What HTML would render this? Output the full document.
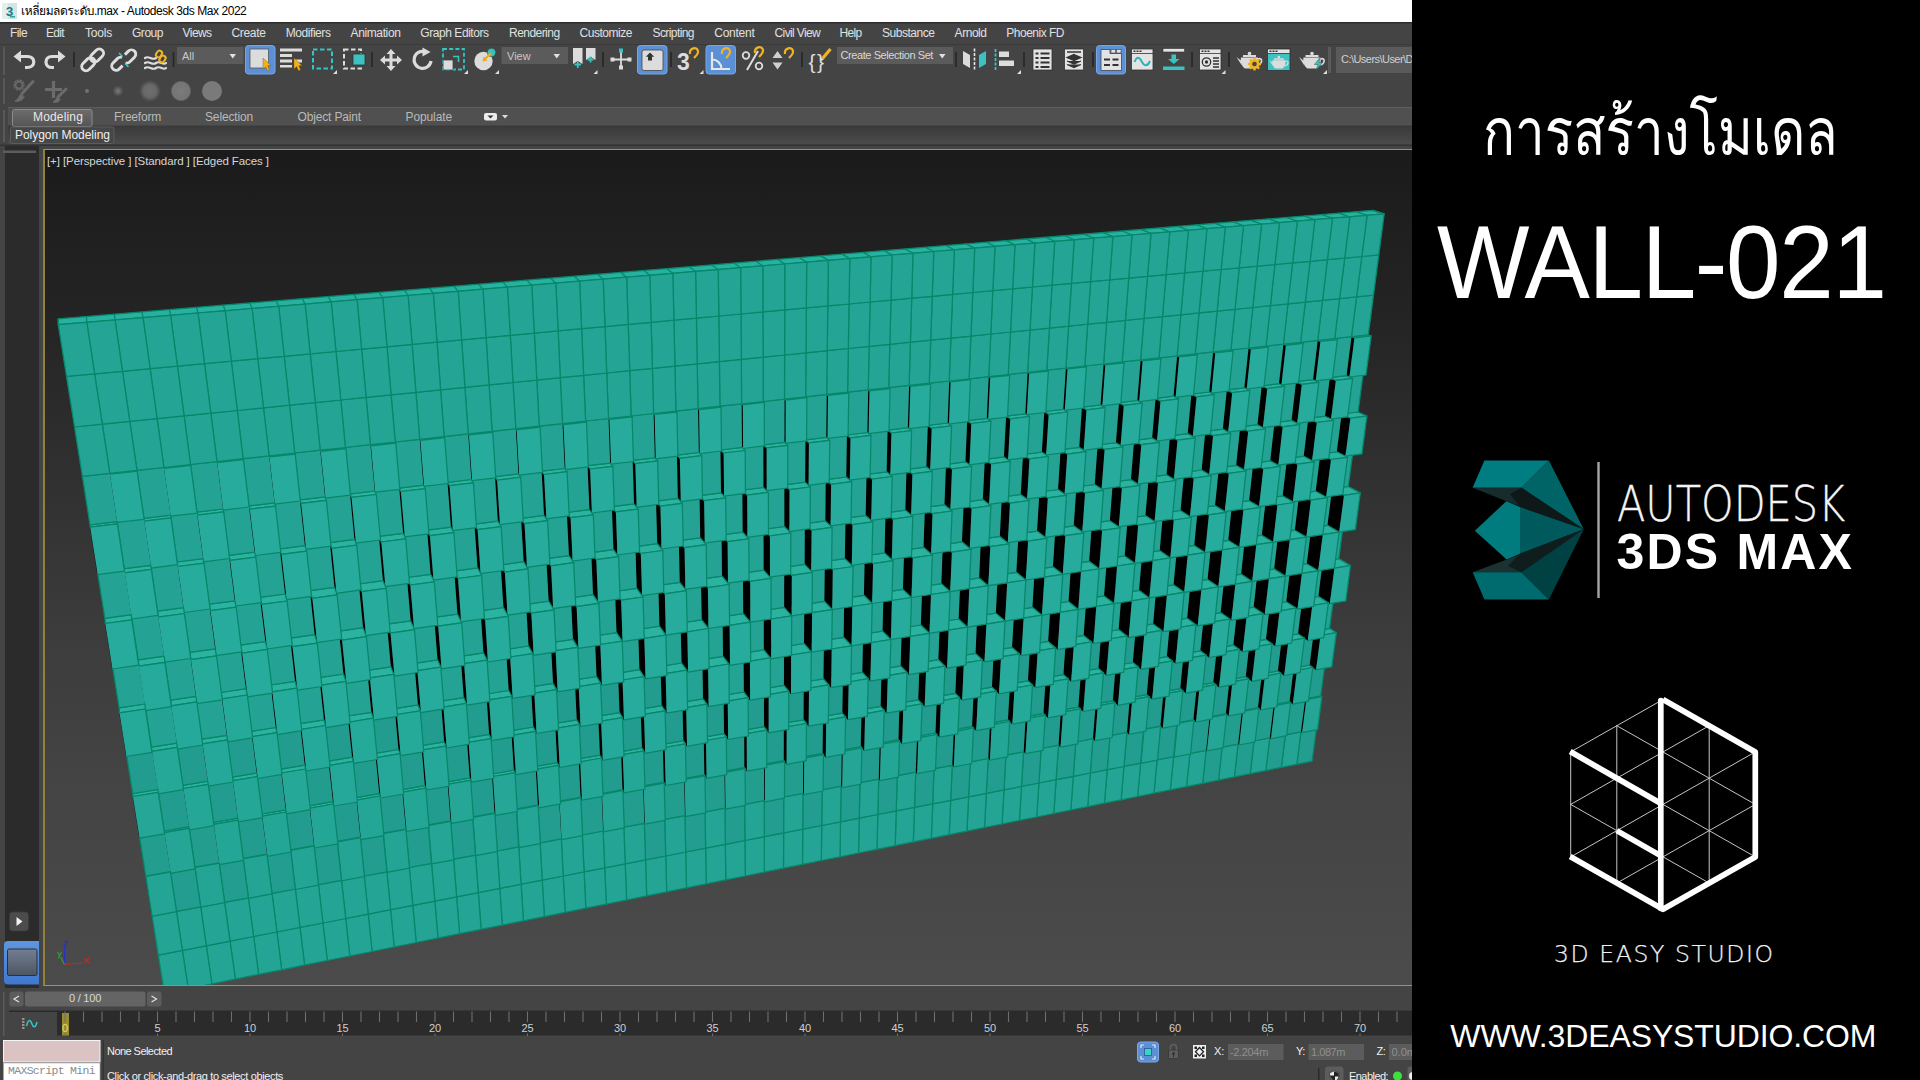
<!DOCTYPE html>
<html lang="th"><head><meta charset="utf-8"><title>WALL-021</title>
<style>
*{margin:0;padding:0;box-sizing:border-box}
html,body{width:1920px;height:1080px;overflow:hidden;background:#444}
body{position:relative;font-family:"Liberation Sans","Loma","Noto Sans Thai","Garuda","Tlwg Typo","FreeSans",sans-serif;font-size:12px;color:#e2e2e2}
.a{position:absolute;white-space:nowrap;line-height:1}
#title{left:0;top:0;width:1412px;height:22px;background:#fff}
#menu{left:0;top:22px;width:1412px;height:22px;background:#444;border-top:1px solid #2a2a2a}
#tb{left:0;top:44px;width:1412px;height:106px;background:#444}
#lstrip{left:5px;top:146px;width:34px;height:842px;background:#2b2b2b}
#vp{left:43px;top:149px;width:1380px;height:837px;border:1px solid #b1922f;border-left:2px solid #94803a;background:linear-gradient(#1b1b1b 0,#242424 20%,#313131 40%,#3d3d3d 60%,#444 76%,#4b4b4b 100%);overflow:hidden}
#track{left:10px;top:1011px;width:1402px;height:26px;background:#2b2b2b}
#panel{left:1412px;top:0;width:508px;height:1080px;background:#000}
.t{position:absolute;white-space:nowrap;line-height:1;transform-origin:0 50%}
svg{position:absolute;left:0;top:0;overflow:visible}
#w polygon{stroke:#07876a;stroke-width:1.25;stroke-linejoin:round}
#w .e{stroke:#07876a;stroke-width:1.25;fill:none;stroke-linejoin:round}
#w .n{stroke:none}
#w .k{fill:#000;stroke:#000;stroke-width:.3}
#w .t{fill:#2cb2a1}
</style></head><body>
<div class="a" id="title"></div><div class="a" id="menu"></div><div class="a" id="tb"></div><div class="a" id="lstrip"></div>
<div class="a" id="vp"><svg width="1380" height="837" viewBox="44 150 1380 837" style="left:-1px;top:0"><g id="w"><polygon points="58.3,324.7 1384.2,213.9 1372.8,210.3 58.2,318.8" fill="#27b1a1"/>
<path class="e" d="M58.3,324.7 L58.2,318.8 M86.8,322.3 L86.4,316.5 M115.0,320.0 L114.3,314.2 M143.0,317.6 L141.9,311.9 M170.6,315.3 L169.3,309.7 M198.0,313.0 L196.4,307.4 M225.2,310.8 L223.3,305.2 M252.1,308.5 L249.9,303.0 M278.7,306.3 L276.2,300.8 M305.1,304.1 L302.4,298.7 M331.2,301.9 L328.2,296.5 M357.1,299.7 L353.9,294.4 M382.7,297.6 L379.2,292.3 M408.1,295.5 L404.4,290.2 M433.3,293.4 L429.3,288.2 M458.2,291.3 L454.0,286.2 M483.0,289.2 L478.5,284.1 M507.4,287.2 L502.8,282.1 M531.7,285.1 L526.8,280.1 M555.8,283.1 L550.7,278.2 M579.6,281.1 L574.3,276.2 M603.2,279.2 L597.7,274.3 M626.6,277.2 L620.9,272.4 M649.8,275.3 L643.9,270.5 M672.8,273.3 L666.7,268.6 M695.6,271.4 L689.3,266.7 M718.2,269.6 L711.7,264.9 M740.6,267.7 L733.9,263.1 M762.8,265.8 L755.9,261.2 M784.8,264.0 L777.7,259.4 M806.7,262.2 L799.4,257.6 M828.3,260.4 L820.8,255.9 M849.8,258.6 L842.1,254.1 M871.0,256.8 L863.2,252.4 M892.1,255.0 L884.2,250.6 M913.0,253.3 L904.9,248.9 M933.8,251.5 L925.5,247.2 M954.3,249.8 L945.9,245.5 M974.7,248.1 L966.1,243.9 M995.0,246.4 L986.2,242.2 M1015.0,244.7 L1006.1,240.6 M1034.9,243.1 L1025.9,238.9 M1054.7,241.4 L1045.5,237.3 M1074.2,239.8 L1064.9,235.7 M1093.7,238.2 L1084.2,234.1 M1112.9,236.6 L1103.3,232.6 M1132.0,235.0 L1122.3,231.0 M1151.0,233.4 L1141.1,229.4 M1169.8,231.8 L1159.8,227.9 M1188.4,230.3 L1178.3,226.4 M1206.9,228.7 L1196.7,224.8 M1225.3,227.2 L1214.9,223.3 M1243.5,225.7 L1233.0,221.8 M1261.6,224.1 L1250.9,220.4 M1279.5,222.7 L1268.8,218.9 M1297.3,221.2 L1286.4,217.4 M1314.9,219.7 L1304.0,216.0 M1332.4,218.2 L1321.4,214.5 M1349.8,216.8 L1338.7,213.1 M1367.1,215.3 L1355.8,211.7 M1384.2,213.9 L1372.8,210.3"/>
<polygon points="1300.9,731.8 1316.4,728.8 1312.1,761.2 1296.8,764.3" fill="#229d8f"/>
<polygon class="k" points="1306.4,699.6 1305.2,698.8 1300.9,731.8 1302.1,732.7"/>
<polygon class="t" points="1306.4,699.6 1321.9,696.7 1320.7,695.8 1305.2,698.8"/>
<polygon class="n" points="1306.4,699.6 1321.9,696.7 1317.6,729.7 1302.1,732.7" fill="#24a596"/><path class="e" d="M1306.4,699.6 L1321.9,696.7 L1317.6,729.7 L1302.1,732.7"/>
<polygon points="1309.5,665.2 1325.1,662.3 1320.7,695.8 1305.2,698.8" fill="#229c8e"/>
<polygon class="k" points="1320.5,635.5 1313.8,631.1 1309.5,665.2 1316.1,669.8"/>
<polygon class="t" points="1320.5,635.5 1336.4,632.7 1329.6,628.3 1313.8,631.1"/>
<polygon class="n" points="1320.5,635.5 1336.4,632.7 1331.8,666.9 1316.1,669.8" fill="#25aa9a"/><path class="e" d="M1320.5,635.5 L1336.4,632.7 L1331.8,666.9 L1316.1,669.8"/>
<polygon points="1318.3,596.4 1334.2,593.7 1329.6,628.3 1313.8,631.1" fill="#24a294"/>
<polygon class="k" points="1334.4,568.2 1322.8,561.1 1318.3,596.4 1329.8,603.7"/>
<polygon class="t" points="1334.4,568.2 1350.5,565.6 1338.8,558.6 1322.8,561.1"/>
<polygon class="n" points="1334.4,568.2 1350.5,565.6 1345.8,601.0 1329.8,603.7" fill="#26ab9c"/><path class="e" d="M1334.4,568.2 L1350.5,565.6 L1345.8,601.0 L1329.8,603.7"/>
<polygon points="1327.4,525.3 1343.5,522.8 1338.8,558.6 1322.8,561.1" fill="#24a294"/>
<polygon class="k" points="1344.0,495.3 1332.1,488.8 1327.4,525.3 1339.2,532.1"/>
<polygon class="t" points="1344.0,495.3 1360.3,492.9 1348.3,486.5 1332.1,488.8"/>
<polygon class="n" points="1344.0,495.3 1360.3,492.9 1355.4,529.6 1339.2,532.1" fill="#26ab9c"/><path class="e" d="M1344.0,495.3 L1360.3,492.9 L1355.4,529.6 L1339.2,532.1"/>
<polygon points="1336.8,451.8 1353.2,449.5 1348.3,486.5 1332.1,488.8" fill="#24a294"/>
<polygon class="k" points="1350.4,418.2 1341.6,414.0 1336.8,451.8 1345.4,456.2"/>
<polygon class="t" points="1350.4,418.2 1366.9,416.1 1358.1,412.0 1341.6,414.0"/>
<polygon class="n" points="1350.4,418.2 1366.9,416.1 1361.9,453.9 1345.4,456.2" fill="#26ab9c"/><path class="e" d="M1350.4,418.2 L1366.9,416.1 L1361.9,453.9 L1345.4,456.2"/>
<polygon points="1346.5,375.7 1363.1,373.7 1358.1,412.0 1341.6,414.0" fill="#24a294"/>
<polygon class="k" points="1354.4,337.9 1351.5,336.6 1346.5,375.7 1349.4,377.0"/>
<polygon class="t" points="1354.4,337.9 1371.2,336.0 1368.3,334.8 1351.5,336.6"/>
<polygon class="n" points="1354.4,337.9 1371.2,336.0 1366.0,375.0 1349.4,377.0" fill="#26ab9c"/><path class="e" d="M1354.4,337.9 L1371.2,336.0 L1366.0,375.0 L1349.4,377.0"/>
<polygon points="1356.6,296.9 1373.5,295.2 1368.3,334.8 1351.5,336.6" fill="#24a495"/>
<polygon points="1361.8,256.5 1378.8,254.9 1373.5,295.2 1356.6,296.9" fill="#24a495"/>
<polygon points="1367.1,215.3 1384.2,213.9 1378.8,254.9 1361.8,256.5" fill="#24a495"/>
<polygon points="1285.4,734.8 1300.9,731.8 1296.8,764.3 1281.3,767.4" fill="#24a495"/>
<polygon class="n" points="1289.5,701.7 1305.2,698.8 1300.9,731.8 1285.4,734.8" fill="#229d8e"/><path class="e" d="M1305.2,698.8 L1289.5,701.7 L1285.4,734.8 L1300.9,731.8"/>
<polygon class="k" points="1297.0,670.4 1293.7,668.0 1289.5,701.7 1292.8,704.1"/>
<polygon class="t" points="1297.0,670.4 1312.8,667.5 1309.5,665.2 1293.7,668.0"/>
<polygon class="n" points="1297.0,670.4 1312.8,667.5 1308.4,701.1 1292.8,704.1" fill="#25a798"/><path class="e" d="M1297.0,670.4 L1312.8,667.5 L1308.4,701.1 L1292.8,704.1"/>
<polygon class="n" points="1298.0,633.8 1313.8,631.1 1309.5,665.2 1293.7,668.0" fill="#229c8e"/><path class="e" d="M1313.8,631.1 L1298.0,633.8 L1293.7,668.0 L1309.5,665.2"/>
<polygon class="k" points="1312.3,605.5 1302.3,599.1 1298.0,633.8 1307.8,640.5"/>
<polygon class="t" points="1312.3,605.5 1328.4,602.8 1318.3,596.4 1302.3,599.1"/>
<polygon class="n" points="1312.3,605.5 1328.4,602.8 1323.8,637.7 1307.8,640.5" fill="#26ab9c"/><path class="e" d="M1312.3,605.5 L1328.4,602.8 L1323.8,637.7 L1307.8,640.5"/>
<polygon class="n" points="1306.7,563.7 1322.8,561.1 1318.3,596.4 1302.3,599.1" fill="#24a294"/><path class="e" d="M1322.8,561.1 L1306.7,563.7 L1302.3,599.1 L1318.3,596.4"/>
<polygon class="k" points="1322.8,534.6 1311.2,527.7 1306.7,563.7 1318.2,570.8"/>
<polygon class="t" points="1322.8,534.6 1339.2,532.1 1327.4,525.3 1311.2,527.7"/>
<polygon class="n" points="1322.8,534.6 1339.2,532.1 1334.4,568.2 1318.2,570.8" fill="#26ab9c"/><path class="e" d="M1322.8,534.6 L1339.2,532.1 L1334.4,568.2 L1318.2,570.8"/>
<polygon class="n" points="1315.7,491.2 1332.1,488.8 1327.4,525.3 1311.2,527.7" fill="#24a294"/><path class="e" d="M1332.1,488.8 L1315.7,491.2 L1311.2,527.7 L1327.4,525.3"/>
<polygon class="k" points="1331.0,459.5 1320.3,454.0 1315.7,491.2 1326.2,497.0"/>
<polygon class="t" points="1331.0,459.5 1347.6,457.3 1336.8,451.8 1320.3,454.0"/>
<polygon class="n" points="1331.0,459.5 1347.6,457.3 1342.7,494.6 1326.2,497.0" fill="#26ab9c"/><path class="e" d="M1331.0,459.5 L1347.6,457.3 L1342.7,494.6 L1326.2,497.0"/>
<polygon class="n" points="1325.0,416.2 1341.6,414.0 1336.8,451.8 1320.3,454.0" fill="#24a294"/><path class="e" d="M1341.6,414.0 L1325.0,416.2 L1320.3,454.0 L1336.8,451.8"/>
<polygon class="k" points="1335.8,380.4 1329.8,377.7 1325.0,416.2 1331.0,419.1"/>
<polygon class="t" points="1335.8,380.4 1352.6,378.4 1346.5,375.7 1329.8,377.7"/>
<polygon class="n" points="1335.8,380.4 1352.6,378.4 1347.6,416.9 1331.0,419.1" fill="#26ab9c"/><path class="e" d="M1335.8,380.4 L1352.6,378.4 L1347.6,416.9 L1331.0,419.1"/>
<polygon class="n" points="1334.7,338.5 1351.5,336.6 1346.5,375.7 1329.8,377.7" fill="#24a394"/><path class="e" d="M1351.5,336.6 L1334.7,338.5 L1329.8,377.7 L1346.5,375.7"/>
<polygon points="1339.6,298.6 1356.6,296.9 1351.5,336.6 1334.7,338.5" fill="#24a495"/>
<polygon points="1344.7,258.1 1361.8,256.5 1356.6,296.9 1339.6,298.6" fill="#24a495"/>
<polygon points="1349.8,216.8 1367.1,215.3 1361.8,256.5 1344.7,258.1" fill="#24a495"/>
<polygon points="1269.7,737.9 1285.4,734.8 1281.3,767.4 1265.8,770.6" fill="#239d8f"/>
<polygon class="k" points="1274.9,705.6 1273.7,704.7 1269.7,737.9 1270.9,738.8"/>
<polygon class="t" points="1274.9,705.6 1290.7,702.6 1289.5,701.7 1273.7,704.7"/>
<polygon class="n" points="1274.9,705.6 1290.7,702.6 1286.6,735.7 1270.9,738.8" fill="#24a596"/><path class="e" d="M1274.9,705.6 L1290.7,702.6 L1286.6,735.7 L1270.9,738.8"/>
<polygon class="n" points="1277.8,670.9 1293.7,668.0 1289.5,701.7 1273.7,704.7" fill="#229c8e"/><path class="e" d="M1293.7,668.0 L1277.8,670.9 L1273.7,704.7 L1289.5,701.7"/>
<polygon class="k" points="1288.4,641.0 1282.0,636.6 1277.8,670.9 1284.2,675.5"/>
<polygon class="t" points="1288.4,641.0 1304.5,638.2 1298.0,633.8 1282.0,636.6"/>
<polygon class="n" points="1288.4,641.0 1304.5,638.2 1300.2,672.6 1284.2,675.5" fill="#25aa9a"/><path class="e" d="M1288.4,641.0 L1304.5,638.2 L1300.2,672.6 L1284.2,675.5"/>
<polygon class="n" points="1286.2,601.7 1302.3,599.1 1298.0,633.8 1282.0,636.6" fill="#24a294"/><path class="e" d="M1302.3,599.1 L1286.2,601.7 L1282.0,636.6 L1298.0,633.8"/>
<polygon class="k" points="1301.9,573.4 1290.5,566.3 1286.2,601.7 1297.5,609.1"/>
<polygon class="t" points="1301.9,573.4 1318.2,570.8 1306.7,563.7 1290.5,566.3"/>
<polygon class="n" points="1301.9,573.4 1318.2,570.8 1313.7,606.4 1297.5,609.1" fill="#26ab9c"/><path class="e" d="M1301.9,573.4 L1318.2,570.8 L1313.7,606.4 L1297.5,609.1"/>
<polygon class="n" points="1294.8,530.2 1311.2,527.7 1306.7,563.7 1290.5,566.3" fill="#24a294"/><path class="e" d="M1311.2,527.7 L1294.8,530.2 L1290.5,566.3 L1306.7,563.7"/>
<polygon class="k" points="1310.9,500.1 1299.2,493.5 1294.8,530.2 1306.4,537.1"/>
<polygon class="t" points="1310.9,500.1 1327.5,497.7 1315.7,491.2 1299.2,493.5"/>
<polygon class="n" points="1310.9,500.1 1327.5,497.7 1322.8,534.6 1306.4,537.1" fill="#26ab9c"/><path class="e" d="M1310.9,500.1 L1327.5,497.7 L1322.8,534.6 L1306.4,537.1"/>
<polygon class="n" points="1303.7,456.2 1320.3,454.0 1315.7,491.2 1299.2,493.5" fill="#24a294"/><path class="e" d="M1320.3,454.0 L1303.7,456.2 L1299.2,493.5 L1315.7,491.2"/>
<polygon class="k" points="1316.8,422.5 1308.3,418.3 1303.7,456.2 1312.1,460.7"/>
<polygon class="t" points="1316.8,422.5 1333.6,420.3 1325.0,416.2 1308.3,418.3"/>
<polygon class="n" points="1316.8,422.5 1333.6,420.3 1328.8,458.4 1312.1,460.7" fill="#26ab9c"/><path class="e" d="M1316.8,422.5 L1333.6,420.3 L1328.8,458.4 L1312.1,460.7"/>
<polygon class="n" points="1313.0,379.7 1329.8,377.7 1325.0,416.2 1308.3,418.3" fill="#24a294"/><path class="e" d="M1329.8,377.7 L1313.0,379.7 L1308.3,418.3 L1325.0,416.2"/>
<polygon class="k" points="1320.4,341.5 1317.7,340.4 1313.0,379.7 1315.7,380.9"/>
<polygon class="t" points="1320.4,341.5 1337.4,339.7 1334.7,338.5 1317.7,340.4"/>
<polygon class="n" points="1320.4,341.5 1337.4,339.7 1332.5,378.9 1315.7,380.9" fill="#26ab9c"/><path class="e" d="M1320.4,341.5 L1337.4,339.7 L1332.5,378.9 L1315.7,380.9"/>
<polygon points="1322.5,300.4 1339.6,298.6 1334.7,338.5 1317.7,340.4" fill="#24a495"/>
<polygon points="1327.4,259.7 1344.7,258.1 1339.6,298.6 1322.5,300.4" fill="#24a495"/>
<polygon points="1332.4,218.2 1349.8,216.8 1344.7,258.1 1327.4,259.7" fill="#24a495"/>
<polygon points="1254.0,741.0 1269.7,737.9 1265.8,770.6 1250.2,773.7" fill="#24a495"/>
<polygon class="n" points="1257.9,707.7 1273.7,704.7 1269.7,737.9 1254.0,741.0" fill="#229d8e"/><path class="e" d="M1273.7,704.7 L1257.9,707.7 L1254.0,741.0 L1269.7,737.9"/>
<polygon class="k" points="1264.9,676.1 1261.8,673.8 1257.9,707.7 1260.9,710.0"/>
<polygon class="t" points="1264.9,676.1 1280.9,673.2 1277.8,670.9 1261.8,673.8"/>
<polygon class="n" points="1264.9,676.1 1280.9,673.2 1276.8,707.0 1260.9,710.0" fill="#25a798"/><path class="e" d="M1264.9,676.1 L1280.9,673.2 L1276.8,707.0 L1260.9,710.0"/>
<polygon class="n" points="1265.9,639.4 1282.0,636.6 1277.8,670.9 1261.8,673.8" fill="#229c8e"/><path class="e" d="M1282.0,636.6 L1265.9,639.4 L1261.8,673.8 L1277.8,670.9"/>
<polygon class="k" points="1279.6,610.9 1269.9,604.4 1265.9,639.4 1275.4,646.1"/>
<polygon class="t" points="1279.6,610.9 1296.0,608.1 1286.2,601.7 1269.9,604.4"/>
<polygon class="n" points="1279.6,610.9 1296.0,608.1 1291.6,643.2 1275.4,646.1" fill="#26ab9c"/><path class="e" d="M1279.6,610.9 L1296.0,608.1 L1291.6,643.2 L1275.4,646.1"/>
<polygon class="n" points="1274.1,568.9 1290.5,566.3 1286.2,601.7 1269.9,604.4" fill="#24a294"/><path class="e" d="M1290.5,566.3 L1274.1,568.9 L1269.9,604.4 L1286.2,601.7"/>
<polygon class="k" points="1289.8,539.6 1278.3,532.7 1274.1,568.9 1285.4,576.1"/>
<polygon class="t" points="1289.8,539.6 1306.4,537.1 1294.8,530.2 1278.3,532.7"/>
<polygon class="n" points="1289.8,539.6 1306.4,537.1 1301.9,573.4 1285.4,576.1" fill="#26ab9c"/><path class="e" d="M1289.8,539.6 L1306.4,537.1 L1301.9,573.4 L1285.4,576.1"/>
<polygon class="n" points="1282.6,495.9 1299.2,493.5 1294.8,530.2 1278.3,532.7" fill="#24a294"/><path class="e" d="M1299.2,493.5 L1282.6,495.9 L1278.3,532.7 L1294.8,530.2"/>
<polygon class="k" points="1297.4,464.1 1287.0,458.5 1282.6,495.9 1292.9,501.8"/>
<polygon class="t" points="1297.4,464.1 1314.2,461.8 1303.7,456.2 1287.0,458.5"/>
<polygon class="n" points="1297.4,464.1 1314.2,461.8 1309.6,499.4 1292.9,501.8" fill="#26ab9c"/><path class="e" d="M1297.4,464.1 L1314.2,461.8 L1309.6,499.4 L1292.9,501.8"/>
<polygon class="n" points="1291.5,420.4 1308.3,418.3 1303.7,456.2 1287.0,458.5" fill="#24a294"/><path class="e" d="M1308.3,418.3 L1291.5,420.4 L1287.0,458.5 L1303.7,456.2"/>
<polygon class="k" points="1301.8,384.4 1296.0,381.7 1291.5,420.4 1297.2,423.3"/>
<polygon class="t" points="1301.8,384.4 1318.8,382.4 1313.0,379.7 1296.0,381.7"/>
<polygon class="n" points="1301.8,384.4 1318.8,382.4 1314.1,421.2 1297.2,423.3" fill="#26ab9c"/><path class="e" d="M1301.8,384.4 L1318.8,382.4 L1314.1,421.2 L1297.2,423.3"/>
<polygon class="n" points="1300.6,342.3 1317.7,340.4 1313.0,379.7 1296.0,381.7" fill="#24a394"/><path class="e" d="M1317.7,340.4 L1300.6,342.3 L1296.0,381.7 L1313.0,379.7"/>
<polygon points="1305.3,302.1 1322.5,300.4 1317.7,340.4 1300.6,342.3" fill="#24a495"/>
<polygon points="1310.1,261.3 1327.4,259.7 1322.5,300.4 1305.3,302.1" fill="#24a495"/>
<polygon points="1314.9,219.7 1332.4,218.2 1327.4,259.7 1310.1,261.3" fill="#24a495"/>
<polygon points="1238.1,744.1 1254.0,741.0 1250.2,773.7 1234.4,776.9" fill="#239d8f"/>
<polygon class="k" points="1243.0,711.5 1241.9,710.7 1238.1,744.1 1239.2,745.0"/>
<polygon class="t" points="1243.0,711.5 1259.0,708.5 1257.9,707.7 1241.9,710.7"/>
<polygon class="n" points="1243.0,711.5 1259.0,708.5 1255.1,741.9 1239.2,745.0" fill="#24a596"/><path class="e" d="M1243.0,711.5 L1259.0,708.5 L1255.1,741.9 L1239.2,745.0"/>
<polygon class="n" points="1245.7,676.7 1261.8,673.8 1257.9,707.7 1241.9,710.7" fill="#229c8e"/><path class="e" d="M1261.8,673.8 L1245.7,676.7 L1241.9,710.7 L1257.9,707.7"/>
<polygon class="k" points="1255.9,646.6 1249.6,642.2 1245.7,676.7 1251.9,681.3"/>
<polygon class="t" points="1255.9,646.6 1272.1,643.8 1265.9,639.4 1249.6,642.2"/>
<polygon class="n" points="1255.9,646.6 1272.1,643.8 1268.1,678.3 1251.9,681.3" fill="#25aa9a"/><path class="e" d="M1255.9,646.6 L1272.1,643.8 L1268.1,678.3 L1251.9,681.3"/>
<polygon class="n" points="1253.6,607.2 1269.9,604.4 1265.9,639.4 1249.6,642.2" fill="#24a294"/><path class="e" d="M1269.9,604.4 L1253.6,607.2 L1249.6,642.2 L1265.9,639.4"/>
<polygon class="k" points="1268.9,578.7 1257.6,571.5 1253.6,607.2 1264.7,614.7"/>
<polygon class="t" points="1268.9,578.7 1285.4,576.1 1274.1,568.9 1257.6,571.5"/>
<polygon class="n" points="1268.9,578.7 1285.4,576.1 1281.1,611.9 1264.7,614.7" fill="#26ab9c"/><path class="e" d="M1268.9,578.7 L1285.4,576.1 L1281.1,611.9 L1264.7,614.7"/>
<polygon class="n" points="1261.8,535.2 1278.3,532.7 1274.1,568.9 1257.6,571.5" fill="#24a294"/><path class="e" d="M1278.3,532.7 L1261.8,535.2 L1257.6,571.5 L1274.1,568.9"/>
<polygon class="k" points="1277.4,505.0 1265.9,498.3 1261.8,535.2 1273.1,542.2"/>
<polygon class="t" points="1277.4,505.0 1294.2,502.5 1282.6,495.9 1265.9,498.3"/>
<polygon class="n" points="1277.4,505.0 1294.2,502.5 1289.8,539.6 1273.1,542.2" fill="#26ab9c"/><path class="e" d="M1277.4,505.0 L1294.2,502.5 L1289.8,539.6 L1273.1,542.2"/>
<polygon class="n" points="1270.2,460.8 1287.0,458.5 1282.6,495.9 1265.9,498.3" fill="#24a294"/><path class="e" d="M1287.0,458.5 L1270.2,460.8 L1265.9,498.3 L1282.6,495.9"/>
<polygon class="k" points="1282.7,426.8 1274.5,422.6 1270.2,460.8 1278.3,465.2"/>
<polygon class="t" points="1282.7,426.8 1299.8,424.6 1291.5,420.4 1274.5,422.6"/>
<polygon class="n" points="1282.7,426.8 1299.8,424.6 1295.2,462.9 1278.3,465.2" fill="#26ab9c"/><path class="e" d="M1282.7,426.8 L1299.8,424.6 L1295.2,462.9 L1278.3,465.2"/>
<polygon class="n" points="1278.9,383.7 1296.0,381.7 1291.5,420.4 1274.5,422.6" fill="#24a294"/><path class="e" d="M1296.0,381.7 L1278.9,383.7 L1274.5,422.6 L1291.5,420.4"/>
<polygon class="k" points="1285.9,345.3 1283.4,344.2 1278.9,383.7 1281.4,384.9"/>
<polygon class="t" points="1285.9,345.3 1303.2,343.4 1300.6,342.3 1283.4,344.2"/>
<polygon class="n" points="1285.9,345.3 1303.2,343.4 1298.5,382.9 1281.4,384.9" fill="#26ab9c"/><path class="e" d="M1285.9,345.3 L1303.2,343.4 L1298.5,382.9 L1281.4,384.9"/>
<polygon points="1287.9,303.9 1305.3,302.1 1300.6,342.3 1283.4,344.2" fill="#24a495"/>
<polygon points="1292.6,262.9 1310.1,261.3 1305.3,302.1 1287.9,303.9" fill="#24a495"/>
<polygon points="1297.3,221.2 1314.9,219.7 1310.1,261.3 1292.6,262.9" fill="#24a495"/>
<polygon points="1222.1,747.2 1238.1,744.1 1234.4,776.9 1218.5,780.1" fill="#24a495"/>
<polygon class="n" points="1225.8,713.7 1241.9,710.7 1238.1,744.1 1222.1,747.2" fill="#229d8e"/><path class="e" d="M1241.9,710.7 L1225.8,713.7 L1222.1,747.2 L1238.1,744.1"/>
<polygon class="k" points="1232.4,681.9 1229.5,679.7 1225.8,713.7 1228.7,716.0"/>
<polygon class="t" points="1232.4,681.9 1248.7,678.9 1245.7,676.7 1229.5,679.7"/>
<polygon class="n" points="1232.4,681.9 1248.7,678.9 1244.8,712.9 1228.7,716.0" fill="#25a797"/><path class="e" d="M1232.4,681.9 L1248.7,678.9 L1244.8,712.9 L1228.7,716.0"/>
<polygon class="n" points="1233.3,645.1 1249.6,642.2 1245.7,676.7 1229.5,679.7" fill="#229c8e"/><path class="e" d="M1249.6,642.2 L1233.3,645.1 L1229.5,679.7 L1245.7,676.7"/>
<polygon class="k" points="1246.6,616.4 1237.2,609.9 1233.3,645.1 1242.6,651.8"/>
<polygon class="t" points="1246.6,616.4 1263.1,613.6 1253.6,607.2 1237.2,609.9"/>
<polygon class="n" points="1246.6,616.4 1263.1,613.6 1259.0,648.9 1242.6,651.8" fill="#26ab9c"/><path class="e" d="M1246.6,616.4 L1263.1,613.6 L1259.0,648.9 L1242.6,651.8"/>
<polygon class="n" points="1241.1,574.1 1257.6,571.5 1253.6,607.2 1237.2,609.9" fill="#24a294"/><path class="e" d="M1257.6,571.5 L1241.1,574.1 L1237.2,609.9 L1253.6,607.2"/>
<polygon class="k" points="1256.3,544.7 1245.0,537.7 1241.1,574.1 1252.2,581.4"/>
<polygon class="t" points="1256.3,544.7 1273.1,542.2 1261.8,535.2 1245.0,537.7"/>
<polygon class="n" points="1256.3,544.7 1273.1,542.2 1268.9,578.7 1252.2,581.4" fill="#26ab9c"/><path class="e" d="M1256.3,544.7 L1273.1,542.2 L1268.9,578.7 L1252.2,581.4"/>
<polygon class="n" points="1249.1,500.7 1265.9,498.3 1261.8,535.2 1245.0,537.7" fill="#24a294"/><path class="e" d="M1265.9,498.3 L1249.1,500.7 L1245.0,537.7 L1261.8,535.2"/>
<polygon class="k" points="1263.3,468.7 1253.2,463.1 1249.1,500.7 1259.1,506.6"/>
<polygon class="t" points="1263.3,468.7 1280.4,466.4 1270.2,460.8 1253.2,463.1"/>
<polygon class="n" points="1263.3,468.7 1280.4,466.4 1276.0,504.2 1259.1,506.6" fill="#26ab9c"/><path class="e" d="M1263.3,468.7 L1280.4,466.4 L1276.0,504.2 L1259.1,506.6"/>
<polygon class="n" points="1257.4,424.7 1274.5,422.6 1270.2,460.8 1253.2,463.1" fill="#24a294"/><path class="e" d="M1274.5,422.6 L1257.4,424.7 L1253.2,463.1 L1270.2,460.8"/>
<polygon class="k" points="1267.3,388.5 1261.7,385.8 1257.4,424.7 1262.9,427.6"/>
<polygon class="t" points="1267.3,388.5 1284.6,386.4 1278.9,383.7 1261.7,385.8"/>
<polygon class="n" points="1267.3,388.5 1284.6,386.4 1280.1,425.5 1262.9,427.6" fill="#26ab9c"/><path class="e" d="M1267.3,388.5 L1284.6,386.4 L1280.1,425.5 L1262.9,427.6"/>
<polygon class="n" points="1266.0,346.1 1283.4,344.2 1278.9,383.7 1261.7,385.8" fill="#24a394"/><path class="e" d="M1283.4,344.2 L1266.0,346.1 L1261.7,385.8 L1278.9,383.7"/>
<polygon points="1270.4,305.7 1287.9,303.9 1283.4,344.2 1266.0,346.1" fill="#24a495"/>
<polygon points="1274.9,264.5 1292.6,262.9 1287.9,303.9 1270.4,305.7" fill="#24a495"/>
<polygon points="1279.5,222.7 1297.3,221.2 1292.6,262.9 1274.9,264.5" fill="#24a495"/>
<polygon points="1206.1,750.3 1222.1,747.2 1218.5,780.1 1202.6,783.4" fill="#239d8f"/>
<polygon class="k" points="1210.5,717.4 1209.6,716.8 1206.1,750.3 1206.9,751.0"/>
<polygon class="t" points="1210.5,717.4 1226.7,714.4 1225.8,713.7 1209.6,716.8"/>
<polygon class="n" points="1210.5,717.4 1226.7,714.4 1223.0,747.9 1206.9,751.0" fill="#24a596"/><path class="e" d="M1210.5,717.4 L1226.7,714.4 L1223.0,747.9 L1206.9,751.0"/>
<polygon class="n" points="1213.2,682.6 1229.5,679.7 1225.8,713.7 1209.6,716.8" fill="#229c8e"/><path class="e" d="M1229.5,679.7 L1213.2,682.6 L1209.6,716.8 L1225.8,713.7"/>
<polygon class="k" points="1222.8,652.3 1216.9,647.9 1213.2,682.6 1219.1,687.2"/>
<polygon class="t" points="1222.8,652.3 1239.4,649.4 1233.3,645.1 1216.9,647.9"/>
<polygon class="n" points="1222.8,652.3 1239.4,649.4 1235.5,684.2 1219.1,687.2" fill="#25aa9a"/><path class="e" d="M1222.8,652.3 L1239.4,649.4 L1235.5,684.2 L1219.1,687.2"/>
<polygon class="n" points="1220.6,612.6 1237.2,609.9 1233.3,645.1 1216.9,647.9" fill="#24a294"/><path class="e" d="M1237.2,609.9 L1220.6,612.6 L1216.9,647.9 L1233.3,645.1"/>
<polygon class="k" points="1235.4,584.1 1224.4,576.8 1220.6,612.6 1231.4,620.3"/>
<polygon class="t" points="1235.4,584.1 1252.2,581.4 1241.1,574.1 1224.4,576.8"/>
<polygon class="n" points="1235.4,584.1 1252.2,581.4 1248.1,617.4 1231.4,620.3" fill="#26ab9c"/><path class="e" d="M1235.4,584.1 L1252.2,581.4 L1248.1,617.4 L1231.4,620.3"/>
<polygon class="n" points="1228.2,540.3 1245.0,537.7 1241.1,574.1 1224.4,576.8" fill="#24a294"/><path class="e" d="M1245.0,537.7 L1228.2,540.3 L1224.4,576.8 L1241.1,574.1"/>
<polygon class="k" points="1243.4,509.9 1232.1,503.1 1228.2,540.3 1239.3,547.3"/>
<polygon class="t" points="1243.4,509.9 1260.5,507.4 1249.1,500.7 1232.1,503.1"/>
<polygon class="n" points="1243.4,509.9 1260.5,507.4 1256.3,544.7 1239.3,547.3" fill="#26ab9c"/><path class="e" d="M1243.4,509.9 L1260.5,507.4 L1256.3,544.7 L1239.3,547.3"/>
<polygon class="n" points="1236.1,465.4 1253.2,463.1 1249.1,500.7 1232.1,503.1" fill="#24a294"/><path class="e" d="M1253.2,463.1 L1236.1,465.4 L1232.1,503.1 L1249.1,500.7"/>
<polygon class="k" points="1248.2,431.2 1240.2,426.9 1236.1,465.4 1244.0,469.9"/>
<polygon class="t" points="1248.2,431.2 1265.5,429.0 1257.4,424.7 1240.2,426.9"/>
<polygon class="n" points="1248.2,431.2 1265.5,429.0 1261.2,467.5 1244.0,469.9" fill="#26ab9c"/><path class="e" d="M1248.2,431.2 L1265.5,429.0 L1261.2,467.5 L1244.0,469.9"/>
<polygon class="n" points="1244.3,387.8 1261.7,385.8 1257.4,424.7 1240.2,426.9" fill="#24a294"/><path class="e" d="M1261.7,385.8 L1244.3,387.8 L1240.2,426.9 L1257.4,424.7"/>
<polygon class="k" points="1250.9,349.1 1248.5,348.0 1244.3,387.8 1246.7,389.0"/>
<polygon class="t" points="1250.9,349.1 1268.4,347.2 1266.0,346.1 1248.5,348.0"/>
<polygon class="n" points="1250.9,349.1 1268.4,347.2 1264.0,386.9 1246.7,389.0" fill="#26ab9c"/><path class="e" d="M1250.9,349.1 L1268.4,347.2 L1264.0,386.9 L1246.7,389.0"/>
<polygon points="1252.8,307.5 1270.4,305.7 1266.0,346.1 1248.5,348.0" fill="#24a495"/>
<polygon points="1257.1,266.2 1274.9,264.5 1270.4,305.7 1252.8,307.5" fill="#24a495"/>
<polygon points="1261.6,224.1 1279.5,222.7 1274.9,264.5 1257.1,266.2" fill="#24a495"/>
<polygon points="1189.9,753.5 1206.1,750.3 1202.6,783.4 1186.5,786.6" fill="#24a495"/>
<polygon class="n" points="1193.3,719.8 1209.6,716.8 1206.1,750.3 1189.9,753.5" fill="#229d8f"/><path class="e" d="M1209.6,716.8 L1193.3,719.8 L1189.9,753.5 L1206.1,750.3"/>
<polygon class="k" points="1199.5,687.7 1196.8,685.6 1193.3,719.8 1196.0,722.0"/>
<polygon class="t" points="1199.5,687.7 1216.0,684.7 1213.2,682.6 1196.8,685.6"/>
<polygon class="n" points="1199.5,687.7 1216.0,684.7 1212.3,718.9 1196.0,722.0" fill="#25a797"/><path class="e" d="M1199.5,687.7 L1216.0,684.7 L1212.3,718.9 L1196.0,722.0"/>
<polygon class="n" points="1200.3,650.8 1216.9,647.9 1213.2,682.6 1196.8,685.6" fill="#229c8e"/><path class="e" d="M1216.9,647.9 L1200.3,650.8 L1196.8,685.6 L1213.2,682.6"/>
<polygon class="k" points="1213.0,621.9 1203.9,615.4 1200.3,650.8 1209.3,657.5"/>
<polygon class="t" points="1213.0,621.9 1229.8,619.1 1220.6,612.6 1203.9,615.4"/>
<polygon class="n" points="1213.0,621.9 1229.8,619.1 1225.9,654.6 1209.3,657.5" fill="#26ab9c"/><path class="e" d="M1213.0,621.9 L1229.8,619.1 L1225.9,654.6 L1209.3,657.5"/>
<polygon class="n" points="1207.5,579.4 1224.4,576.8 1220.6,612.6 1203.9,615.4" fill="#24a294"/><path class="e" d="M1224.4,576.8 L1207.5,579.4 L1203.9,615.4 L1220.6,612.6"/>
<polygon class="k" points="1222.3,549.9 1211.3,542.8 1207.5,579.4 1218.4,586.8"/>
<polygon class="t" points="1222.3,549.9 1239.3,547.3 1228.2,540.3 1211.3,542.8"/>
<polygon class="n" points="1222.3,549.9 1239.3,547.3 1235.4,584.1 1218.4,586.8" fill="#26ab9c"/><path class="e" d="M1222.3,549.9 L1239.3,547.3 L1235.4,584.1 L1218.4,586.8"/>
<polygon class="n" points="1215.0,505.6 1232.1,503.1 1228.2,540.3 1211.3,542.8" fill="#24a294"/><path class="e" d="M1232.1,503.1 L1215.0,505.6 L1211.3,542.8 L1228.2,540.3"/>
<polygon class="k" points="1228.8,473.4 1218.9,467.7 1215.0,505.6 1224.8,511.6"/>
<polygon class="t" points="1228.8,473.4 1246.1,471.0 1236.1,465.4 1218.9,467.7"/>
<polygon class="n" points="1228.8,473.4 1246.1,471.0 1242.0,509.1 1224.8,511.6" fill="#26ab9c"/><path class="e" d="M1228.8,473.4 L1246.1,471.0 L1242.0,509.1 L1224.8,511.6"/>
<polygon class="n" points="1222.8,429.1 1240.2,426.9 1236.1,465.4 1218.9,467.7" fill="#24a294"/><path class="e" d="M1240.2,426.9 L1222.8,429.1 L1218.9,467.7 L1236.1,465.4"/>
<polygon class="k" points="1232.2,392.6 1226.8,389.9 1222.8,429.1 1228.2,432.0"/>
<polygon class="t" points="1232.2,392.6 1249.8,390.5 1244.3,387.8 1226.8,389.9"/>
<polygon class="n" points="1232.2,392.6 1249.8,390.5 1245.6,429.8 1228.2,432.0" fill="#26ab9c"/><path class="e" d="M1232.2,392.6 L1249.8,390.5 L1245.6,429.8 L1228.2,432.0"/>
<polygon class="n" points="1230.9,349.9 1248.5,348.0 1244.3,387.8 1226.8,389.9" fill="#24a394"/><path class="e" d="M1248.5,348.0 L1230.9,349.9 L1226.8,389.9 L1244.3,387.8"/>
<polygon points="1235.0,309.3 1252.8,307.5 1248.5,348.0 1230.9,349.9" fill="#24a495"/>
<polygon points="1239.2,267.8 1257.1,266.2 1252.8,307.5 1235.0,309.3" fill="#24a495"/>
<polygon points="1243.5,225.7 1261.6,224.1 1257.1,266.2 1239.2,267.8" fill="#24a495"/>
<polygon points="1173.6,756.7 1189.9,753.5 1186.5,786.6 1170.3,789.9" fill="#24a495"/>
<polygon class="k" points="1177.4,723.4 1176.9,722.9 1173.6,756.7 1174.1,757.2"/>
<polygon class="t" points="1177.4,723.4 1193.9,720.3 1193.3,719.8 1176.9,722.9"/>
<polygon points="1177.4,723.4 1193.9,720.3 1190.5,754.0 1174.1,757.2" fill="#24a596"/>
<polygon class="n" points="1180.2,688.6 1196.8,685.6 1193.3,719.8 1176.9,722.9" fill="#229c8e"/><path class="e" d="M1196.8,685.6 L1180.2,688.6 L1176.9,722.9 L1193.3,719.8"/>
<polygon class="k" points="1189.4,658.1 1183.6,653.7 1180.2,688.6 1185.9,693.1"/>
<polygon class="t" points="1189.4,658.1 1206.1,655.1 1200.3,650.8 1183.6,653.7"/>
<polygon class="n" points="1189.4,658.1 1206.1,655.1 1202.5,690.1 1185.9,693.1" fill="#25a99a"/><path class="e" d="M1189.4,658.1 L1206.1,655.1 L1202.5,690.1 L1185.9,693.1"/>
<polygon class="n" points="1187.1,618.2 1203.9,615.4 1200.3,650.8 1183.6,653.7" fill="#24a294"/><path class="e" d="M1203.9,615.4 L1187.1,618.2 L1183.6,653.7 L1200.3,650.8"/>
<polygon class="k" points="1201.4,589.6 1190.6,582.1 1187.1,618.2 1197.7,625.9"/>
<polygon class="t" points="1201.4,589.6 1218.4,586.8 1207.5,579.4 1190.6,582.1"/>
<polygon class="n" points="1201.4,589.6 1218.4,586.8 1214.6,623.1 1197.7,625.9" fill="#26ab9c"/><path class="e" d="M1201.4,589.6 L1218.4,586.8 L1214.6,623.1 L1197.7,625.9"/>
<polygon class="n" points="1194.2,545.4 1211.3,542.8 1207.5,579.4 1190.6,582.1" fill="#24a294"/><path class="e" d="M1211.3,542.8 L1194.2,545.4 L1190.6,582.1 L1207.5,579.4"/>
<polygon class="k" points="1208.9,514.9 1197.8,508.1 1194.2,545.4 1205.1,552.6"/>
<polygon class="t" points="1208.9,514.9 1226.2,512.4 1215.0,505.6 1197.8,508.1"/>
<polygon class="n" points="1208.9,514.9 1226.2,512.4 1222.3,549.9 1205.1,552.6" fill="#26ab9c"/><path class="e" d="M1208.9,514.9 L1226.2,512.4 L1222.3,549.9 L1205.1,552.6"/>
<polygon class="n" points="1201.6,470.0 1218.9,467.7 1215.0,505.6 1197.8,508.1" fill="#24a294"/><path class="e" d="M1218.9,467.7 L1201.6,470.0 L1197.8,508.1 L1215.0,505.6"/>
<polygon class="k" points="1213.1,435.6 1205.3,431.4 1201.6,470.0 1209.2,474.6"/>
<polygon class="t" points="1213.1,435.6 1230.7,433.4 1222.8,429.1 1205.3,431.4"/>
<polygon class="n" points="1213.1,435.6 1230.7,433.4 1226.7,472.2 1209.2,474.6" fill="#26ab9c"/><path class="e" d="M1213.1,435.6 L1230.7,433.4 L1226.7,472.2 L1209.2,474.6"/>
<polygon class="n" points="1209.2,392.0 1226.8,389.9 1222.8,429.1 1205.3,431.4" fill="#24a294"/><path class="e" d="M1226.8,389.9 L1209.2,392.0 L1205.3,431.4 L1222.8,429.1"/>
<polygon class="k" points="1215.3,353.0 1213.1,351.9 1209.2,392.0 1211.4,393.1"/>
<polygon class="t" points="1215.3,353.0 1233.1,351.0 1230.9,349.9 1213.1,351.9"/>
<polygon class="n" points="1215.3,353.0 1233.1,351.0 1229.0,391.0 1211.4,393.1" fill="#26ab9c"/><path class="e" d="M1215.3,353.0 L1233.1,351.0 L1229.0,391.0 L1211.4,393.1"/>
<polygon points="1217.1,311.1 1235.0,309.3 1230.9,349.9 1213.1,351.9" fill="#24a495"/>
<polygon points="1221.1,269.5 1239.2,267.8 1235.0,309.3 1217.1,311.1" fill="#24a495"/>
<polygon points="1225.3,227.2 1243.5,225.7 1239.2,267.8 1221.1,269.5" fill="#24a495"/>
<polygon points="1157.1,759.9 1173.6,756.7 1170.3,789.9 1154.0,793.2" fill="#24a495"/>
<polygon points="1160.3,726.0 1176.9,722.9 1173.6,756.7 1157.1,759.9" fill="#229d8f"/>
<polygon class="k" points="1166.1,693.7 1163.5,691.6 1160.3,726.0 1162.8,728.2"/>
<polygon class="t" points="1166.1,693.7 1182.8,690.7 1180.2,688.6 1163.5,691.6"/>
<polygon class="n" points="1166.1,693.7 1182.8,690.7 1179.4,725.0 1162.8,728.2" fill="#25a697"/><path class="e" d="M1166.1,693.7 L1182.8,690.7 L1179.4,725.0 L1162.8,728.2"/>
<polygon class="n" points="1166.8,656.6 1183.6,653.7 1180.2,688.6 1163.5,691.6" fill="#229c8e"/><path class="e" d="M1183.6,653.7 L1166.8,656.6 L1163.5,691.6 L1180.2,688.6"/>
<polygon class="k" points="1178.9,627.5 1170.1,621.0 1166.8,656.6 1175.5,663.4"/>
<polygon class="t" points="1178.9,627.5 1196.0,624.7 1187.1,618.2 1170.1,621.0"/>
<polygon class="n" points="1178.9,627.5 1196.0,624.7 1192.4,660.4 1175.5,663.4" fill="#26ab9c"/><path class="e" d="M1178.9,627.5 L1196.0,624.7 L1192.4,660.4 L1175.5,663.4"/>
<polygon class="n" points="1173.5,584.8 1190.6,582.1 1187.1,618.2 1170.1,621.0" fill="#24a294"/><path class="e" d="M1190.6,582.1 L1173.5,584.8 L1170.1,621.0 L1187.1,618.2"/>
<polygon class="k" points="1187.7,555.2 1177.0,548.0 1173.5,584.8 1184.2,592.3"/>
<polygon class="t" points="1187.7,555.2 1205.1,552.6 1194.2,545.4 1177.0,548.0"/>
<polygon class="n" points="1187.7,555.2 1205.1,552.6 1201.4,589.6 1184.2,592.3" fill="#26ab9c"/><path class="e" d="M1187.7,555.2 L1205.1,552.6 L1201.4,589.6 L1184.2,592.3"/>
<polygon class="n" points="1180.5,510.5 1197.8,508.1 1194.2,545.4 1177.0,548.0" fill="#24a294"/><path class="e" d="M1197.8,508.1 L1180.5,510.5 L1177.0,548.0 L1194.2,545.4"/>
<polygon class="k" points="1193.7,478.2 1184.1,472.4 1180.5,510.5 1190.0,516.6"/>
<polygon class="t" points="1193.7,478.2 1211.2,475.7 1201.6,470.0 1184.1,472.4"/>
<polygon class="n" points="1193.7,478.2 1211.2,475.7 1207.4,514.0 1190.0,516.6" fill="#26ab9c"/><path class="e" d="M1193.7,478.2 L1211.2,475.7 L1207.4,514.0 L1190.0,516.6"/>
<polygon class="n" points="1187.7,433.6 1205.3,431.4 1201.6,470.0 1184.1,472.4" fill="#24a294"/><path class="e" d="M1205.3,431.4 L1187.7,433.6 L1184.1,472.4 L1201.6,470.0"/>
<polygon class="k" points="1196.6,396.8 1191.4,394.1 1187.7,433.6 1192.8,436.5"/>
<polygon class="t" points="1196.6,396.8 1214.4,394.7 1209.2,392.0 1191.4,394.1"/>
<polygon class="n" points="1196.6,396.8 1214.4,394.7 1210.5,434.2 1192.8,436.5" fill="#26ab9c"/><path class="e" d="M1196.6,396.8 L1214.4,394.7 L1210.5,434.2 L1192.8,436.5"/>
<polygon class="n" points="1195.2,353.9 1213.1,351.9 1209.2,392.0 1191.4,394.1" fill="#24a394"/><path class="e" d="M1213.1,351.9 L1195.2,353.9 L1191.4,394.1 L1209.2,392.0"/>
<polygon points="1199.0,312.9 1217.1,311.1 1213.1,351.9 1195.2,353.9" fill="#24a495"/>
<polygon points="1202.9,271.2 1221.1,269.5 1217.1,311.1 1199.0,312.9" fill="#24a495"/>
<polygon points="1206.9,228.7 1225.3,227.2 1221.1,269.5 1202.9,271.2" fill="#24a495"/>
<polygon points="1140.6,763.1 1157.1,759.9 1154.0,793.2 1137.6,796.5" fill="#24a495"/>
<polygon class="k" points="1144.0,729.5 1143.6,729.2 1140.6,763.1 1140.9,763.4"/>
<polygon class="t" points="1144.0,729.5 1160.6,726.3 1160.3,726.0 1143.6,729.2"/>
<polygon points="1144.0,729.5 1160.6,726.3 1157.5,760.2 1140.9,763.4" fill="#24a495"/>
<polygon class="n" points="1146.7,694.7 1163.5,691.6 1160.3,726.0 1143.6,729.2" fill="#229c8e"/><path class="e" d="M1163.5,691.6 L1146.7,694.7 L1143.6,729.2 L1160.3,726.0"/>
<polygon class="k" points="1155.4,663.9 1149.9,659.6 1146.7,694.7 1152.2,699.2"/>
<polygon class="t" points="1155.4,663.9 1172.4,660.9 1166.8,656.6 1149.9,659.6"/>
<polygon class="n" points="1155.4,663.9 1172.4,660.9 1169.0,696.1 1152.2,699.2" fill="#25a99a"/><path class="e" d="M1155.4,663.9 L1172.4,660.9 L1169.0,696.1 L1152.2,699.2"/>
<polygon class="n" points="1153.1,623.9 1170.1,621.0 1166.8,656.6 1149.9,659.6" fill="#24a294"/><path class="e" d="M1170.1,621.0 L1153.1,623.9 L1149.9,659.6 L1166.8,656.6"/>
<polygon class="k" points="1166.9,595.1 1156.3,587.6 1153.1,623.9 1163.5,631.7"/>
<polygon class="t" points="1166.9,595.1 1184.2,592.3 1173.5,584.8 1156.3,587.6"/>
<polygon class="n" points="1166.9,595.1 1184.2,592.3 1180.7,628.8 1163.5,631.7" fill="#26ab9c"/><path class="e" d="M1166.9,595.1 L1184.2,592.3 L1180.7,628.8 L1163.5,631.7"/>
<polygon class="n" points="1159.7,550.6 1177.0,548.0 1173.5,584.8 1156.3,587.6" fill="#24a294"/><path class="e" d="M1177.0,548.0 L1159.7,550.6 L1156.3,587.6 L1173.5,584.8"/>
<polygon class="k" points="1173.8,520.0 1163.0,513.0 1159.7,550.6 1170.3,557.9"/>
<polygon class="t" points="1173.8,520.0 1191.4,517.5 1180.5,510.5 1163.0,513.0"/>
<polygon class="n" points="1173.8,520.0 1191.4,517.5 1187.7,555.2 1170.3,557.9" fill="#26ab9c"/><path class="e" d="M1173.8,520.0 L1191.4,517.5 L1187.7,555.2 L1170.3,557.9"/>
<polygon class="n" points="1166.5,474.8 1184.1,472.4 1180.5,510.5 1163.0,513.0" fill="#24a294"/><path class="e" d="M1184.1,472.4 L1166.5,474.8 L1163.0,513.0 L1180.5,510.5"/>
<polygon class="k" points="1177.5,440.2 1170.0,435.8 1166.5,474.8 1173.9,479.3"/>
<polygon class="t" points="1177.5,440.2 1195.3,437.9 1187.7,433.6 1170.0,435.8"/>
<polygon class="n" points="1177.5,440.2 1195.3,437.9 1191.6,476.9 1173.9,479.3" fill="#26ab9c"/><path class="e" d="M1177.5,440.2 L1195.3,437.9 L1191.6,476.9 L1173.9,479.3"/>
<polygon class="n" points="1173.5,396.2 1191.4,394.1 1187.7,433.6 1170.0,435.8" fill="#24a294"/><path class="e" d="M1191.4,394.1 L1173.5,396.2 L1170.0,435.8 L1187.7,433.6"/>
<polygon class="k" points="1179.2,356.9 1177.1,355.9 1173.5,396.2 1175.6,397.3"/>
<polygon class="t" points="1179.2,356.9 1197.3,354.9 1195.2,353.9 1177.1,355.9"/>
<polygon class="n" points="1179.2,356.9 1197.3,354.9 1193.5,395.2 1175.6,397.3" fill="#26ab9c"/><path class="e" d="M1179.2,356.9 L1197.3,354.9 L1193.5,395.2 L1175.6,397.3"/>
<polygon points="1180.8,314.8 1199.0,312.9 1195.2,353.9 1177.1,355.9" fill="#24a495"/>
<polygon points="1184.6,272.9 1202.9,271.2 1199.0,312.9 1180.8,314.8" fill="#24a495"/>
<polygon points="1188.4,230.3 1206.9,228.7 1202.9,271.2 1184.6,272.9" fill="#24a495"/>
<polygon points="1123.9,766.4 1140.6,763.1 1137.6,796.5 1121.1,799.9" fill="#24a495"/>
<polygon points="1126.9,732.4 1143.6,729.2 1140.6,763.1 1123.9,766.4" fill="#229d8f"/>
<polygon class="k" points="1132.2,699.7 1129.8,697.7 1126.9,732.4 1129.2,734.4"/>
<polygon class="t" points="1132.2,699.7 1149.1,696.7 1146.7,694.7 1129.8,697.7"/>
<polygon class="n" points="1132.2,699.7 1149.1,696.7 1146.0,731.2 1129.2,734.4" fill="#25a697"/><path class="e" d="M1132.2,699.7 L1149.1,696.7 L1146.0,731.2 L1129.2,734.4"/>
<polygon class="n" points="1132.8,662.5 1149.9,659.6 1146.7,694.7 1129.8,697.7" fill="#229c8e"/><path class="e" d="M1149.9,659.6 L1132.8,662.5 L1129.8,697.7 L1146.7,694.7"/>
<polygon class="k" points="1144.4,633.3 1135.9,626.7 1132.8,662.5 1141.2,669.3"/>
<polygon class="t" points="1144.4,633.3 1161.7,630.3 1153.1,623.9 1135.9,626.7"/>
<polygon class="n" points="1144.4,633.3 1161.7,630.3 1158.4,666.3 1141.2,669.3" fill="#26ab9c"/><path class="e" d="M1144.4,633.3 L1161.7,630.3 L1158.4,666.3 L1141.2,669.3"/>
<polygon class="n" points="1139.0,590.3 1156.3,587.6 1153.1,623.9 1135.9,626.7" fill="#24a294"/><path class="e" d="M1156.3,587.6 L1139.0,590.3 L1135.9,626.7 L1153.1,623.9"/>
<polygon class="k" points="1152.7,560.6 1142.2,553.3 1139.0,590.3 1149.4,597.9"/>
<polygon class="t" points="1152.7,560.6 1170.3,557.9 1159.7,550.6 1142.2,553.3"/>
<polygon class="n" points="1152.7,560.6 1170.3,557.9 1166.9,595.1 1149.4,597.9" fill="#26ab9c"/><path class="e" d="M1152.7,560.6 L1170.3,557.9 L1166.9,595.1 L1149.4,597.9"/>
<polygon class="n" points="1145.4,515.6 1163.0,513.0 1159.7,550.6 1142.2,553.3" fill="#24a294"/><path class="e" d="M1163.0,513.0 L1145.4,515.6 L1142.2,553.3 L1159.7,550.6"/>
<polygon class="k" points="1158.0,483.0 1148.7,477.2 1145.4,515.6 1154.6,521.6"/>
<polygon class="t" points="1158.0,483.0 1175.9,480.5 1166.5,474.8 1148.7,477.2"/>
<polygon class="n" points="1158.0,483.0 1175.9,480.5 1172.3,519.1 1154.6,521.6" fill="#26ab9c"/><path class="e" d="M1158.0,483.0 L1175.9,480.5 L1172.3,519.1 L1154.6,521.6"/>
<polygon class="n" points="1152.1,438.1 1170.0,435.8 1166.5,474.8 1148.7,477.2" fill="#24a294"/><path class="e" d="M1170.0,435.8 L1152.1,438.1 L1148.7,477.2 L1166.5,474.8"/>
<polygon class="k" points="1160.5,401.1 1155.5,398.4 1152.1,438.1 1157.0,441.0"/>
<polygon class="t" points="1160.5,401.1 1178.6,398.9 1173.5,396.2 1155.5,398.4"/>
<polygon class="n" points="1160.5,401.1 1178.6,398.9 1175.0,438.7 1157.0,441.0" fill="#26ab9c"/><path class="e" d="M1160.5,401.1 L1178.6,398.9 L1175.0,438.7 L1157.0,441.0"/>
<polygon class="n" points="1159.0,357.9 1177.1,355.9 1173.5,396.2 1155.5,398.4" fill="#24a394"/><path class="e" d="M1177.1,355.9 L1159.0,357.9 L1155.5,398.4 L1173.5,396.2"/>
<polygon points="1162.5,316.6 1180.8,314.8 1177.1,355.9 1159.0,357.9" fill="#24a495"/>
<polygon points="1166.1,274.6 1184.6,272.9 1180.8,314.8 1162.5,316.6" fill="#24a495"/>
<polygon points="1169.8,231.8 1188.4,230.3 1184.6,272.9 1166.1,274.6" fill="#24a495"/>
<polygon points="1107.2,769.7 1123.9,766.4 1121.1,799.9 1104.4,803.2" fill="#24a495"/>
<polygon points="1110.0,735.6 1126.9,732.4 1124.0,766.5 1107.2,769.7" fill="#24a495"/>
<polygon class="n" points="1112.8,700.8 1129.8,697.7 1126.9,732.4 1110.0,735.5" fill="#229c8e"/><path class="e" d="M1129.8,697.7 L1112.8,700.8 L1110.0,735.5 L1126.9,732.4"/>
<polygon class="k" points="1120.9,669.8 1115.7,665.5 1112.8,700.8 1118.0,705.3"/>
<polygon class="t" points="1120.9,669.8 1138.2,666.8 1132.8,662.5 1115.7,665.5"/>
<polygon class="n" points="1120.9,669.8 1138.2,666.8 1135.1,702.2 1118.0,705.3" fill="#25a99a"/><path class="e" d="M1120.9,669.8 L1138.2,666.8 L1135.1,702.2 L1118.0,705.3"/>
<polygon class="n" points="1118.6,629.6 1135.9,626.7 1132.8,662.5 1115.7,665.5" fill="#229c8e"/><path class="e" d="M1135.9,626.7 L1118.6,629.6 L1115.7,665.5 L1132.8,662.5"/>
<polygon class="k" points="1131.8,600.8 1121.6,593.1 1118.6,629.6 1128.7,637.6"/>
<polygon class="t" points="1131.8,600.8 1149.4,597.9 1139.0,590.3 1121.6,593.1"/>
<polygon class="n" points="1131.8,600.8 1149.4,597.9 1146.2,634.6 1128.7,637.6" fill="#26ab9c"/><path class="e" d="M1131.8,600.8 L1149.4,597.9 L1146.2,634.6 L1128.7,637.6"/>
<polygon class="n" points="1124.6,555.9 1142.2,553.3 1139.0,590.3 1121.6,593.1" fill="#24a294"/><path class="e" d="M1142.2,553.3 L1124.6,555.9 L1121.6,593.1 L1139.0,590.3"/>
<polygon class="k" points="1138.2,525.2 1127.7,518.1 1124.6,555.9 1135.0,563.3"/>
<polygon class="t" points="1138.2,525.2 1156.1,522.6 1145.4,515.6 1127.7,518.1"/>
<polygon class="n" points="1138.2,525.2 1156.1,522.6 1152.7,560.6 1135.0,563.3" fill="#26ab9c"/><path class="e" d="M1138.2,525.2 L1156.1,522.6 L1152.7,560.6 L1135.0,563.3"/>
<polygon class="n" points="1130.9,479.6 1148.7,477.2 1145.4,515.6 1127.7,518.1" fill="#24a294"/><path class="e" d="M1148.7,477.2 L1130.9,479.6 L1127.7,518.1 L1145.4,515.6"/>
<polygon class="k" points="1141.3,444.7 1134.1,440.4 1130.9,479.6 1138.0,484.2"/>
<polygon class="t" points="1141.3,444.7 1159.4,442.4 1152.1,438.1 1134.1,440.4"/>
<polygon class="n" points="1141.3,444.7 1159.4,442.4 1156.0,481.7 1138.0,484.2" fill="#26ab9c"/><path class="e" d="M1141.3,444.7 L1159.4,442.4 L1156.0,481.7 L1138.0,484.2"/>
<polygon class="n" points="1137.3,400.5 1155.5,398.4 1152.1,438.1 1134.1,440.4" fill="#24a294"/><path class="e" d="M1155.5,398.4 L1137.3,400.5 L1134.1,440.4 L1152.1,438.1"/>
<polygon class="k" points="1142.6,360.9 1140.6,359.9 1137.3,400.5 1139.2,401.6"/>
<polygon class="t" points="1142.6,360.9 1160.9,358.8 1159.0,357.9 1140.6,359.9"/>
<polygon class="n" points="1142.6,360.9 1160.9,358.8 1157.4,399.4 1139.2,401.6" fill="#26ab9c"/><path class="e" d="M1142.6,360.9 L1160.9,358.8 L1157.4,399.4 L1139.2,401.6"/>
<polygon points="1144.0,318.5 1162.5,316.6 1159.0,357.9 1140.6,359.9" fill="#24a495"/>
<polygon points="1147.5,276.3 1166.1,274.6 1162.5,316.6 1144.0,318.5" fill="#24a495"/>
<polygon points="1151.0,233.4 1169.8,231.8 1166.1,274.6 1147.5,276.3" fill="#24a495"/>
<polygon points="1090.3,773.0 1107.2,769.7 1104.4,803.2 1087.7,806.6" fill="#24a495"/>
<polygon points="1092.9,738.7 1110.0,735.5 1107.2,769.7 1090.3,773.0" fill="#229d8f"/>
<polygon class="k" points="1097.8,705.9 1095.6,703.9 1092.9,738.7 1095.1,740.7"/>
<polygon class="t" points="1097.8,705.9 1115.0,702.7 1112.8,700.8 1095.6,703.9"/>
<polygon class="n" points="1097.8,705.9 1115.0,702.7 1112.2,737.5 1095.1,740.7" fill="#24a697"/><path class="e" d="M1097.8,705.9 L1115.0,702.7 L1112.2,737.5 L1095.1,740.7"/>
<polygon class="n" points="1098.4,668.5 1115.7,665.5 1112.8,700.8 1095.6,703.9" fill="#229c8e"/><path class="e" d="M1115.7,665.5 L1098.4,668.5 L1095.6,703.9 L1112.8,700.8"/>
<polygon class="k" points="1109.3,639.0 1101.2,632.5 1098.4,668.5 1106.4,675.3"/>
<polygon class="t" points="1109.3,639.0 1126.9,636.1 1118.6,629.6 1101.2,632.5"/>
<polygon class="n" points="1109.3,639.0 1126.9,636.1 1123.8,672.2 1106.4,675.3" fill="#26ab9c"/><path class="e" d="M1109.3,639.0 L1126.9,636.1 L1123.8,672.2 L1106.4,675.3"/>
<polygon class="n" points="1104.0,595.9 1121.6,593.1 1118.6,629.6 1101.2,632.5" fill="#24a294"/><path class="e" d="M1121.6,593.1 L1104.0,595.9 L1101.2,632.5 L1118.6,629.6"/>
<polygon class="k" points="1117.1,566.0 1106.9,558.6 1104.0,595.9 1114.1,603.6"/>
<polygon class="t" points="1117.1,566.0 1135.0,563.3 1124.6,555.9 1106.9,558.6"/>
<polygon class="n" points="1117.1,566.0 1135.0,563.3 1131.8,600.8 1114.1,603.6" fill="#26ab9c"/><path class="e" d="M1117.1,566.0 L1135.0,563.3 L1131.8,600.8 L1114.1,603.6"/>
<polygon class="n" points="1109.8,520.7 1127.7,518.1 1124.6,555.9 1106.9,558.6" fill="#24a294"/><path class="e" d="M1127.7,518.1 L1109.8,520.7 L1106.9,558.6 L1124.6,555.9"/>
<polygon class="k" points="1121.9,487.9 1112.8,482.0 1109.8,520.7 1118.8,526.8"/>
<polygon class="t" points="1121.9,487.9 1140.0,485.4 1130.9,479.6 1112.8,482.0"/>
<polygon class="n" points="1121.9,487.9 1140.0,485.4 1136.7,524.2 1118.8,526.8" fill="#26ab9c"/><path class="e" d="M1121.9,487.9 L1140.0,485.4 L1136.7,524.2 L1118.8,526.8"/>
<polygon class="n" points="1115.9,442.7 1134.1,440.4 1130.9,479.6 1112.8,482.0" fill="#24a294"/><path class="e" d="M1134.1,440.4 L1115.9,442.7 L1112.8,482.0 L1130.9,479.6"/>
<polygon class="k" points="1123.8,405.4 1119.0,402.7 1115.9,442.7 1120.6,445.6"/>
<polygon class="t" points="1123.8,405.4 1142.2,403.2 1137.3,400.5 1119.0,402.7"/>
<polygon class="n" points="1123.8,405.4 1142.2,403.2 1138.8,443.3 1120.6,445.6" fill="#26ab9c"/><path class="e" d="M1123.8,405.4 L1142.2,403.2 L1138.8,443.3 L1120.6,445.6"/>
<polygon class="n" points="1122.2,361.9 1140.6,359.9 1137.3,400.5 1119.0,402.7" fill="#24a394"/><path class="e" d="M1140.6,359.9 L1122.2,361.9 L1119.0,402.7 L1137.3,400.5"/>
<polygon points="1125.4,320.4 1144.0,318.5 1140.6,359.9 1122.2,361.9" fill="#24a495"/>
<polygon points="1128.7,278.1 1147.5,276.3 1144.0,318.5 1125.4,320.4" fill="#24a495"/>
<polygon points="1132.0,235.0 1151.0,233.4 1147.5,276.3 1128.7,278.1" fill="#24a495"/>
<polygon points="1073.3,776.3 1090.3,773.0 1087.7,806.6 1070.8,810.0" fill="#24a495"/>
<polygon points="1075.8,742.0 1092.9,738.7 1090.3,773.0 1073.3,776.3" fill="#24a495"/>
<polygon class="n" points="1078.3,707.1 1095.6,703.9 1092.9,738.7 1075.8,742.0" fill="#229c8e"/><path class="e" d="M1095.6,703.9 L1078.3,707.1 L1075.8,742.0 L1092.9,738.7"/>
<polygon class="k" points="1086.0,675.8 1081.0,671.6 1078.3,707.1 1083.3,711.5"/>
<polygon class="t" points="1086.0,675.8 1103.5,672.8 1098.4,668.5 1081.0,671.6"/>
<polygon class="n" points="1086.0,675.8 1103.5,672.8 1100.7,708.3 1083.3,711.5" fill="#25a99a"/><path class="e" d="M1086.0,675.8 L1103.5,672.8 L1100.7,708.3 L1083.3,711.5"/>
<polygon class="n" points="1083.6,635.4 1101.2,632.5 1098.4,668.5 1081.0,671.6" fill="#229c8e"/><path class="e" d="M1101.2,632.5 L1083.6,635.4 L1081.0,671.6 L1098.4,668.5"/>
<polygon class="k" points="1096.3,606.5 1086.3,598.7 1083.6,635.4 1093.5,643.5"/>
<polygon class="t" points="1096.3,606.5 1114.1,603.6 1104.0,595.9 1086.3,598.7"/>
<polygon class="n" points="1096.3,606.5 1114.1,603.6 1111.2,640.5 1093.5,643.5" fill="#26ab9c"/><path class="e" d="M1096.3,606.5 L1114.1,603.6 L1111.2,640.5 L1093.5,643.5"/>
<polygon class="n" points="1089.1,561.3 1106.9,558.6 1104.0,595.9 1086.3,598.7" fill="#24a294"/><path class="e" d="M1106.9,558.6 L1089.1,561.3 L1086.3,598.7 L1104.0,595.9"/>
<polygon class="k" points="1102.1,530.4 1091.9,523.2 1089.1,561.3 1099.2,568.8"/>
<polygon class="t" points="1102.1,530.4 1120.2,527.8 1109.8,520.7 1091.9,523.2"/>
<polygon class="n" points="1102.1,530.4 1120.2,527.8 1117.1,566.0 1099.2,568.8" fill="#26ab9c"/><path class="e" d="M1102.1,530.4 L1120.2,527.8 L1117.1,566.0 L1099.2,568.8"/>
<polygon class="n" points="1094.7,484.5 1112.8,482.0 1109.8,520.7 1091.9,523.2" fill="#24a294"/><path class="e" d="M1112.8,482.0 L1094.7,484.5 L1091.9,523.2 L1109.8,520.7"/>
<polygon class="k" points="1104.6,449.4 1097.6,445.0 1094.7,484.5 1101.6,489.1"/>
<polygon class="t" points="1104.6,449.4 1123.0,447.0 1115.9,442.7 1097.6,445.0"/>
<polygon class="n" points="1104.6,449.4 1123.0,447.0 1119.9,486.6 1101.6,489.1" fill="#26ab9c"/><path class="e" d="M1104.6,449.4 L1123.0,447.0 L1119.9,486.6 L1101.6,489.1"/>
<polygon class="n" points="1100.5,404.9 1119.0,402.7 1115.9,442.7 1097.6,445.0" fill="#24a294"/><path class="e" d="M1119.0,402.7 L1100.5,404.9 L1097.6,445.0 L1115.9,442.7"/>
<polygon class="k" points="1105.3,364.9 1103.6,364.0 1100.5,404.9 1102.3,405.9"/>
<polygon class="t" points="1105.3,364.9 1124.0,362.9 1122.2,361.9 1103.6,364.0"/>
<polygon class="n" points="1105.3,364.9 1124.0,362.9 1120.8,403.7 1102.3,405.9" fill="#26ab9c"/><path class="e" d="M1105.3,364.9 L1124.0,362.9 L1120.8,403.7 L1102.3,405.9"/>
<polygon points="1106.6,322.3 1125.4,320.4 1122.2,361.9 1103.6,364.0" fill="#24a495"/>
<polygon points="1109.7,279.8 1128.7,278.1 1125.4,320.4 1106.6,322.3" fill="#24a495"/>
<polygon points="1112.9,236.6 1132.0,235.0 1128.7,278.1 1109.7,279.8" fill="#24a495"/>
<polygon points="1056.1,779.6 1073.3,776.3 1070.8,810.0 1053.8,813.5" fill="#24a495"/>
<polygon points="1058.5,745.2 1075.8,742.0 1073.3,776.3 1056.1,779.6" fill="#229d8f"/>
<polygon class="k" points="1063.0,712.1 1060.9,710.2 1058.5,745.2 1060.5,747.1"/>
<polygon class="t" points="1063.0,712.1 1080.4,708.9 1078.3,707.1 1060.9,710.2"/>
<polygon class="n" points="1063.0,712.1 1080.4,708.9 1077.8,743.9 1060.5,747.1" fill="#24a697"/><path class="e" d="M1063.0,712.1 L1080.4,708.9 L1077.8,743.9 L1060.5,747.1"/>
<polygon class="n" points="1063.4,674.6 1081.0,671.6 1078.3,707.1 1060.9,710.2" fill="#229c8e"/><path class="e" d="M1081.0,671.6 L1063.4,674.6 L1060.9,710.2 L1078.3,707.1"/>
<polygon class="k" points="1073.8,644.9 1065.9,638.4 1063.4,674.6 1071.2,681.4"/>
<polygon class="t" points="1073.8,644.9 1091.6,641.9 1083.6,635.4 1065.9,638.4"/>
<polygon class="n" points="1073.8,644.9 1091.6,641.9 1088.8,678.3 1071.2,681.4" fill="#26ab9c"/><path class="e" d="M1073.8,644.9 L1091.6,641.9 L1088.8,678.3 L1071.2,681.4"/>
<polygon class="n" points="1068.5,601.5 1086.3,598.7 1083.6,635.4 1065.9,638.4" fill="#24a294"/><path class="e" d="M1086.3,598.7 L1068.5,601.5 L1065.9,638.4 L1083.6,635.4"/>
<polygon class="k" points="1081.0,571.5 1071.1,564.0 1068.5,601.5 1078.3,609.4"/>
<polygon class="t" points="1081.0,571.5 1099.2,568.8 1089.1,561.3 1071.1,564.0"/>
<polygon class="n" points="1081.0,571.5 1099.2,568.8 1096.3,606.5 1078.3,609.4" fill="#26ab9c"/><path class="e" d="M1081.0,571.5 L1099.2,568.8 L1096.3,606.5 L1078.3,609.4"/>
<polygon class="n" points="1073.7,525.8 1091.9,523.2 1089.1,561.3 1071.1,564.0" fill="#24a294"/><path class="e" d="M1091.9,523.2 L1073.7,525.8 L1071.1,564.0 L1089.1,561.3"/>
<polygon class="k" points="1085.1,492.9 1076.4,487.0 1073.7,525.8 1082.3,532.0"/>
<polygon class="t" points="1085.1,492.9 1103.5,490.3 1094.7,484.5 1076.4,487.0"/>
<polygon class="n" points="1085.1,492.9 1103.5,490.3 1100.6,529.4 1082.3,532.0" fill="#26ab9c"/><path class="e" d="M1085.1,492.9 L1103.5,490.3 L1100.6,529.4 L1082.3,532.0"/>
<polygon class="n" points="1079.2,447.4 1097.6,445.0 1094.7,484.5 1076.4,487.0" fill="#24a294"/><path class="e" d="M1097.6,445.0 L1079.2,447.4 L1076.4,487.0 L1094.7,484.5"/>
<polygon class="k" points="1086.5,409.8 1081.9,407.1 1079.2,447.4 1083.7,450.3"/>
<polygon class="t" points="1086.5,409.8 1105.2,407.6 1100.5,404.9 1081.9,407.1"/>
<polygon class="n" points="1086.5,409.8 1105.2,407.6 1102.2,447.9 1083.7,450.3" fill="#26ab9c"/><path class="e" d="M1086.5,409.8 L1105.2,407.6 L1102.2,447.9 L1083.7,450.3"/>
<polygon class="n" points="1084.8,366.0 1103.6,364.0 1100.5,404.9 1081.9,407.1" fill="#24a394"/><path class="e" d="M1103.6,364.0 L1084.8,366.0 L1081.9,407.1 L1100.5,404.9"/>
<polygon points="1087.7,324.2 1106.6,322.3 1103.6,364.0 1084.8,366.0" fill="#24a495"/>
<polygon points="1090.6,281.6 1109.7,279.8 1106.6,322.3 1087.7,324.2" fill="#24a495"/>
<polygon points="1093.7,238.2 1112.9,236.6 1109.7,279.8 1090.6,281.6" fill="#24a495"/>
<polygon points="1038.9,783.0 1056.1,779.6 1053.8,813.5 1036.7,817.0" fill="#24a495"/>
<polygon points="1041.1,748.5 1058.5,745.2 1056.1,779.6 1038.9,783.0" fill="#24a495"/>
<polygon class="n" points="1043.4,713.4 1060.9,710.2 1058.5,745.2 1041.1,748.5" fill="#229c8e"/><path class="e" d="M1060.9,710.2 L1043.4,713.4 L1041.1,748.5 L1058.5,745.2"/>
<polygon class="k" points="1050.5,681.9 1045.7,677.7 1043.4,713.4 1048.1,717.8"/>
<polygon class="t" points="1050.5,681.9 1068.3,678.8 1063.4,674.6 1045.7,677.7"/>
<polygon class="n" points="1050.5,681.9 1068.3,678.8 1065.7,714.6 1048.1,717.8" fill="#25a99a"/><path class="e" d="M1050.5,681.9 L1068.3,678.8 L1065.7,714.6 L1048.1,717.8"/>
<polygon class="n" points="1048.1,641.4 1065.9,638.4 1063.4,674.6 1045.7,677.7" fill="#229c8e"/><path class="e" d="M1065.9,638.4 L1048.1,641.4 L1045.7,677.7 L1063.4,674.6"/>
<polygon class="k" points="1060.2,612.3 1050.5,604.4 1048.1,641.4 1057.7,649.5"/>
<polygon class="t" points="1060.2,612.3 1078.3,609.4 1068.5,601.5 1050.5,604.4"/>
<polygon class="n" points="1060.2,612.3 1078.3,609.4 1075.7,646.5 1057.7,649.5" fill="#26ab9c"/><path class="e" d="M1060.2,612.3 L1078.3,609.4 L1075.7,646.5 L1057.7,649.5"/>
<polygon class="n" points="1052.9,566.8 1071.1,564.0 1068.5,601.5 1050.5,604.4" fill="#24a294"/><path class="e" d="M1071.1,564.0 L1052.9,566.8 L1050.5,604.4 L1068.5,601.5"/>
<polygon class="k" points="1065.4,535.7 1055.4,528.5 1052.9,566.8 1062.8,574.3"/>
<polygon class="t" points="1065.4,535.7 1083.8,533.1 1073.7,525.8 1055.4,528.5"/>
<polygon class="n" points="1065.4,535.7 1083.8,533.1 1081.0,571.5 1062.8,574.3" fill="#26ab9c"/><path class="e" d="M1065.4,535.7 L1083.8,533.1 L1081.0,571.5 L1062.8,574.3"/>
<polygon class="n" points="1058.0,489.5 1076.4,487.0 1073.7,525.8 1055.4,528.5" fill="#24a294"/><path class="e" d="M1076.4,487.0 L1058.0,489.5 L1055.4,528.5 L1073.7,525.8"/>
<polygon class="k" points="1067.3,454.1 1060.6,449.7 1058.0,489.5 1064.6,494.1"/>
<polygon class="t" points="1067.3,454.1 1086.0,451.7 1079.2,447.4 1060.6,449.7"/>
<polygon class="n" points="1067.3,454.1 1086.0,451.7 1083.2,491.5 1064.6,494.1" fill="#26ab9c"/><path class="e" d="M1067.3,454.1 L1086.0,451.7 L1083.2,491.5 L1064.6,494.1"/>
<polygon class="n" points="1063.2,409.3 1081.9,407.1 1079.2,447.4 1060.6,449.7" fill="#24a294"/><path class="e" d="M1081.9,407.1 L1063.2,409.3 L1060.6,449.7 L1079.2,447.4"/>
<polygon class="k" points="1067.5,369.0 1065.9,368.1 1063.2,409.3 1064.8,410.3"/>
<polygon class="t" points="1067.5,369.0 1086.4,366.9 1084.8,366.0 1065.9,368.1"/>
<polygon class="n" points="1067.5,369.0 1086.4,366.9 1083.6,408.0 1064.8,410.3" fill="#26ab9c"/><path class="e" d="M1067.5,369.0 L1086.4,366.9 L1083.6,408.0 L1064.8,410.3"/>
<polygon points="1068.6,326.1 1087.7,324.2 1084.8,366.0 1065.9,368.1" fill="#24a495"/>
<polygon points="1071.4,283.4 1090.6,281.6 1087.7,324.2 1068.6,326.1" fill="#24a495"/>
<polygon points="1074.2,239.8 1093.7,238.2 1090.6,281.6 1071.4,283.4" fill="#24a495"/>
<polygon points="1021.5,786.4 1038.9,783.0 1036.7,817.0 1019.4,820.4" fill="#24a495"/>
<polygon points="1023.6,751.8 1041.1,748.5 1038.9,783.0 1021.5,786.4" fill="#229d8f"/>
<polygon class="k" points="1027.6,718.4 1025.7,716.6 1023.6,751.8 1025.4,753.6"/>
<polygon class="t" points="1027.6,718.4 1045.3,715.2 1043.4,713.4 1025.7,716.6"/>
<polygon class="n" points="1027.6,718.4 1045.3,715.2 1043.0,750.3 1025.4,753.6" fill="#24a697"/><path class="e" d="M1027.6,718.4 L1045.3,715.2 L1043.0,750.3 L1025.4,753.6"/>
<polygon class="n" points="1027.9,680.8 1045.7,677.7 1043.4,713.4 1025.7,716.6" fill="#229c8e"/><path class="e" d="M1045.7,677.7 L1027.9,680.8 L1025.7,716.6 L1043.4,713.4"/>
<polygon class="k" points="1037.7,650.9 1030.1,644.3 1027.9,680.8 1035.4,687.6"/>
<polygon class="t" points="1037.7,650.9 1055.7,647.9 1048.1,641.4 1030.1,644.3"/>
<polygon class="n" points="1037.7,650.9 1055.7,647.9 1053.3,684.4 1035.4,687.6" fill="#26ab9c"/><path class="e" d="M1037.7,650.9 L1055.7,647.9 L1053.3,684.4 L1035.4,687.6"/>
<polygon class="n" points="1032.4,607.3 1050.5,604.4 1048.1,641.4 1030.1,644.3" fill="#24a294"/><path class="e" d="M1050.5,604.4 L1032.4,607.3 L1030.1,644.3 L1048.1,641.4"/>
<polygon class="k" points="1044.4,577.2 1034.7,569.5 1032.4,607.3 1042.0,615.2"/>
<polygon class="t" points="1044.4,577.2 1062.8,574.3 1052.9,566.8 1034.7,569.5"/>
<polygon class="n" points="1044.4,577.2 1062.8,574.3 1060.2,612.3 1042.0,615.2" fill="#26ab9c"/><path class="e" d="M1044.4,577.2 L1062.8,574.3 L1060.2,612.3 L1042.0,615.2"/>
<polygon class="n" points="1037.0,531.1 1055.4,528.5 1052.9,566.8 1034.7,569.5" fill="#24a294"/><path class="e" d="M1055.4,528.5 L1037.0,531.1 L1034.7,569.5 L1052.9,566.8"/>
<polygon class="k" points="1047.8,497.9 1039.4,492.0 1037.0,531.1 1045.4,537.3"/>
<polygon class="t" points="1047.8,497.9 1066.5,495.4 1058.0,489.5 1039.4,492.0"/>
<polygon class="n" points="1047.8,497.9 1066.5,495.4 1063.9,534.6 1045.4,537.3" fill="#26ab9c"/><path class="e" d="M1047.8,497.9 L1066.5,495.4 L1063.9,534.6 L1045.4,537.3"/>
<polygon class="n" points="1041.8,452.1 1060.6,449.7 1058.0,489.5 1039.4,492.0" fill="#24a294"/><path class="e" d="M1060.6,449.7 L1041.8,452.1 L1039.4,492.0 L1058.0,489.5"/>
<polygon class="k" points="1048.7,414.3 1044.3,411.5 1041.8,452.1 1046.1,455.0"/>
<polygon class="t" points="1048.7,414.3 1067.6,412.0 1063.2,409.3 1044.3,411.5"/>
<polygon class="n" points="1048.7,414.3 1067.6,412.0 1064.9,452.6 1046.1,455.0" fill="#26ab9c"/><path class="e" d="M1048.7,414.3 L1067.6,412.0 L1064.9,452.6 L1046.1,455.0"/>
<polygon class="n" points="1046.8,370.2 1065.9,368.1 1063.2,409.3 1044.3,411.5" fill="#24a394"/><path class="e" d="M1065.9,368.1 L1046.8,370.2 L1044.3,411.5 L1063.2,409.3"/>
<polygon points="1049.4,328.1 1068.6,326.1 1065.9,368.1 1046.8,370.2" fill="#24a495"/>
<polygon points="1052.0,285.2 1071.4,283.4 1068.6,326.1 1049.4,328.1" fill="#24a495"/>
<polygon points="1054.7,241.4 1074.2,239.8 1071.4,283.4 1052.0,285.2" fill="#24a495"/>
<polygon points="1004.0,789.8 1021.5,786.4 1019.4,820.4 1002.0,824.0" fill="#24a495"/>
<polygon points="1005.9,755.1 1023.6,751.8 1021.5,786.4 1004.0,789.8" fill="#24a495"/>
<polygon class="n" points="1007.9,719.8 1025.7,716.6 1023.6,751.8 1005.9,755.1" fill="#229c8e"/><path class="e" d="M1025.7,716.6 L1007.9,719.8 L1005.9,755.1 L1023.6,751.8"/>
<polygon class="k" points="1014.5,688.1 1010.0,683.9 1007.9,719.8 1012.4,724.2"/>
<polygon class="t" points="1014.5,688.1 1032.5,685.0 1027.9,680.8 1010.0,683.9"/>
<polygon class="n" points="1014.5,688.1 1032.5,685.0 1030.3,720.9 1012.4,724.2" fill="#25a999"/><path class="e" d="M1014.5,688.1 L1032.5,685.0 L1030.3,720.9 L1012.4,724.2"/>
<polygon class="n" points="1012.0,647.4 1030.1,644.3 1027.9,680.8 1010.0,683.9" fill="#229c8e"/><path class="e" d="M1030.1,644.3 L1012.0,647.4 L1010.0,683.9 L1027.9,680.8"/>
<polygon class="k" points="1023.6,618.2 1014.2,610.2 1012.0,647.4 1021.4,655.6"/>
<polygon class="t" points="1023.6,618.2 1042.0,615.2 1032.4,607.3 1014.2,610.2"/>
<polygon class="n" points="1023.6,618.2 1042.0,615.2 1039.6,652.6 1021.4,655.6" fill="#26ab9c"/><path class="e" d="M1023.6,618.2 L1042.0,615.2 L1039.6,652.6 L1021.4,655.6"/>
<polygon class="n" points="1016.3,572.3 1034.7,569.5 1032.4,607.3 1014.2,610.2" fill="#24a294"/><path class="e" d="M1034.7,569.5 L1016.3,572.3 L1014.2,610.2 L1032.4,607.3"/>
<polygon class="k" points="1028.1,541.1 1018.5,533.7 1016.3,572.3 1025.8,580.0"/>
<polygon class="t" points="1028.1,541.1 1046.8,538.4 1037.0,531.1 1018.5,533.7"/>
<polygon class="n" points="1028.1,541.1 1046.8,538.4 1044.4,577.2 1025.8,580.0" fill="#26ab9c"/><path class="e" d="M1028.1,541.1 L1046.8,538.4 L1044.4,577.2 L1025.8,580.0"/>
<polygon class="n" points="1020.7,494.5 1039.4,492.0 1037.0,531.1 1018.5,533.7" fill="#24a294"/><path class="e" d="M1039.4,492.0 L1020.7,494.5 L1018.5,533.7 L1037.0,531.1"/>
<polygon class="k" points="1029.5,458.9 1023.0,454.5 1020.7,494.5 1027.1,499.1"/>
<polygon class="t" points="1029.5,458.9 1048.4,456.5 1041.8,452.1 1023.0,454.5"/>
<polygon class="n" points="1029.5,458.9 1048.4,456.5 1045.9,496.6 1027.1,499.1" fill="#26ab9c"/><path class="e" d="M1029.5,458.9 L1048.4,456.5 L1045.9,496.6 L1027.1,499.1"/>
<polygon class="n" points="1025.3,413.8 1044.3,411.5 1041.8,452.1 1023.0,454.5" fill="#24a294"/><path class="e" d="M1044.3,411.5 L1025.3,413.8 L1023.0,454.5 L1041.8,452.1"/>
<polygon class="k" points="1029.1,373.2 1027.6,372.3 1025.3,413.8 1026.8,414.7"/>
<polygon class="t" points="1029.1,373.2 1048.4,371.1 1046.8,370.2 1027.6,372.3"/>
<polygon class="n" points="1029.1,373.2 1048.4,371.1 1045.8,412.5 1026.8,414.7" fill="#26ab9c"/><path class="e" d="M1029.1,373.2 L1048.4,371.1 L1045.8,412.5 L1026.8,414.7"/>
<polygon points="1030.0,330.1 1049.4,328.1 1046.8,370.2 1027.6,372.3" fill="#24a495"/>
<polygon points="1032.4,287.0 1052.0,285.2 1049.4,328.1 1030.0,330.1" fill="#24a495"/>
<polygon points="1034.9,243.1 1054.7,241.4 1052.0,285.2 1032.4,287.0" fill="#24a495"/>
<polygon points="986.3,793.3 1004.0,789.8 1002.0,824.0 984.6,827.5" fill="#24a495"/>
<polygon points="988.2,758.5 1005.9,755.1 1004.0,789.8 986.3,793.3" fill="#239d8f"/>
<polygon class="k" points="991.7,724.8 990.0,723.1 988.2,758.5 989.9,760.2"/>
<polygon class="t" points="991.7,724.8 1009.7,721.5 1007.9,719.8 990.0,723.1"/>
<polygon class="n" points="991.7,724.8 1009.7,721.5 1007.7,756.9 989.9,760.2" fill="#24a697"/><path class="e" d="M991.7,724.8 L1009.7,721.5 L1007.7,756.9 L989.9,760.2"/>
<polygon class="n" points="991.9,687.1 1010.0,683.9 1007.9,719.8 990.0,723.1" fill="#229c8e"/><path class="e" d="M1010.0,683.9 L991.9,687.1 L990.0,723.1 L1007.9,719.8"/>
<polygon class="k" points="1001.0,656.9 993.8,650.4 991.9,687.1 999.0,693.8"/>
<polygon class="t" points="1001.0,656.9 1019.4,653.9 1012.0,647.4 993.8,650.4"/>
<polygon class="n" points="1001.0,656.9 1019.4,653.9 1017.2,690.6 999.0,693.8" fill="#26ab9c"/><path class="e" d="M1001.0,656.9 L1019.4,653.9 L1017.2,690.6 L999.0,693.8"/>
<polygon class="n" points="995.8,613.1 1014.2,610.2 1012.0,647.4 993.8,650.4" fill="#24a294"/><path class="e" d="M1014.2,610.2 L995.8,613.1 L993.8,650.4 L1012.0,647.4"/>
<polygon class="k" points="1007.2,582.9 997.8,575.1 995.8,613.1 1005.1,621.1"/>
<polygon class="t" points="1007.2,582.9 1025.8,580.0 1016.3,572.3 997.8,575.1"/>
<polygon class="n" points="1007.2,582.9 1025.8,580.0 1023.6,618.2 1005.1,621.1" fill="#26ab9c"/><path class="e" d="M1007.2,582.9 L1025.8,580.0 L1023.6,618.2 L1005.1,621.1"/>
<polygon class="n" points="999.8,536.4 1018.5,533.7 1016.3,572.3 997.8,575.1" fill="#24a294"/><path class="e" d="M1018.5,533.7 L999.8,536.4 L997.8,575.1 L1016.3,572.3"/>
<polygon class="k" points="1010.0,503.1 1001.8,497.0 999.8,536.4 1007.8,542.7"/>
<polygon class="t" points="1010.0,503.1 1029.0,500.5 1020.7,494.5 1001.8,497.0"/>
<polygon class="n" points="1010.0,503.1 1029.0,500.5 1026.7,540.0 1007.8,542.7" fill="#26ab9c"/><path class="e" d="M1010.0,503.1 L1029.0,500.5 L1026.7,540.0 L1007.8,542.7"/>
<polygon class="n" points="1003.9,456.9 1023.0,454.5 1020.7,494.5 1001.8,497.0" fill="#24a294"/><path class="e" d="M1023.0,454.5 L1003.9,456.9 L1001.8,497.0 L1020.7,494.5"/>
<polygon class="k" points="1010.3,418.8 1006.1,416.1 1003.9,456.9 1008.1,459.8"/>
<polygon class="t" points="1010.3,418.8 1029.5,416.5 1025.3,413.8 1006.1,416.1"/>
<polygon class="n" points="1010.3,418.8 1029.5,416.5 1027.2,457.4 1008.1,459.8" fill="#26ab9c"/><path class="e" d="M1010.3,418.8 L1029.5,416.5 L1027.2,457.4 L1008.1,459.8"/>
<polygon class="n" points="1008.2,374.5 1027.6,372.3 1025.3,413.8 1006.1,416.1" fill="#24a394"/><path class="e" d="M1027.6,372.3 L1008.2,374.5 L1006.1,416.1 L1025.3,413.8"/>
<polygon points="1010.5,332.0 1030.0,330.1 1027.6,372.3 1008.2,374.5" fill="#24a495"/>
<polygon points="1012.7,288.8 1032.4,287.0 1030.0,330.1 1010.5,332.0" fill="#24a495"/>
<polygon points="1015.0,244.7 1034.9,243.1 1032.4,287.0 1012.7,288.8" fill="#24a495"/>
<polygon points="968.6,796.8 986.3,793.3 984.6,827.5 966.9,831.1" fill="#24a495"/>
<polygon points="970.3,761.9 988.2,758.5 986.3,793.3 968.6,796.8" fill="#24a495"/>
<polygon class="n" points="972.0,726.4 990.0,723.1 988.2,758.5 970.3,761.9" fill="#229c8e"/><path class="e" d="M990.0,723.1 L972.0,726.4 L970.3,761.9 L988.2,758.5"/>
<polygon class="k" points="978.0,694.4 973.7,690.2 972.0,726.4 976.2,730.7"/>
<polygon class="t" points="978.0,694.4 996.3,691.2 991.9,687.1 973.7,690.2"/>
<polygon class="n" points="978.0,694.4 996.3,691.2 994.3,727.4 976.2,730.7" fill="#25a999"/><path class="e" d="M978.0,694.4 L996.3,691.2 L994.3,727.4 L976.2,730.7"/>
<polygon class="n" points="975.5,653.4 993.8,650.4 991.9,687.1 973.7,690.2" fill="#229c8e"/><path class="e" d="M993.8,650.4 L975.5,653.4 L973.7,690.2 L991.9,687.1"/>
<polygon class="k" points="986.4,624.1 977.2,616.0 975.5,653.4 984.5,661.9"/>
<polygon class="t" points="986.4,624.1 1005.1,621.1 995.8,613.1 977.2,616.0"/>
<polygon class="n" points="986.4,624.1 1005.1,621.1 1003.0,658.7 984.5,661.9" fill="#26ab9c"/><path class="e" d="M986.4,624.1 L1005.1,621.1 L1003.0,658.7 L984.5,661.9"/>
<polygon class="n" points="979.1,577.9 997.8,575.1 995.8,613.1 977.2,616.0" fill="#24a294"/><path class="e" d="M997.8,575.1 L979.1,577.9 L977.2,616.0 L995.8,613.1"/>
<polygon class="k" points="990.3,546.6 980.9,539.1 979.1,577.9 988.3,585.7"/>
<polygon class="t" points="990.3,546.6 1009.3,543.9 999.8,536.4 980.9,539.1"/>
<polygon class="n" points="990.3,546.6 1009.3,543.9 1007.2,582.9 988.3,585.7" fill="#26ab9c"/><path class="e" d="M990.3,546.6 L1009.3,543.9 L1007.2,582.9 L988.3,585.7"/>
<polygon class="n" points="982.8,499.6 1001.8,497.0 999.8,536.4 980.9,539.1" fill="#24a294"/><path class="e" d="M1001.8,497.0 L982.8,499.6 L980.9,539.1 L999.8,536.4"/>
<polygon class="k" points="991.1,463.9 984.8,459.4 982.8,499.6 989.1,504.3"/>
<polygon class="t" points="991.1,463.9 1010.3,461.4 1003.9,456.9 984.8,459.4"/>
<polygon class="n" points="991.1,463.9 1010.3,461.4 1008.2,501.7 989.1,504.3" fill="#26ab9c"/><path class="e" d="M991.1,463.9 L1010.3,461.4 L1008.2,501.7 L989.1,504.3"/>
<polygon class="n" points="986.7,418.4 1006.1,416.1 1003.9,456.9 984.8,459.4" fill="#24a294"/><path class="e" d="M1006.1,416.1 L986.7,418.4 L984.8,459.4 L1003.9,456.9"/>
<polygon class="k" points="990.2,377.5 988.7,376.6 986.7,418.4 988.2,419.3"/>
<polygon class="t" points="990.2,377.5 1009.7,375.4 1008.2,374.5 988.7,376.6"/>
<polygon class="n" points="990.2,377.5 1009.7,375.4 1007.5,417.0 988.2,419.3" fill="#26ab9c"/><path class="e" d="M990.2,377.5 L1009.7,375.4 L1007.5,417.0 L988.2,419.3"/>
<polygon points="990.8,334.0 1010.5,332.0 1008.2,374.5 988.7,376.6" fill="#24a495"/>
<polygon points="992.8,290.7 1012.7,288.8 1010.5,332.0 990.8,334.0" fill="#24a495"/>
<polygon points="995.0,246.4 1015.0,244.7 1012.7,288.8 992.8,290.7" fill="#24a495"/>
<polygon points="950.7,800.3 968.6,796.8 966.9,831.1 949.2,834.7" fill="#24a495"/>
<polygon points="952.2,765.3 970.3,761.9 968.6,796.8 950.7,800.3" fill="#239d8f"/>
<polygon class="k" points="955.3,731.3 953.8,729.6 952.2,765.3 953.8,766.9"/>
<polygon class="t" points="955.3,731.3 973.5,727.9 972.0,726.4 953.8,729.6"/>
<polygon class="n" points="955.3,731.3 973.5,727.9 971.8,763.5 953.8,766.9" fill="#24a697"/><path class="e" d="M955.3,731.3 L973.5,727.9 L971.8,763.5 L953.8,766.9"/>
<polygon class="n" points="955.3,693.4 973.7,690.2 972.0,726.4 953.8,729.6" fill="#229c8e"/><path class="e" d="M973.7,690.2 L955.3,693.4 L953.8,729.6 L972.0,726.4"/>
<polygon class="k" points="963.8,663.1 957.0,656.5 955.3,693.4 962.2,700.2"/>
<polygon class="t" points="963.8,663.1 982.5,660.0 975.5,653.4 957.0,656.5"/>
<polygon class="n" points="963.8,663.1 982.5,660.0 980.6,696.9 962.2,700.2" fill="#26ab9c"/><path class="e" d="M963.8,663.1 L982.5,660.0 L980.6,696.9 L962.2,700.2"/>
<polygon class="n" points="958.6,619.0 977.2,616.0 975.5,653.4 957.0,656.5" fill="#24a294"/><path class="e" d="M977.2,616.0 L958.6,619.0 L957.0,656.5 L975.5,653.4"/>
<polygon class="k" points="969.3,588.6 960.3,580.8 958.6,619.0 967.6,627.2"/>
<polygon class="t" points="969.3,588.6 988.3,585.7 979.1,577.9 960.3,580.8"/>
<polygon class="n" points="969.3,588.6 988.3,585.7 986.4,624.1 967.6,627.2" fill="#26ab9c"/><path class="e" d="M969.3,588.6 L988.3,585.7 L986.4,624.1 L967.6,627.2"/>
<polygon class="n" points="961.9,541.8 980.9,539.1 979.1,577.9 960.3,580.8" fill="#24a294"/><path class="e" d="M980.9,539.1 L961.9,541.8 L960.3,580.8 L979.1,577.9"/>
<polygon class="k" points="971.6,508.3 963.7,502.2 961.9,541.8 969.8,548.3"/>
<polygon class="t" points="971.6,508.3 990.9,505.7 982.8,499.6 963.7,502.2"/>
<polygon class="n" points="971.6,508.3 990.9,505.7 988.9,545.5 969.8,548.3" fill="#26ab9c"/><path class="e" d="M971.6,508.3 L990.9,505.7 L988.9,545.5 L969.8,548.3"/>
<polygon class="n" points="965.4,461.8 984.8,459.4 982.8,499.6 963.7,502.2" fill="#24a294"/><path class="e" d="M984.8,459.4 L965.4,461.8 L963.7,502.2 L982.8,499.6"/>
<polygon class="k" points="971.3,423.5 967.2,420.7 965.4,461.8 969.5,464.8"/>
<polygon class="t" points="971.3,423.5 990.9,421.1 986.7,418.4 967.2,420.7"/>
<polygon class="n" points="971.3,423.5 990.9,421.1 988.8,462.3 969.5,464.8" fill="#26ab9c"/><path class="e" d="M971.3,423.5 L990.9,421.1 L988.8,462.3 L969.5,464.8"/>
<polygon class="n" points="969.1,378.8 988.7,376.6 986.7,418.4 967.2,420.7" fill="#24a394"/><path class="e" d="M988.7,376.6 L969.1,378.8 L967.2,420.7 L986.7,418.4"/>
<polygon points="970.9,336.1 990.8,334.0 988.7,376.6 969.1,378.8" fill="#24a495"/>
<polygon points="972.8,292.5 992.8,290.7 990.8,334.0 970.9,336.1" fill="#24a495"/>
<polygon points="974.7,248.1 995.0,246.4 992.8,290.7 972.8,292.5" fill="#24a495"/>
<polygon points="932.7,803.8 950.7,800.3 949.2,834.7 931.3,838.3" fill="#24a495"/>
<polygon points="934.0,768.7 952.2,765.3 950.7,800.3 932.7,803.8" fill="#24a495"/>
<polygon class="n" points="935.4,733.0 953.8,729.6 952.2,765.3 934.0,768.7" fill="#229c8e"/><path class="e" d="M953.8,729.6 L935.4,733.0 L934.0,768.7 L952.2,765.3"/>
<polygon class="k" points="940.9,700.8 936.9,696.6 935.4,733.0 939.5,737.2"/>
<polygon class="t" points="940.9,700.8 959.5,697.5 955.3,693.4 936.9,696.6"/>
<polygon class="n" points="940.9,700.8 959.5,697.5 957.9,733.9 939.5,737.2" fill="#25a999"/><path class="e" d="M940.9,700.8 L959.5,697.5 L957.9,733.9 L939.5,737.2"/>
<polygon class="n" points="938.3,659.6 957.0,656.5 955.3,693.4 936.9,696.6" fill="#229c8e"/><path class="e" d="M957.0,656.5 L938.3,659.6 L936.9,696.6 L955.3,693.4"/>
<polygon class="k" points="948.6,630.2 939.8,622.0 938.3,659.6 947.1,668.2"/>
<polygon class="t" points="948.6,630.2 967.6,627.2 958.6,619.0 939.8,622.0"/>
<polygon class="n" points="948.6,630.2 967.6,627.2 965.9,665.0 947.1,668.2" fill="#26ab9c"/><path class="e" d="M948.6,630.2 L967.6,627.2 L965.9,665.0 L947.1,668.2"/>
<polygon class="n" points="941.3,583.6 960.3,580.8 958.6,619.0 939.8,622.0" fill="#24a294"/><path class="e" d="M960.3,580.8 L941.3,583.6 L939.8,622.0 L958.6,619.0"/>
<polygon class="k" points="951.9,552.2 942.8,544.6 941.3,583.6 950.2,591.6"/>
<polygon class="t" points="951.9,552.2 971.1,549.4 961.9,541.8 942.8,544.6"/>
<polygon class="n" points="951.9,552.2 971.1,549.4 969.3,588.6 950.2,591.6" fill="#26ab9c"/><path class="e" d="M951.9,552.2 L971.1,549.4 L969.3,588.6 L950.2,591.6"/>
<polygon class="n" points="944.4,504.8 963.7,502.2 961.9,541.8 942.8,544.6" fill="#24a294"/><path class="e" d="M963.7,502.2 L944.4,504.8 L942.8,544.6 L961.9,541.8"/>
<polygon class="k" points="952.0,468.9 946.0,464.3 944.4,504.8 950.4,509.6"/>
<polygon class="t" points="952.0,468.9 971.6,466.3 965.4,461.8 946.0,464.3"/>
<polygon class="n" points="952.0,468.9 971.6,466.3 969.8,507.0 950.4,509.6" fill="#26ab9c"/><path class="e" d="M952.0,468.9 L971.6,466.3 L969.8,507.0 L950.4,509.6"/>
<polygon class="n" points="947.6,423.0 967.2,420.7 965.4,461.8 946.0,464.3" fill="#24a294"/><path class="e" d="M967.2,420.7 L947.6,423.0 L946.0,464.3 L965.4,461.8"/>
<polygon class="k" points="950.6,381.9 949.2,381.0 947.6,423.0 949.0,424.0"/>
<polygon class="t" points="950.6,381.9 970.5,379.7 969.1,378.8 949.2,381.0"/>
<polygon class="n" points="950.6,381.9 970.5,379.7 968.6,421.7 949.0,424.0" fill="#26ab9c"/><path class="e" d="M950.6,381.9 L970.5,379.7 L968.6,421.7 L949.0,424.0"/>
<polygon points="950.9,338.1 970.9,336.1 969.1,378.8 949.2,381.0" fill="#24a495"/>
<polygon points="952.6,294.4 972.8,292.5 970.9,336.1 950.9,338.1" fill="#24a495"/>
<polygon points="954.3,249.8 974.7,248.1 972.8,292.5 952.6,294.4" fill="#24a495"/>
<polygon points="914.5,807.3 932.7,803.8 931.3,838.3 913.3,841.9" fill="#24a495"/>
<polygon points="915.7,772.1 934.0,768.7 932.7,803.8 914.5,807.3" fill="#239d8f"/>
<polygon class="k" points="918.4,737.8 917.0,736.3 915.7,772.1 917.1,773.7"/>
<polygon class="t" points="918.4,737.8 936.9,734.5 935.4,733.0 917.0,736.3"/>
<polygon class="n" points="918.4,737.8 936.9,734.5 935.5,770.2 917.1,773.7" fill="#24a696"/><path class="e" d="M918.4,737.8 L936.9,734.5 L935.5,770.2 L917.1,773.7"/>
<polygon class="n" points="918.2,699.9 936.9,696.6 935.4,733.0 917.0,736.3" fill="#229c8e"/><path class="e" d="M936.9,696.6 L918.2,699.9 L917.0,736.3 L935.4,733.0"/>
<polygon class="k" points="926.1,669.3 919.5,662.8 918.2,699.9 924.7,706.6"/>
<polygon class="t" points="926.1,669.3 945.0,666.2 938.3,659.6 919.5,662.8"/>
<polygon class="n" points="926.1,669.3 945.0,666.2 943.5,703.4 924.7,706.6" fill="#26ab9c"/><path class="e" d="M926.1,669.3 L945.0,666.2 L943.5,703.4 L924.7,706.6"/>
<polygon class="n" points="920.8,625.0 939.8,622.0 938.3,659.6 919.5,662.8" fill="#24a294"/><path class="e" d="M939.8,622.0 L920.8,625.0 L919.5,662.8 L938.3,659.6"/>
<polygon class="k" points="931.0,594.5 922.2,586.5 920.8,625.0 929.5,633.3"/>
<polygon class="t" points="931.0,594.5 950.2,591.6 941.3,583.6 922.2,586.5"/>
<polygon class="n" points="931.0,594.5 950.2,591.6 948.6,630.2 929.5,633.3" fill="#26ab9c"/><path class="e" d="M931.0,594.5 L950.2,591.6 L948.6,630.2 L929.5,633.3"/>
<polygon class="n" points="923.5,547.3 942.8,544.6 941.3,583.6 922.2,586.5" fill="#24a294"/><path class="e" d="M942.8,544.6 L923.5,547.3 L922.2,586.5 L941.3,583.6"/>
<polygon class="k" points="932.5,513.7 924.9,507.4 923.5,547.3 931.1,553.9"/>
<polygon class="t" points="932.5,513.7 952.1,511.0 944.4,504.8 924.9,507.4"/>
<polygon class="n" points="932.5,513.7 952.1,511.0 950.5,551.0 931.1,553.9" fill="#26ab9c"/><path class="e" d="M932.5,513.7 L952.1,511.0 L950.5,551.0 L931.1,553.9"/>
<polygon class="n" points="926.3,466.8 946.0,464.3 944.4,504.8 924.9,507.4" fill="#24a294"/><path class="e" d="M946.0,464.3 L926.3,466.8 L924.9,507.4 L944.4,504.8"/>
<polygon class="k" points="931.7,428.2 927.8,425.4 926.3,466.8 930.2,469.8"/>
<polygon class="t" points="931.7,428.2 951.6,425.8 947.6,423.0 927.8,425.4"/>
<polygon class="n" points="931.7,428.2 951.6,425.8 949.9,467.3 930.2,469.8" fill="#26ab9c"/><path class="e" d="M931.7,428.2 L951.6,425.8 L949.9,467.3 L930.2,469.8"/>
<polygon class="n" points="929.2,383.2 949.2,381.0 947.6,423.0 927.8,425.4" fill="#24a394"/><path class="e" d="M949.2,381.0 L929.2,383.2 L927.8,425.4 L947.6,423.0"/>
<polygon points="930.7,340.1 950.9,338.1 949.2,381.0 929.2,383.2" fill="#24a495"/>
<polygon points="932.2,296.3 952.6,294.4 950.9,338.1 930.7,340.1" fill="#24a495"/>
<polygon points="933.8,251.5 954.3,249.8 952.6,294.4 932.2,296.3" fill="#24a495"/>
<polygon points="896.2,810.9 914.5,807.3 913.3,841.9 895.2,845.6" fill="#24a495"/>
<polygon points="897.3,775.6 915.7,772.1 914.5,807.3 896.2,810.9" fill="#24a495"/>
<polygon class="n" points="898.4,739.7 917.0,736.3 915.7,772.1 897.3,775.6" fill="#229c8e"/><path class="e" d="M917.0,736.3 L898.4,739.7 L897.3,775.6 L915.7,772.1"/>
<polygon class="k" points="903.3,707.2 899.5,703.1 898.4,739.7 902.2,743.9"/>
<polygon class="t" points="903.3,707.2 922.1,703.9 918.2,699.9 899.5,703.1"/>
<polygon class="n" points="903.3,707.2 922.1,703.9 920.8,740.5 902.2,743.9" fill="#25a999"/><path class="e" d="M903.3,707.2 L922.1,703.9 L920.8,740.5 L902.2,743.9"/>
<polygon class="n" points="900.6,665.9 919.5,662.8 918.2,699.9 899.5,703.1" fill="#229c8e"/><path class="e" d="M919.5,662.8 L900.6,665.9 L899.5,703.1 L918.2,699.9"/>
<polygon class="k" points="910.3,636.4 901.7,628.0 900.6,665.9 909.0,674.6"/>
<polygon class="t" points="910.3,636.4 929.5,633.3 920.8,625.0 901.7,628.0"/>
<polygon class="n" points="910.3,636.4 929.5,633.3 928.1,671.4 909.0,674.6" fill="#26ab9c"/><path class="e" d="M910.3,636.4 L929.5,633.3 L928.1,671.4 L909.0,674.6"/>
<polygon class="n" points="902.9,589.4 922.2,586.5 920.8,625.0 901.7,628.0" fill="#24a294"/><path class="e" d="M922.2,586.5 L902.9,589.4 L901.7,628.0 L920.8,625.0"/>
<polygon class="k" points="912.8,557.9 904.1,550.1 902.9,589.4 911.5,597.5"/>
<polygon class="t" points="912.8,557.9 932.4,555.0 923.5,547.3 904.1,550.1"/>
<polygon class="n" points="912.8,557.9 932.4,555.0 931.0,594.5 911.5,597.5" fill="#26ab9c"/><path class="e" d="M912.8,557.9 L932.4,555.0 L931.0,594.5 L911.5,597.5"/>
<polygon class="n" points="905.3,510.1 924.9,507.4 923.5,547.3 904.1,550.1" fill="#24a294"/><path class="e" d="M924.9,507.4 L905.3,510.1 L904.1,550.1 L923.5,547.3"/>
<polygon class="k" points="912.4,473.9 906.5,469.3 905.3,510.1 911.1,515.0"/>
<polygon class="t" points="912.4,473.9 932.3,471.4 926.3,466.8 906.5,469.3"/>
<polygon class="n" points="912.4,473.9 932.3,471.4 930.8,512.3 911.1,515.0" fill="#26ab9c"/><path class="e" d="M912.4,473.9 L932.3,471.4 L930.8,512.3 L911.1,515.0"/>
<polygon class="n" points="907.8,427.7 927.8,425.4 926.3,466.8 906.5,469.3" fill="#24a294"/><path class="e" d="M927.8,425.4 L907.8,427.7 L906.5,469.3 L926.3,466.8"/>
<polygon class="k" points="910.4,386.3 909.1,385.4 907.8,427.7 909.1,428.7"/>
<polygon class="t" points="910.4,386.3 930.6,384.1 929.2,383.2 909.1,385.4"/>
<polygon class="n" points="910.4,386.3 930.6,384.1 929.1,426.4 909.1,428.7" fill="#26ab9c"/><path class="e" d="M910.4,386.3 L930.6,384.1 L929.1,426.4 L909.1,428.7"/>
<polygon points="910.4,342.2 930.7,340.1 929.2,383.2 909.1,385.4" fill="#24a495"/>
<polygon points="911.7,298.2 932.2,296.3 930.7,340.1 910.4,342.2" fill="#24a495"/>
<polygon points="913.0,253.3 933.8,251.5 932.2,296.3 911.7,298.2" fill="#24a495"/>
<polygon points="877.8,814.5 896.2,810.9 895.2,845.6 876.9,849.3" fill="#24a495"/>
<polygon points="878.7,779.1 897.3,775.6 896.2,810.9 877.8,814.5" fill="#239d8f"/>
<polygon class="k" points="880.9,744.5 879.6,743.1 878.7,779.1 879.9,780.6"/>
<polygon class="t" points="880.9,744.5 899.6,741.1 898.4,739.7 879.6,743.1"/>
<polygon class="n" points="880.9,744.5 899.6,741.1 898.5,777.1 879.9,780.6" fill="#24a696"/><path class="e" d="M880.9,744.5 L899.6,741.1 L898.5,777.1 L879.9,780.6"/>
<polygon class="n" points="880.6,706.4 899.5,703.1 898.4,739.7 879.6,743.1" fill="#229c8e"/><path class="e" d="M899.5,703.1 L880.6,706.4 L879.6,743.1 L898.4,739.7"/>
<polygon class="k" points="887.8,675.7 881.5,669.1 880.6,706.4 886.7,713.2"/>
<polygon class="t" points="887.8,675.7 907.0,672.4 900.6,665.9 881.5,669.1"/>
<polygon class="n" points="887.8,675.7 907.0,672.4 905.8,709.9 886.7,713.2" fill="#26ab9c"/><path class="e" d="M887.8,675.7 L907.0,672.4 L905.8,709.9 L886.7,713.2"/>
<polygon class="n" points="882.5,631.1 901.7,628.0 900.6,665.9 881.5,669.1" fill="#24a294"/><path class="e" d="M901.7,628.0 L882.5,631.1 L881.5,669.1 L900.6,665.9"/>
<polygon class="k" points="891.9,600.5 883.5,592.4 882.5,631.1 890.9,639.5"/>
<polygon class="t" points="891.9,600.5 911.5,597.5 902.9,589.4 883.5,592.4"/>
<polygon class="n" points="891.9,600.5 911.5,597.5 910.3,636.4 890.9,639.5" fill="#26ab9c"/><path class="e" d="M891.9,600.5 L911.5,597.5 L910.3,636.4 L890.9,639.5"/>
<polygon class="n" points="884.5,552.9 904.1,550.1 902.9,589.4 883.5,592.4" fill="#24a294"/><path class="e" d="M904.1,550.1 L884.5,552.9 L883.5,592.4 L902.9,589.4"/>
<polygon class="k" points="892.9,519.1 885.5,512.8 884.5,552.9 891.8,559.5"/>
<polygon class="t" points="892.9,519.1 912.8,516.4 905.3,510.1 885.5,512.8"/>
<polygon class="n" points="892.9,519.1 912.8,516.4 911.5,556.7 891.8,559.5" fill="#26ab9c"/><path class="e" d="M892.9,519.1 L912.8,516.4 L911.5,556.7 L891.8,559.5"/>
<polygon class="n" points="886.6,471.8 906.5,469.3 905.3,510.1 885.5,512.8" fill="#24a294"/><path class="e" d="M906.5,469.3 L886.6,471.8 L885.5,512.8 L905.3,510.1"/>
<polygon class="k" points="891.4,433.0 887.6,430.1 886.6,471.8 890.3,474.9"/>
<polygon class="t" points="891.4,433.0 911.6,430.6 907.8,427.7 887.6,430.1"/>
<polygon class="n" points="891.4,433.0 911.6,430.6 910.3,472.3 890.3,474.9" fill="#26ab9c"/><path class="e" d="M891.4,433.0 L911.6,430.6 L910.3,472.3 L890.3,474.9"/>
<polygon class="n" points="888.7,387.6 909.1,385.4 907.8,427.7 887.6,430.1" fill="#24a394"/><path class="e" d="M909.1,385.4 L888.7,387.6 L887.6,430.1 L907.8,427.7"/>
<polygon points="889.8,344.3 910.4,342.2 909.1,385.4 888.7,387.6" fill="#24a495"/>
<polygon points="891.0,300.1 911.7,298.2 910.4,342.2 889.8,344.3" fill="#24a495"/>
<polygon points="892.1,255.0 913.0,253.3 911.7,298.2 891.0,300.1" fill="#24a495"/>
<polygon points="859.2,818.1 877.8,814.5 876.9,849.3 858.5,853.0" fill="#24a495"/>
<polygon points="860.0,782.6 878.7,779.1 877.8,814.5 859.2,818.1" fill="#24a495"/>
<polygon class="n" points="860.7,746.5 879.6,743.1 878.7,779.1 860.0,782.6" fill="#229c8e"/><path class="e" d="M879.6,743.1 L860.7,746.5 L860.0,782.6 L878.7,779.1"/>
<polygon class="k" points="865.1,713.8 861.5,709.7 860.7,746.5 864.3,750.7"/>
<polygon class="t" points="865.1,713.8 884.2,710.4 880.6,706.4 861.5,709.7"/>
<polygon class="n" points="865.1,713.8 884.2,710.4 883.2,747.2 864.3,750.7" fill="#25a899"/><path class="e" d="M865.1,713.8 L884.2,710.4 L883.2,747.2 L864.3,750.7"/>
<polygon class="n" points="862.3,672.3 881.5,669.1 880.6,706.4 861.5,709.7" fill="#229c8e"/><path class="e" d="M881.5,669.1 L862.3,672.3 L861.5,709.7 L880.6,706.4"/>
<polygon class="k" points="871.3,642.6 863.1,634.2 862.3,672.3 870.4,681.1"/>
<polygon class="t" points="871.3,642.6 890.9,639.5 882.5,631.1 863.1,634.2"/>
<polygon class="n" points="871.3,642.6 890.9,639.5 889.8,677.8 870.4,681.1" fill="#26ab9c"/><path class="e" d="M871.3,642.6 L890.9,639.5 L889.8,677.8 L870.4,681.1"/>
<polygon class="n" points="863.9,595.3 883.5,592.4 882.5,631.1 863.1,634.2" fill="#24a294"/><path class="e" d="M883.5,592.4 L863.9,595.3 L863.1,634.2 L882.5,631.1"/>
<polygon class="k" points="873.1,563.6 864.7,555.8 863.9,595.3 872.2,603.5"/>
<polygon class="t" points="873.1,563.6 893.0,560.7 884.5,552.9 864.7,555.8"/>
<polygon class="n" points="873.1,563.6 893.0,560.7 891.9,600.5 872.2,603.5" fill="#26ab9c"/><path class="e" d="M873.1,563.6 L893.0,560.7 L891.9,600.5 L872.2,603.5"/>
<polygon class="n" points="865.6,515.5 885.5,512.8 884.5,552.9 864.7,555.8" fill="#24a294"/><path class="e" d="M885.5,512.8 L865.6,515.5 L864.7,555.8 L884.5,552.9"/>
<polygon class="k" points="872.1,479.1 866.5,474.4 865.6,515.5 871.2,520.4"/>
<polygon class="t" points="872.1,479.1 892.3,476.5 886.6,471.8 866.5,474.4"/>
<polygon class="n" points="872.1,479.1 892.3,476.5 891.2,517.7 871.2,520.4" fill="#26ab9c"/><path class="e" d="M872.1,479.1 L892.3,476.5 L891.2,517.7 L871.2,520.4"/>
<polygon class="n" points="867.3,432.5 887.6,430.1 886.6,471.8 866.5,474.4" fill="#24a294"/><path class="e" d="M887.6,430.1 L867.3,432.5 L866.5,474.4 L886.6,471.8"/>
<polygon class="k" points="869.5,390.8 868.2,389.9 867.3,432.5 868.6,433.6"/>
<polygon class="t" points="869.5,390.8 890.1,388.6 888.7,387.6 868.2,389.9"/>
<polygon class="n" points="869.5,390.8 890.1,388.6 889.0,431.1 868.6,433.6" fill="#26ab9c"/><path class="e" d="M869.5,390.8 L890.1,388.6 L889.0,431.1 L868.6,433.6"/>
<polygon points="869.1,346.4 889.8,344.3 888.7,387.6 868.2,389.9" fill="#24a495"/>
<polygon points="870.1,302.0 891.0,300.1 889.8,344.3 869.1,346.4" fill="#24a495"/>
<polygon points="871.0,256.8 892.1,255.0 891.0,300.1 870.1,302.0" fill="#24a495"/>
<polygon points="840.5,821.8 859.2,818.1 858.5,853.0 840.0,856.8" fill="#24a495"/>
<polygon points="841.1,786.2 860.0,782.6 859.2,818.1 840.5,821.8" fill="#239d8f"/>
<polygon class="k" points="842.8,751.3 841.7,750.0 841.1,786.2 842.2,787.6"/>
<polygon class="t" points="842.8,751.3 861.9,747.8 860.7,746.5 841.7,750.0"/>
<polygon class="n" points="842.8,751.3 861.9,747.8 861.1,784.0 842.2,787.6" fill="#24a596"/><path class="e" d="M842.8,751.3 L861.9,747.8 L861.1,784.0 L842.2,787.6"/>
<polygon class="n" points="842.3,713.1 861.5,709.7 860.7,746.5 841.7,750.0" fill="#229c8e"/><path class="e" d="M861.5,709.7 L842.3,713.1 L841.7,750.0 L860.7,746.5"/>
<polygon class="k" points="848.7,682.0 842.9,675.5 842.3,713.1 848.0,719.7"/>
<polygon class="t" points="848.7,682.0 868.2,678.7 862.3,672.3 842.9,675.5"/>
<polygon class="n" points="848.7,682.0 868.2,678.7 867.4,716.3 848.0,719.7" fill="#26ab9c"/><path class="e" d="M848.7,682.0 L868.2,678.7 L867.4,716.3 L848.0,719.7"/>
<polygon class="n" points="843.6,637.3 863.1,634.2 862.3,672.3 842.9,675.5" fill="#24a294"/><path class="e" d="M863.1,634.2 L843.6,637.3 L842.9,675.5 L862.3,672.3"/>
<polygon class="k" points="852.3,606.5 844.2,598.3 843.6,637.3 851.6,645.8"/>
<polygon class="t" points="852.3,606.5 872.2,603.5 863.9,595.3 844.2,598.3"/>
<polygon class="n" points="852.3,606.5 872.2,603.5 871.3,642.6 851.6,645.8" fill="#26ab9c"/><path class="e" d="M852.3,606.5 L872.2,603.5 L871.3,642.6 L851.6,645.8"/>
<polygon class="n" points="844.8,558.6 864.7,555.8 863.9,595.3 844.2,598.3" fill="#24a294"/><path class="e" d="M864.7,555.8 L844.8,558.6 L844.2,598.3 L863.9,595.3"/>
<polygon class="k" points="852.5,524.6 845.5,518.2 844.8,558.6 851.8,565.3"/>
<polygon class="t" points="852.5,524.6 872.8,521.8 865.6,515.5 845.5,518.2"/>
<polygon class="n" points="852.5,524.6 872.8,521.8 871.9,562.4 851.8,565.3" fill="#26ab9c"/><path class="e" d="M852.5,524.6 L872.8,521.8 L871.9,562.4 L851.8,565.3"/>
<polygon class="n" points="846.2,477.0 866.5,474.4 865.6,515.5 845.5,518.2" fill="#24a294"/><path class="e" d="M866.5,474.4 L846.2,477.0 L845.5,518.2 L865.6,515.5"/>
<polygon class="k" points="850.5,437.9 846.9,435.0 846.2,477.0 849.8,480.1"/>
<polygon class="t" points="850.5,437.9 871.0,435.4 867.3,432.5 846.9,435.0"/>
<polygon class="n" points="850.5,437.9 871.0,435.4 870.1,477.5 849.8,480.1" fill="#26ab9c"/><path class="e" d="M850.5,437.9 L871.0,435.4 L870.1,477.5 L849.8,480.1"/>
<polygon class="n" points="847.6,392.2 868.2,389.9 867.3,432.5 846.9,435.0" fill="#24a394"/><path class="e" d="M868.2,389.9 L847.6,392.2 L846.9,435.0 L867.3,432.5"/>
<polygon points="848.3,348.5 869.1,346.4 868.2,389.9 847.6,392.2" fill="#24a495"/>
<polygon points="849.0,304.0 870.1,302.0 869.1,346.4 848.3,348.5" fill="#24a495"/>
<polygon points="849.8,258.6 871.0,256.8 870.1,302.0 849.0,304.0" fill="#24a495"/>
<polygon points="821.7,825.5 840.5,821.8 840.0,856.8 821.3,860.5" fill="#24a495"/>
<polygon points="822.1,789.8 841.1,786.2 840.5,821.8 821.7,825.5" fill="#24a495"/>
<polygon class="n" points="822.5,753.4 841.7,750.0 841.1,786.2 822.1,789.8" fill="#229c8e"/><path class="e" d="M841.7,750.0 L822.5,753.4 L822.1,789.8 L841.1,786.2"/>
<polygon class="k" points="826.2,720.3 823.0,716.4 822.5,753.4 825.8,757.4"/>
<polygon class="t" points="826.2,720.3 845.6,716.9 842.3,713.1 823.0,716.4"/>
<polygon class="n" points="826.2,720.3 845.6,716.9 845.0,753.9 825.8,757.4" fill="#25a899"/><path class="e" d="M826.2,720.3 L845.6,716.9 L845.0,753.9 L825.8,757.4"/>
<polygon class="n" points="823.4,678.8 842.9,675.5 842.3,713.1 823.0,716.4" fill="#229c8e"/><path class="e" d="M842.9,675.5 L823.4,678.8 L823.0,716.4 L842.3,713.1"/>
<polygon class="k" points="831.7,649.0 823.9,640.4 823.4,678.8 831.2,687.7"/>
<polygon class="t" points="831.7,649.0 851.6,645.8 843.6,637.3 823.9,640.4"/>
<polygon class="n" points="831.7,649.0 851.6,645.8 850.9,684.3 831.2,687.7" fill="#26ab9c"/><path class="e" d="M831.7,649.0 L851.6,645.8 L850.9,684.3 L831.2,687.7"/>
<polygon class="n" points="824.3,601.3 844.2,598.3 843.6,637.3 823.9,640.4" fill="#24a294"/><path class="e" d="M844.2,598.3 L824.3,601.3 L823.9,640.4 L843.6,637.3"/>
<polygon class="k" points="832.8,569.5 824.8,561.5 824.3,601.3 832.3,609.6"/>
<polygon class="t" points="832.8,569.5 853.1,566.5 844.8,558.6 824.8,561.5"/>
<polygon class="n" points="832.8,569.5 853.1,566.5 852.3,606.5 832.3,609.6" fill="#26ab9c"/><path class="e" d="M832.8,569.5 L853.1,566.5 L852.3,606.5 L832.3,609.6"/>
<polygon class="n" points="825.3,520.9 845.5,518.2 844.8,558.6 824.8,561.5" fill="#24a294"/><path class="e" d="M845.5,518.2 L825.3,520.9 L824.8,561.5 L844.8,558.6"/>
<polygon class="k" points="831.1,484.3 825.7,479.6 825.3,520.9 830.6,525.9"/>
<polygon class="t" points="831.1,484.3 851.7,481.7 846.2,477.0 825.7,479.6"/>
<polygon class="n" points="831.1,484.3 851.7,481.7 851.0,523.2 830.6,525.9" fill="#26ab9c"/><path class="e" d="M831.1,484.3 L851.7,481.7 L851.0,523.2 L830.6,525.9"/>
<polygon class="n" points="826.2,437.4 846.9,435.0 846.2,477.0 825.7,479.6" fill="#24a294"/><path class="e" d="M846.9,435.0 L826.2,437.4 L825.7,479.6 L846.2,477.0"/>
<polygon class="k" points="828.0,395.4 826.7,394.4 826.2,437.4 827.5,438.4"/>
<polygon class="t" points="828.0,395.4 848.8,393.1 847.6,392.2 826.7,394.4"/>
<polygon class="n" points="828.0,395.4 848.8,393.1 848.1,436.0 827.5,438.4" fill="#26ab9c"/><path class="e" d="M828.0,395.4 L848.8,393.1 L848.1,436.0 L827.5,438.4"/>
<polygon points="827.2,350.6 848.3,348.5 847.6,392.2 826.7,394.4" fill="#24a495"/>
<polygon points="827.8,305.9 849.0,304.0 848.3,348.5 827.2,350.6" fill="#24a495"/>
<polygon points="828.3,260.4 849.8,258.6 849.0,304.0 827.8,305.9" fill="#24a495"/>
<polygon points="802.7,829.2 821.7,825.5 821.3,860.5 802.5,864.4" fill="#24a495"/>
<polygon points="803.0,793.4 822.1,789.8 821.7,825.5 802.7,829.2" fill="#239d8f"/>
<polygon class="k" points="804.2,758.2 803.2,756.9 803.0,793.4 803.9,794.7"/>
<polygon class="t" points="804.2,758.2 823.5,754.7 822.5,753.4 803.2,756.9"/>
<polygon class="n" points="804.2,758.2 823.5,754.7 823.1,791.0 803.9,794.7" fill="#24a596"/><path class="e" d="M804.2,758.2 L823.5,754.7 L823.1,791.0 L803.9,794.7"/>
<polygon class="n" points="803.5,719.8 823.0,716.4 822.5,753.4 803.2,756.9" fill="#229c8e"/><path class="e" d="M823.0,716.4 L803.5,719.8 L803.2,756.9 L822.5,753.4"/>
<polygon class="k" points="809.0,688.2 803.7,682.0 803.5,719.8 808.7,726.2"/>
<polygon class="t" points="809.0,688.2 828.8,684.9 823.4,678.8 803.7,682.0"/>
<polygon class="n" points="809.0,688.2 828.8,684.9 828.3,722.8 808.7,726.2" fill="#25ab9b"/><path class="e" d="M809.0,688.2 L828.8,684.9 L828.3,722.8 L808.7,726.2"/>
<polygon class="n" points="804.0,643.5 823.9,640.4 823.4,678.8 803.7,682.0" fill="#24a294"/><path class="e" d="M823.9,640.4 L804.0,643.5 L803.7,682.0 L823.4,678.8"/>
<polygon class="k" points="812.1,612.7 804.3,604.3 804.0,643.5 811.7,652.2"/>
<polygon class="t" points="812.1,612.7 832.3,609.6 824.3,601.3 804.3,604.3"/>
<polygon class="n" points="812.1,612.7 832.3,609.6 831.7,649.0 811.7,652.2" fill="#26ab9c"/><path class="e" d="M812.1,612.7 L832.3,609.6 L831.7,649.0 L811.7,652.2"/>
<polygon class="n" points="804.6,564.4 824.8,561.5 824.3,601.3 804.3,604.3" fill="#24a294"/><path class="e" d="M824.8,561.5 L804.6,564.4 L804.3,604.3 L824.3,601.3"/>
<polygon class="k" points="811.6,530.2 804.8,523.7 804.6,564.4 811.2,571.2"/>
<polygon class="t" points="811.6,530.2 832.1,527.4 825.3,520.9 804.8,523.7"/>
<polygon class="n" points="811.6,530.2 832.1,527.4 831.6,568.3 811.2,571.2" fill="#26ab9c"/><path class="e" d="M811.6,530.2 L832.1,527.4 L831.6,568.3 L811.2,571.2"/>
<polygon class="n" points="805.1,482.2 825.7,479.6 825.3,520.9 804.8,523.7" fill="#24a294"/><path class="e" d="M825.7,479.6 L805.1,482.2 L804.8,523.7 L825.3,520.9"/>
<polygon class="k" points="808.9,442.9 805.4,439.9 805.1,482.2 808.6,485.3"/>
<polygon class="t" points="808.9,442.9 829.8,440.4 826.2,437.4 805.4,439.9"/>
<polygon class="n" points="808.9,442.9 829.8,440.4 829.2,482.7 808.6,485.3" fill="#26ab9c"/><path class="e" d="M808.9,442.9 L829.8,440.4 L829.2,482.7 L808.6,485.3"/>
<polygon class="n" points="805.7,396.8 826.7,394.4 826.2,437.4 805.4,439.9" fill="#24a394"/><path class="e" d="M826.7,394.4 L805.7,396.8 L805.4,439.9 L826.2,437.4"/>
<polygon points="806.0,352.8 827.2,350.6 826.7,394.4 805.7,396.8" fill="#24a495"/>
<polygon points="806.3,307.9 827.8,305.9 827.2,350.6 806.0,352.8" fill="#24a495"/>
<polygon points="806.7,262.2 828.3,260.4 827.8,305.9 806.3,307.9" fill="#24a495"/>
<polygon points="783.6,832.9 802.7,829.2 802.5,864.4 783.5,868.2" fill="#24a495"/>
<polygon points="783.7,797.0 803.0,793.4 802.7,829.2 783.6,832.9" fill="#24a495"/>
<polygon class="n" points="783.7,760.5 803.2,756.9 803.0,793.4 783.7,797.0" fill="#229d8e"/><path class="e" d="M803.2,756.9 L783.7,760.5 L783.7,797.0 L803.0,793.4"/>
<polygon class="k" points="786.7,726.9 783.8,723.2 783.7,760.5 786.6,764.3"/>
<polygon class="t" points="786.7,726.9 806.5,723.5 803.5,719.8 783.8,723.2"/>
<polygon class="n" points="786.7,726.9 806.5,723.5 806.2,760.7 786.6,764.3" fill="#25a899"/><path class="e" d="M786.7,726.9 L806.5,723.5 L806.2,760.7 L786.6,764.3"/>
<polygon class="n" points="783.9,685.3 803.7,682.0 803.5,719.8 783.8,723.2" fill="#229c8e"/><path class="e" d="M803.7,682.0 L783.9,685.3 L783.8,723.2 L803.5,719.8"/>
<polygon class="k" points="791.1,655.0 784.0,646.7 783.9,685.3 791.0,693.9"/>
<polygon class="t" points="791.1,655.0 811.3,651.8 804.0,643.5 784.0,646.7"/>
<polygon class="n" points="791.1,655.0 811.3,651.8 810.9,690.5 791.0,693.9" fill="#26ab9c"/><path class="e" d="M791.1,655.0 L811.3,651.8 L810.9,690.5 L791.0,693.9"/>
<polygon class="n" points="784.1,607.4 804.3,604.3 804.0,643.5 784.0,646.7" fill="#24a294"/><path class="e" d="M804.3,604.3 L784.1,607.4 L784.0,646.7 L804.0,643.5"/>
<polygon class="k" points="791.8,575.4 784.2,567.3 784.1,607.4 791.7,615.8"/>
<polygon class="t" points="791.8,575.4 812.4,572.4 804.6,564.4 784.2,567.3"/>
<polygon class="n" points="791.8,575.4 812.4,572.4 812.1,612.7 791.7,615.8" fill="#26ab9c"/><path class="e" d="M791.8,575.4 L812.4,572.4 L812.1,612.7 L791.7,615.8"/>
<polygon class="n" points="784.3,526.5 804.8,523.7 804.6,564.4 784.2,567.3" fill="#24a294"/><path class="e" d="M804.8,523.7 L784.3,526.5 L784.2,567.3 L804.6,564.4"/>
<polygon class="k" points="789.5,489.7 784.3,484.8 784.3,526.5 789.4,531.6"/>
<polygon class="t" points="789.5,489.7 810.4,487.0 805.1,482.2 784.3,484.8"/>
<polygon class="n" points="789.5,489.7 810.4,487.0 810.1,528.7 789.4,531.6" fill="#26ab9c"/><path class="e" d="M789.5,489.7 L810.4,487.0 L810.1,528.7 L789.4,531.6"/>
<polygon class="n" points="784.4,442.4 805.4,439.9 805.1,482.2 784.3,484.8" fill="#24a294"/><path class="e" d="M805.4,439.9 L784.4,442.4 L784.3,484.8 L805.1,482.2"/>
<polygon class="k" points="785.7,400.1 784.5,399.1 784.4,442.4 785.6,443.4"/>
<polygon class="t" points="785.7,400.1 806.9,397.7 805.7,396.8 784.5,399.1"/>
<polygon class="n" points="785.7,400.1 806.9,397.7 806.6,440.9 785.6,443.4" fill="#26ab9c"/><path class="e" d="M785.7,400.1 L806.9,397.7 L806.6,440.9 L785.6,443.4"/>
<polygon points="784.6,355.0 806.0,352.8 805.7,396.8 784.5,399.1" fill="#24a495"/>
<polygon points="784.7,309.9 806.3,307.9 806.0,352.8 784.6,355.0" fill="#24a495"/>
<polygon points="784.8,264.0 806.7,262.2 806.3,307.9 784.7,309.9" fill="#24a495"/>
<polygon points="764.3,836.7 783.6,832.9 783.5,868.2 764.4,872.1" fill="#24a495"/>
<polygon points="764.2,800.7 783.7,797.0 783.6,832.9 764.3,836.7" fill="#239d8f"/>
<polygon class="k" points="765.0,765.2 764.1,764.0 764.2,800.7 765.0,801.9"/>
<polygon class="t" points="765.0,765.2 784.6,761.6 783.7,760.5 764.1,764.0"/>
<polygon class="n" points="765.0,765.2 784.6,761.6 784.5,798.2 765.0,801.9" fill="#24a596"/><path class="e" d="M765.0,765.2 L784.6,761.6 L784.5,798.2 L765.0,801.9"/>
<polygon class="n" points="764.0,726.7 783.8,723.2 783.7,760.5 764.1,764.0" fill="#229c8e"/><path class="e" d="M783.8,723.2 L764.0,726.7 L764.1,764.0 L783.7,760.5"/>
<polygon class="k" points="768.7,694.6 763.9,688.7 764.0,726.7 768.7,732.8"/>
<polygon class="t" points="768.7,694.6 788.8,691.2 783.9,685.3 763.9,688.7"/>
<polygon class="n" points="768.7,694.6 788.8,691.2 788.6,729.3 768.7,732.8" fill="#25aa9b"/><path class="e" d="M768.7,694.6 L788.8,691.2 L788.6,729.3 L768.7,732.8"/>
<polygon class="n" points="763.8,649.9 784.0,646.7 783.9,685.3 763.9,688.7" fill="#24a294"/><path class="e" d="M784.0,646.7 L763.8,649.9 L763.9,688.7 L783.9,685.3"/>
<polygon class="k" points="771.1,619.0 763.7,610.5 763.8,649.9 771.2,658.8"/>
<polygon class="t" points="771.1,619.0 791.7,615.8 784.1,607.4 763.7,610.5"/>
<polygon class="n" points="771.1,619.0 791.7,615.8 791.5,655.5 771.2,658.8" fill="#26ab9c"/><path class="e" d="M771.1,619.0 L791.7,615.8 L791.5,655.5 L771.2,658.8"/>
<polygon class="n" points="763.6,570.2 784.2,567.3 784.1,607.4 763.7,610.5" fill="#24a294"/><path class="e" d="M784.2,567.3 L763.6,570.2 L763.7,610.5 L784.1,607.4"/>
<polygon class="k" points="769.9,535.9 763.5,529.3 763.6,570.2 770.0,577.2"/>
<polygon class="t" points="769.9,535.9 790.8,533.0 784.3,526.5 763.5,529.3"/>
<polygon class="n" points="769.9,535.9 790.8,533.0 790.7,574.2 770.0,577.2" fill="#26ab9c"/><path class="e" d="M769.9,535.9 L790.8,533.0 L790.7,574.2 L770.0,577.2"/>
<polygon class="n" points="763.4,487.5 784.3,484.8 784.3,526.5 763.5,529.3" fill="#24a294"/><path class="e" d="M784.3,484.8 L763.4,487.5 L763.5,529.3 L784.3,526.5"/>
<polygon class="k" points="766.6,447.9 763.3,444.9 763.4,487.5 766.7,490.7"/>
<polygon class="t" points="766.6,447.9 787.8,445.4 784.4,442.4 763.3,444.9"/>
<polygon class="n" points="766.6,447.9 787.8,445.4 787.7,488.0 766.7,490.7" fill="#26ab9c"/><path class="e" d="M766.6,447.9 L787.8,445.4 L787.7,488.0 L766.7,490.7"/>
<polygon class="n" points="763.2,401.5 784.5,399.1 784.4,442.4 763.3,444.9" fill="#24a394"/><path class="e" d="M784.5,399.1 L763.2,401.5 L763.3,444.9 L784.4,442.4"/>
<polygon points="763.1,357.1 784.6,355.0 784.5,399.1 763.2,401.5" fill="#24a495"/>
<polygon points="762.9,311.9 784.7,309.9 784.6,355.0 763.1,357.1" fill="#24a495"/>
<polygon points="762.8,265.8 784.8,264.0 784.7,309.9 762.9,311.9" fill="#24a495"/>
<polygon points="744.9,840.5 764.3,836.7 764.4,872.1 745.2,876.0" fill="#24a495"/>
<polygon points="744.6,804.4 764.2,800.7 764.3,836.7 744.9,840.5" fill="#24a495"/>
<polygon class="n" points="744.3,767.6 764.1,764.0 764.2,800.7 744.6,804.4" fill="#229d8e"/><path class="e" d="M764.1,764.0 L744.3,767.6 L744.6,804.4 L764.2,800.7"/>
<polygon class="k" points="746.7,733.7 744.1,730.2 744.3,767.6 746.9,771.2"/>
<polygon class="t" points="746.7,733.7 766.7,730.2 764.0,726.7 744.1,730.2"/>
<polygon class="n" points="746.7,733.7 766.7,730.2 766.8,767.6 746.9,771.2" fill="#25a898"/><path class="e" d="M746.7,733.7 L766.7,730.2 L766.8,767.6 L746.9,771.2"/>
<polygon class="n" points="743.8,692.0 763.9,688.7 764.0,726.7 744.1,730.2" fill="#229c8e"/><path class="e" d="M763.9,688.7 L743.8,692.0 L744.1,730.2 L764.0,726.7"/>
<polygon class="k" points="749.9,661.1 743.5,653.2 743.8,692.0 750.1,700.2"/>
<polygon class="t" points="749.9,661.1 770.4,657.8 763.8,649.9 743.5,653.2"/>
<polygon class="n" points="749.9,661.1 770.4,657.8 770.4,696.8 750.1,700.2" fill="#26ab9c"/><path class="e" d="M749.9,661.1 L770.4,657.8 L770.4,696.8 L750.1,700.2"/>
<polygon class="n" points="743.2,613.6 763.7,610.5 763.8,649.9 743.5,653.2" fill="#24a294"/><path class="e" d="M763.7,610.5 L743.2,613.6 L743.5,653.2 L763.8,649.9"/>
<polygon class="k" points="750.2,581.4 742.9,573.2 743.2,613.6 750.4,622.1"/>
<polygon class="t" points="750.2,581.4 771.1,578.4 763.6,570.2 742.9,573.2"/>
<polygon class="n" points="750.2,581.4 771.1,578.4 771.1,619.0 750.4,622.1" fill="#26ab9c"/><path class="e" d="M750.2,581.4 L771.1,578.4 L771.1,619.0 L750.4,622.1"/>
<polygon class="n" points="742.6,532.1 763.5,529.3 763.6,570.2 742.9,573.2" fill="#24a294"/><path class="e" d="M763.5,529.3 L742.6,532.1 L742.9,573.2 L763.6,570.2"/>
<polygon class="k" points="747.2,495.1 742.3,490.2 742.6,532.1 747.4,537.3"/>
<polygon class="t" points="747.2,495.1 768.4,492.4 763.4,487.5 742.3,490.2"/>
<polygon class="n" points="747.2,495.1 768.4,492.4 768.5,534.4 747.4,537.3" fill="#26ab9c"/><path class="e" d="M747.2,495.1 L768.4,492.4 L768.5,534.4 L747.4,537.3"/>
<polygon class="n" points="742.0,447.4 763.3,444.9 763.4,487.5 742.3,490.2" fill="#24a294"/><path class="e" d="M763.3,444.9 L742.0,447.4 L742.3,490.2 L763.4,487.5"/>
<polygon class="k" points="742.8,404.8 741.6,403.8 742.0,447.4 743.1,448.5"/>
<polygon class="t" points="742.8,404.8 764.3,402.4 763.2,401.5 741.6,403.8"/>
<polygon class="n" points="742.8,404.8 764.3,402.4 764.4,445.9 743.1,448.5" fill="#26ab9c"/><path class="e" d="M742.8,404.8 L764.3,402.4 L764.4,445.9 L743.1,448.5"/>
<polygon points="741.3,359.4 763.1,357.1 763.2,401.5 741.6,403.8" fill="#24a495"/>
<polygon points="741.0,314.0 762.9,311.9 763.1,357.1 741.3,359.4" fill="#24a495"/>
<polygon points="740.6,267.7 762.8,265.8 762.9,311.9 741.0,314.0" fill="#24a495"/>
<polygon points="725.3,844.3 744.9,840.5 745.2,876.0 725.8,879.9" fill="#24a495"/>
<polygon points="724.9,808.1 744.6,804.4 744.9,840.5 725.3,844.3" fill="#239d8f"/>
<polygon class="k" points="725.1,772.3 724.4,771.2 724.9,808.1 725.6,809.2"/>
<polygon class="t" points="725.1,772.3 745.1,768.6 744.3,767.6 724.4,771.2"/>
<polygon class="n" points="725.1,772.3 745.1,768.6 745.4,805.4 725.6,809.2" fill="#24a596"/><path class="e" d="M725.1,772.3 L745.1,768.6 L745.4,805.4 L725.6,809.2"/>
<polygon class="n" points="724.0,733.6 744.1,730.2 744.3,767.6 724.4,771.2" fill="#229c8e"/><path class="e" d="M744.1,730.2 L724.0,733.6 L724.4,771.2 L744.3,767.6"/>
<polygon class="k" points="727.7,701.1 723.5,695.4 724.0,733.6 728.2,739.5"/>
<polygon class="t" points="727.7,701.1 748.1,697.7 743.8,692.0 723.5,695.4"/>
<polygon class="n" points="727.7,701.1 748.1,697.7 748.4,736.0 728.2,739.5" fill="#25aa9b"/><path class="e" d="M727.7,701.1 L748.1,697.7 L748.4,736.0 L728.2,739.5"/>
<polygon class="n" points="723.0,656.4 743.5,653.2 743.8,692.0 723.5,695.4" fill="#24a294"/><path class="e" d="M743.5,653.2 L723.0,656.4 L723.5,695.4 L743.8,692.0"/>
<polygon class="k" points="729.6,625.3 722.5,616.7 723.0,656.4 730.0,665.4"/>
<polygon class="t" points="729.6,625.3 750.4,622.1 743.2,613.6 722.5,616.7"/>
<polygon class="n" points="729.6,625.3 750.4,622.1 750.7,662.0 730.0,665.4" fill="#26ab9c"/><path class="e" d="M729.6,625.3 L750.4,622.1 L750.7,662.0 L730.0,665.4"/>
<polygon class="n" points="722.0,576.2 742.9,573.2 743.2,613.6 722.5,616.7" fill="#24a294"/><path class="e" d="M742.9,573.2 L722.0,576.2 L722.5,616.7 L743.2,613.6"/>
<polygon class="k" points="727.6,541.7 721.5,534.9 722.0,576.2 728.0,583.2"/>
<polygon class="t" points="727.6,541.7 748.8,538.8 742.6,532.1 721.5,534.9"/>
<polygon class="n" points="727.6,541.7 748.8,538.8 749.1,580.2 728.0,583.2" fill="#26ab9c"/><path class="e" d="M727.6,541.7 L748.8,538.8 L749.1,580.2 L728.0,583.2"/>
<polygon class="n" points="721.0,492.9 742.3,490.2 742.6,532.1 721.5,534.9" fill="#24a294"/><path class="e" d="M742.3,490.2 L721.0,492.9 L721.5,534.9 L742.6,532.1"/>
<polygon class="k" points="723.6,453.0 720.4,450.0 721.0,492.9 724.1,496.1"/>
<polygon class="t" points="723.6,453.0 745.2,450.5 742.0,447.4 720.4,450.0"/>
<polygon class="n" points="723.6,453.0 745.2,450.5 745.5,493.4 724.1,496.1" fill="#26ab9c"/><path class="e" d="M723.6,453.0 L745.2,450.5 L745.5,493.4 L724.1,496.1"/>
<polygon class="n" points="719.9,406.2 741.6,403.8 742.0,447.4 720.4,450.0" fill="#24a394"/><path class="e" d="M741.6,403.8 L719.9,406.2 L720.4,450.0 L742.0,447.4"/>
<polygon points="719.4,361.6 741.3,359.4 741.6,403.8 719.9,406.2" fill="#24a495"/>
<polygon points="718.8,316.0 741.0,314.0 741.3,359.4 719.4,361.6" fill="#24a495"/>
<polygon points="718.2,269.6 740.6,267.7 741.0,314.0 718.8,316.0" fill="#24a495"/>
<polygon points="705.6,848.2 725.3,844.3 725.8,879.9 706.2,883.8" fill="#24a495"/>
<polygon points="705.0,811.8 724.9,808.1 725.3,844.3 705.6,848.2" fill="#24a495"/>
<polygon class="n" points="704.3,774.8 724.4,771.2 724.9,808.1 705.0,811.8" fill="#229d8e"/><path class="e" d="M724.4,771.2 L704.3,774.8 L705.0,811.8 L724.9,808.1"/>
<polygon class="k" points="706.0,740.5 703.7,737.2 704.3,774.8 706.6,778.3"/>
<polygon class="t" points="706.0,740.5 726.3,737.0 724.0,733.6 703.7,737.2"/>
<polygon class="n" points="706.0,740.5 726.3,737.0 726.8,774.6 706.6,778.3" fill="#25a798"/><path class="e" d="M706.0,740.5 L726.3,737.0 L726.8,774.6 L706.6,778.3"/>
<polygon class="n" points="703.0,698.8 723.5,695.4 724.0,733.6 703.7,737.2" fill="#229c8e"/><path class="e" d="M723.5,695.4 L703.0,698.8 L703.7,737.2 L724.0,733.6"/>
<polygon class="k" points="708.1,667.3 702.3,659.7 703.0,698.8 708.7,706.7"/>
<polygon class="t" points="708.1,667.3 728.9,664.0 723.0,656.4 702.3,659.7"/>
<polygon class="n" points="708.1,667.3 728.9,664.0 729.3,703.2 708.7,706.7" fill="#26ab9c"/><path class="e" d="M708.1,667.3 L728.9,664.0 L729.3,703.2 L708.7,706.7"/>
<polygon class="n" points="701.7,619.8 722.5,616.7 723.0,656.4 702.3,659.7" fill="#24a294"/><path class="e" d="M722.5,616.7 L701.7,619.8 L702.3,659.7 L723.0,656.4"/>
<polygon class="k" points="707.9,587.6 700.9,579.2 701.7,619.8 708.5,628.5"/>
<polygon class="t" points="707.9,587.6 729.1,584.5 722.0,576.2 700.9,579.2"/>
<polygon class="n" points="707.9,587.6 729.1,584.5 729.6,625.3 708.5,628.5" fill="#26ab9c"/><path class="e" d="M707.9,587.6 L729.1,584.5 L729.6,625.3 L708.5,628.5"/>
<polygon class="n" points="700.2,537.8 721.5,534.9 722.0,576.2 700.9,579.2" fill="#24a294"/><path class="e" d="M721.5,534.9 L700.2,537.8 L700.9,579.2 L722.0,576.2"/>
<polygon class="k" points="704.1,500.6 699.5,495.6 700.2,537.8 704.8,543.1"/>
<polygon class="t" points="704.1,500.6 725.7,497.8 721.0,492.9 699.5,495.6"/>
<polygon class="n" points="704.1,500.6 725.7,497.8 726.2,540.2 704.8,543.1" fill="#26ab9c"/><path class="e" d="M704.1,500.6 L725.7,497.8 L726.2,540.2 L704.8,543.1"/>
<polygon class="n" points="698.8,452.5 720.4,450.0 721.0,492.9 699.5,495.6" fill="#24a294"/><path class="e" d="M720.4,450.0 L698.8,452.5 L699.5,495.6 L721.0,492.9"/>
<polygon class="k" points="699.1,409.6 698.0,408.6 698.8,452.5 699.8,453.6"/>
<polygon class="t" points="699.1,409.6 721.0,407.2 719.9,406.2 698.0,408.6"/>
<polygon class="n" points="699.1,409.6 721.0,407.2 721.5,451.0 699.8,453.6" fill="#26ab9c"/><path class="e" d="M699.1,409.6 L721.0,407.2 L721.5,451.0 L699.8,453.6"/>
<polygon points="697.2,363.8 719.4,361.6 719.9,406.2 698.0,408.6" fill="#24a495"/>
<polygon points="696.4,318.1 718.8,316.0 719.4,361.6 697.2,363.8" fill="#24a495"/>
<polygon points="695.6,271.4 718.2,269.6 718.8,316.0 696.4,318.1" fill="#24a495"/>
<polygon points="685.7,852.0 705.6,848.2 706.2,883.8 686.5,887.8" fill="#24a495"/>
<polygon points="684.9,815.6 705.0,811.8 705.6,848.2 685.7,852.0" fill="#239d8f"/>
<polygon class="k" points="684.7,779.5 684.1,778.5 684.9,815.6 685.5,816.6"/>
<polygon class="t" points="684.7,779.5 705.0,775.8 704.3,774.8 684.1,778.5"/>
<polygon class="n" points="684.7,779.5 705.0,775.8 705.6,812.8 685.5,816.6" fill="#24a596"/><path class="e" d="M684.7,779.5 L705.0,775.8 L705.6,812.8 L685.5,816.6"/>
<polygon class="n" points="683.3,740.7 703.7,737.2 704.3,774.8 684.1,778.5" fill="#229c8e"/><path class="e" d="M703.7,737.2 L683.3,740.7 L684.1,778.5 L704.3,774.8"/>
<polygon class="k" points="686.2,707.7 682.4,702.2 683.3,740.7 687.0,746.3"/>
<polygon class="t" points="686.2,707.7 706.9,704.2 703.0,698.8 682.4,702.2"/>
<polygon class="n" points="686.2,707.7 706.9,704.2 707.5,742.7 687.0,746.3" fill="#25aa9a"/><path class="e" d="M686.2,707.7 L706.9,704.2 L707.5,742.7 L687.0,746.3"/>
<polygon class="n" points="681.5,663.0 702.3,659.7 703.0,698.8 682.4,702.2" fill="#24a294"/><path class="e" d="M702.3,659.7 L681.5,663.0 L682.4,702.2 L703.0,698.8"/>
<polygon class="k" points="687.3,631.8 680.6,623.0 681.5,663.0 688.1,672.1"/>
<polygon class="t" points="687.3,631.8 708.5,628.5 701.7,619.8 680.6,623.0"/>
<polygon class="n" points="687.3,631.8 708.5,628.5 709.1,668.7 688.1,672.1" fill="#26ab9c"/><path class="e" d="M687.3,631.8 L708.5,628.5 L709.1,668.7 L688.1,672.1"/>
<polygon class="n" points="679.7,582.3 700.9,579.2 701.7,619.8 680.6,623.0" fill="#24a294"/><path class="e" d="M700.9,579.2 L679.7,582.3 L680.6,623.0 L701.7,619.8"/>
<polygon class="k" points="684.5,547.6 678.8,540.7 679.7,582.3 685.4,589.4"/>
<polygon class="t" points="684.5,547.6 706.2,544.6 700.2,537.8 678.8,540.7"/>
<polygon class="n" points="684.5,547.6 706.2,544.6 706.8,586.3 685.4,589.4" fill="#26ab9c"/><path class="e" d="M684.5,547.6 L706.2,544.6 L706.8,586.3 L685.4,589.4"/>
<polygon class="n" points="677.8,498.4 699.5,495.6 700.2,537.8 678.8,540.7" fill="#24a294"/><path class="e" d="M699.5,495.6 L677.8,498.4 L678.8,540.7 L700.2,537.8"/>
<polygon class="k" points="679.8,458.3 676.9,455.1 677.8,498.4 680.8,501.6"/>
<polygon class="t" points="679.8,458.3 701.8,455.6 698.8,452.5 676.9,455.1"/>
<polygon class="n" points="679.8,458.3 701.8,455.6 702.5,498.9 680.8,501.6" fill="#26ab9c"/><path class="e" d="M679.8,458.3 L701.8,455.6 L702.5,498.9 L680.8,501.6"/>
<polygon class="n" points="675.9,411.1 698.0,408.6 698.8,452.5 676.9,455.1" fill="#24a394"/><path class="e" d="M698.0,408.6 L675.9,411.1 L676.9,455.1 L698.8,452.5"/>
<polygon points="674.9,366.1 697.2,363.8 698.0,408.6 675.9,411.1" fill="#24a495"/>
<polygon points="673.9,320.2 696.4,318.1 697.2,363.8 674.9,366.1" fill="#24a495"/>
<polygon points="672.8,273.3 695.6,271.4 696.4,318.1 673.9,320.2" fill="#24a495"/>
<polygon points="665.7,856.0 685.7,852.0 686.5,887.8 666.7,891.8" fill="#24a495"/>
<polygon points="664.7,819.4 684.9,815.6 685.7,852.0 665.7,856.0" fill="#24a495"/>
<polygon class="n" points="663.7,782.2 684.1,778.5 684.9,815.6 664.7,819.4" fill="#229d8e"/><path class="e" d="M684.1,778.5 L663.7,782.2 L664.7,819.4 L684.9,815.6"/>
<polygon class="k" points="664.7,747.5 662.7,744.3 663.7,782.2 665.7,785.5"/>
<polygon class="t" points="664.7,747.5 685.4,743.9 683.3,740.7 662.7,744.3"/>
<polygon class="n" points="664.7,747.5 685.4,743.9 686.2,781.8 665.7,785.5" fill="#25a798"/><path class="e" d="M664.7,747.5 L685.4,743.9 L686.2,781.8 L665.7,785.5"/>
<polygon class="n" points="661.6,705.7 682.4,702.2 683.3,740.7 662.7,744.3" fill="#229c8e"/><path class="e" d="M682.4,702.2 L661.6,705.7 L662.7,744.3 L683.3,740.7"/>
<polygon class="k" points="665.6,673.6 660.5,666.3 661.6,705.7 666.7,713.2"/>
<polygon class="t" points="665.6,673.6 686.8,670.2 681.5,663.0 660.5,666.3"/>
<polygon class="n" points="665.6,673.6 686.8,670.2 687.6,709.7 666.7,713.2" fill="#26ab9c"/><path class="e" d="M665.6,673.6 L686.8,670.2 L687.6,709.7 L666.7,713.2"/>
<polygon class="n" points="659.4,626.2 680.6,623.0 681.5,663.0 660.5,666.3" fill="#24a294"/><path class="e" d="M680.6,623.0 L659.4,626.2 L660.5,666.3 L681.5,663.0"/>
<polygon class="k" points="664.8,593.8 658.3,585.3 659.4,626.2 665.9,635.1"/>
<polygon class="t" points="664.8,593.8 686.4,590.7 679.7,582.3 658.3,585.3"/>
<polygon class="n" points="664.8,593.8 686.4,590.7 687.3,631.8 665.9,635.1" fill="#26ab9c"/><path class="e" d="M664.8,593.8 L686.4,590.7 L687.3,631.8 L665.9,635.1"/>
<polygon class="n" points="657.2,543.6 678.8,540.7 679.7,582.3 658.3,585.3" fill="#24a294"/><path class="e" d="M678.8,540.7 L657.2,543.6 L658.3,585.3 L679.7,582.3"/>
<polygon class="k" points="660.4,506.2 656.0,501.1 657.2,543.6 661.5,549.0"/>
<polygon class="t" points="660.4,506.2 682.3,503.4 677.8,498.4 656.0,501.1"/>
<polygon class="n" points="660.4,506.2 682.3,503.4 683.3,546.0 661.5,549.0" fill="#26ab9c"/><path class="e" d="M660.4,506.2 L682.3,503.4 L683.3,546.0 L661.5,549.0"/>
<polygon class="n" points="654.8,457.8 676.9,455.1 677.8,498.4 656.0,501.1" fill="#24a294"/><path class="e" d="M676.9,455.1 L654.8,457.8 L656.0,501.1 L677.8,498.4"/>
<polygon class="k" points="654.6,414.5 653.6,413.5 654.8,457.8 655.8,458.9"/>
<polygon class="t" points="654.6,414.5 676.9,412.1 675.9,411.1 653.6,413.5"/>
<polygon class="n" points="654.6,414.5 676.9,412.1 677.9,456.2 655.8,458.9" fill="#26ab9c"/><path class="e" d="M654.6,414.5 L676.9,412.1 L677.9,456.2 L655.8,458.9"/>
<polygon points="652.4,368.4 674.9,366.1 675.9,411.1 653.6,413.5" fill="#24a495"/>
<polygon points="651.1,322.3 673.9,320.2 674.9,366.1 652.4,368.4" fill="#24a495"/>
<polygon points="649.8,275.3 672.8,273.3 673.9,320.2 651.1,322.3" fill="#24a495"/>
<polygon points="645.5,859.9 665.7,856.0 666.7,891.8 646.7,895.9" fill="#24a495"/>
<polygon points="644.3,823.3 664.7,819.4 665.7,856.0 645.5,859.9" fill="#239d8f"/>
<polygon class="k" points="643.7,786.8 643.1,785.9 644.3,823.3 644.9,824.2"/>
<polygon class="t" points="643.7,786.8 664.2,783.1 663.7,782.2 643.1,785.9"/>
<polygon class="n" points="643.7,786.8 664.2,783.1 665.2,820.3 644.9,824.2" fill="#24a596"/><path class="e" d="M643.7,786.8 L664.2,783.1 L665.2,820.3 L644.9,824.2"/>
<polygon class="n" points="641.9,747.9 662.7,744.3 663.7,782.2 643.1,785.9" fill="#229c8e"/><path class="e" d="M662.7,744.3 L641.9,747.9 L643.1,785.9 L663.7,782.2"/>
<polygon class="k" points="644.0,714.4 640.6,709.2 641.9,747.9 645.2,753.3"/>
<polygon class="t" points="644.0,714.4 665.1,710.8 661.6,705.7 640.6,709.2"/>
<polygon class="n" points="644.0,714.4 665.1,710.8 666.1,749.6 645.2,753.3" fill="#25a99a"/><path class="e" d="M644.0,714.4 L665.1,710.8 L666.1,749.6 L645.2,753.3"/>
<polygon class="n" points="639.4,669.7 660.5,666.3 661.6,705.7 640.6,709.2" fill="#229c8e"/><path class="e" d="M660.5,666.3 L639.4,669.7 L640.6,709.2 L661.6,705.7"/>
<polygon class="k" points="644.3,638.4 638.1,629.5 639.4,669.7 645.6,678.9"/>
<polygon class="t" points="644.3,638.4 665.9,635.1 659.4,626.2 638.1,629.5"/>
<polygon class="n" points="644.3,638.4 665.9,635.1 666.9,675.5 645.6,678.9" fill="#26ab9c"/><path class="e" d="M644.3,638.4 L665.9,635.1 L666.9,675.5 L645.6,678.9"/>
<polygon class="n" points="636.7,588.4 658.3,585.3 659.4,626.2 638.1,629.5" fill="#24a294"/><path class="e" d="M658.3,585.3 L636.7,588.4 L638.1,629.5 L659.4,626.2"/>
<polygon class="k" points="640.8,553.5 635.4,546.6 636.7,588.4 642.1,595.7"/>
<polygon class="t" points="640.8,553.5 662.8,550.5 657.2,543.6 635.4,546.6"/>
<polygon class="n" points="640.8,553.5 662.8,550.5 663.8,592.5 642.1,595.7" fill="#26ab9c"/><path class="e" d="M640.8,553.5 L662.8,550.5 L663.8,592.5 L642.1,595.7"/>
<polygon class="n" points="634.0,503.9 656.0,501.1 657.2,543.6 635.4,546.6" fill="#24a294"/><path class="e" d="M656.0,501.1 L634.0,503.9 L635.4,546.6 L657.2,543.6"/>
<polygon class="k" points="635.3,463.6 632.6,460.4 634.0,503.9 636.7,507.3"/>
<polygon class="t" points="635.3,463.6 657.7,460.9 654.8,457.8 632.6,460.4"/>
<polygon class="n" points="635.3,463.6 657.7,460.9 658.8,504.4 636.7,507.3" fill="#26ab9c"/><path class="e" d="M635.3,463.6 L657.7,460.9 L658.8,504.4 L636.7,507.3"/>
<polygon class="n" points="631.1,416.0 653.6,413.5 654.8,457.8 632.6,460.4" fill="#24a394"/><path class="e" d="M653.6,413.5 L631.1,416.0 L632.6,460.4 L654.8,457.8"/>
<polygon points="629.7,370.7 652.4,368.4 653.6,413.5 631.1,416.0" fill="#24a495"/>
<polygon points="628.2,324.4 651.1,322.3 652.4,368.4 629.7,370.7" fill="#24a495"/>
<polygon points="626.6,277.2 649.8,275.3 651.1,322.3 628.2,324.4" fill="#24a495"/>
<polygon points="625.2,863.9 645.5,859.9 646.7,895.9 626.6,900.0" fill="#24a495"/>
<polygon points="623.8,827.1 644.3,823.3 645.5,859.9 625.2,863.9" fill="#24a495"/>
<polygon class="n" points="622.4,789.7 643.1,785.9 644.3,823.3 623.8,827.1" fill="#229d8e"/><path class="e" d="M643.1,785.9 L622.4,789.7 L623.8,827.1 L644.3,823.3"/>
<polygon class="k" points="622.8,754.6 621.0,751.6 622.4,789.7 624.2,792.8"/>
<polygon class="t" points="622.8,754.6 643.8,750.9 641.9,747.9 621.0,751.6"/>
<polygon class="n" points="622.8,754.6 643.8,750.9 645.0,789.0 624.2,792.8" fill="#25a798"/><path class="e" d="M622.8,754.6 L643.8,750.9 L645.0,789.0 L624.2,792.8"/>
<polygon class="n" points="619.5,712.7 640.6,709.2 641.9,747.9 621.0,751.6" fill="#229c8e"/><path class="e" d="M640.6,709.2 L619.5,712.7 L621.0,751.6 L641.9,747.9"/>
<polygon class="k" points="622.5,680.0 618.0,673.1 619.5,712.7 624.0,719.9"/>
<polygon class="t" points="622.5,680.0 644.0,676.6 639.4,669.7 618.0,673.1"/>
<polygon class="n" points="622.5,680.0 644.0,676.6 645.3,716.3 624.0,719.9" fill="#26ab9c"/><path class="e" d="M622.5,680.0 L644.0,676.6 L645.3,716.3 L624.0,719.9"/>
<polygon class="n" points="616.5,632.7 638.1,629.5 639.4,669.7 618.0,673.1" fill="#24a294"/><path class="e" d="M638.1,629.5 L616.5,632.7 L618.0,673.1 L639.4,669.7"/>
<polygon class="k" points="621.1,600.2 615.0,591.5 616.5,632.7 622.6,641.7"/>
<polygon class="t" points="621.1,600.2 643.0,597.0 636.7,588.4 615.0,591.5"/>
<polygon class="n" points="621.1,600.2 643.0,597.0 644.3,638.4 622.6,641.7" fill="#26ab9c"/><path class="e" d="M621.1,600.2 L643.0,597.0 L644.3,638.4 L622.6,641.7"/>
<polygon class="n" points="613.4,549.6 635.4,546.6 636.7,588.4 615.0,591.5" fill="#24a294"/><path class="e" d="M635.4,546.6 L613.4,549.6 L615.0,591.5 L636.7,588.4"/>
<polygon class="k" points="615.9,511.9 611.8,506.7 613.4,549.6 617.4,555.0"/>
<polygon class="t" points="615.9,511.9 638.2,509.1 634.0,503.9 611.8,506.7"/>
<polygon class="n" points="615.9,511.9 638.2,509.1 639.6,552.0 617.4,555.0" fill="#26ab9c"/><path class="e" d="M615.9,511.9 L638.2,509.1 L639.6,552.0 L617.4,555.0"/>
<polygon class="n" points="610.1,463.1 632.6,460.4 634.0,503.9 611.8,506.7" fill="#24a294"/><path class="e" d="M632.6,460.4 L610.1,463.1 L611.8,506.7 L634.0,503.9"/>
<polygon class="k" points="609.4,419.5 608.5,418.5 610.1,463.1 611.1,464.2"/>
<polygon class="t" points="609.4,419.5 632.1,417.0 631.1,416.0 608.5,418.5"/>
<polygon class="n" points="609.4,419.5 632.1,417.0 633.5,461.5 611.1,464.2" fill="#26ab9c"/><path class="e" d="M609.4,419.5 L632.1,417.0 L633.5,461.5 L611.1,464.2"/>
<polygon points="606.7,373.0 629.7,370.7 631.1,416.0 608.5,418.5" fill="#24a495"/>
<polygon points="605.0,326.6 628.2,324.4 629.7,370.7 606.7,373.0" fill="#24a495"/>
<polygon points="603.2,279.2 626.6,277.2 628.2,324.4 605.0,326.6" fill="#24a495"/>
<polygon points="604.7,867.9 625.2,863.9 626.6,900.0 606.3,904.1" fill="#24a495"/>
<polygon points="603.1,831.0 623.8,827.1 625.2,863.9 604.7,867.9" fill="#24a495"/>
<polygon class="k" points="602.0,794.3 601.5,793.5 603.1,831.0 603.6,831.8"/>
<polygon class="t" points="602.0,794.3 622.9,790.5 622.4,789.7 601.5,793.5"/>
<polygon class="n" points="602.0,794.3 622.9,790.5 624.3,827.9 603.6,831.8" fill="#24a596"/><path class="e" d="M602.0,794.3 L622.9,790.5 L624.3,827.9 L603.6,831.8"/>
<polygon class="n" points="599.9,755.2 621.0,751.6 622.4,789.7 601.5,793.5" fill="#229c8e"/><path class="e" d="M621.0,751.6 L599.9,755.2 L601.5,793.5 L622.4,789.7"/>
<polygon class="k" points="601.1,721.2 598.2,716.2 599.9,755.2 602.8,760.3"/>
<polygon class="t" points="601.1,721.2 622.5,717.6 619.5,712.7 598.2,716.2"/>
<polygon class="n" points="601.1,721.2 622.5,717.6 624.0,756.6 602.8,760.3" fill="#25a99a"/><path class="e" d="M601.1,721.2 L622.5,717.6 L624.0,756.6 L602.8,760.3"/>
<polygon class="n" points="596.5,676.5 618.0,673.1 619.5,712.7 598.2,716.2" fill="#229c8e"/><path class="e" d="M618.0,673.1 L596.5,676.5 L598.2,716.2 L619.5,712.7"/>
<polygon class="k" points="600.3,644.5 594.8,636.0 596.5,676.5 602.0,685.3"/>
<polygon class="t" points="600.3,644.5 622.2,641.1 616.5,632.7 594.8,636.0"/>
<polygon class="n" points="600.3,644.5 622.2,641.1 623.7,681.8 602.0,685.3" fill="#26ab9c"/><path class="e" d="M600.3,644.5 L622.2,641.1 L623.7,681.8 L602.0,685.3"/>
<polygon class="n" points="593.0,594.7 615.0,591.5 616.5,632.7 594.8,636.0" fill="#24a294"/><path class="e" d="M615.0,591.5 L593.0,594.7 L594.8,636.0 L616.5,632.7"/>
<polygon class="k" points="596.3,559.6 591.2,552.6 593.0,594.7 598.0,602.1"/>
<polygon class="t" points="596.3,559.6 618.6,556.6 613.4,549.6 591.2,552.6"/>
<polygon class="n" points="596.3,559.6 618.6,556.6 620.1,598.9 598.0,602.1" fill="#26ab9c"/><path class="e" d="M596.3,559.6 L618.6,556.6 L620.1,598.9 L598.0,602.1"/>
<polygon class="n" points="589.4,509.6 611.8,506.7 613.4,549.6 591.2,552.6" fill="#24a294"/><path class="e" d="M611.8,506.7 L589.4,509.6 L591.2,552.6 L613.4,549.6"/>
<polygon class="k" points="590.1,469.0 587.5,465.7 589.4,509.6 591.9,513.0"/>
<polygon class="t" points="590.1,469.0 612.8,466.3 610.1,463.1 587.5,465.7"/>
<polygon class="n" points="590.1,469.0 612.8,466.3 614.4,510.1 591.9,513.0" fill="#26ab9c"/><path class="e" d="M590.1,469.0 L612.8,466.3 L614.4,510.1 L591.9,513.0"/>
<polygon class="n" points="585.6,421.0 608.5,418.5 610.1,463.1 587.5,465.7" fill="#24a394"/><path class="e" d="M608.5,418.5 L585.6,421.0 L587.5,465.7 L610.1,463.1"/>
<polygon points="583.6,375.4 606.7,373.0 608.5,418.5 585.6,421.0" fill="#24a495"/>
<polygon points="581.6,328.7 605.0,326.6 606.7,373.0 583.6,375.4" fill="#24a495"/>
<polygon points="579.6,281.1 603.2,279.2 605.0,326.6 581.6,328.7" fill="#24a495"/>
<polygon points="584.1,871.9 604.7,867.9 606.3,904.1 585.8,908.2" fill="#24a495"/>
<polygon points="582.3,835.0 603.1,831.0 604.7,867.9 584.1,871.9" fill="#24a495"/>
<polygon class="n" points="580.5,797.3 601.5,793.5 603.1,831.0 582.3,835.0" fill="#229d8f"/><path class="e" d="M601.5,793.5 L580.5,797.3 L582.3,835.0 L603.1,831.0"/>
<polygon class="k" points="580.2,761.8 578.6,758.9 580.5,797.3 582.0,800.2"/>
<polygon class="t" points="580.2,761.8 601.5,758.0 599.9,755.2 578.6,758.9"/>
<polygon class="n" points="580.2,761.8 601.5,758.0 603.1,796.4 582.0,800.2" fill="#25a798"/><path class="e" d="M580.2,761.8 L601.5,758.0 L603.1,796.4 L582.0,800.2"/>
<polygon class="n" points="576.7,719.8 598.2,716.2 599.9,755.2 578.6,758.9" fill="#229c8e"/><path class="e" d="M598.2,716.2 L576.7,719.8 L578.6,758.9 L599.9,755.2"/>
<polygon class="k" points="578.7,686.6 574.8,679.9 576.7,719.8 580.6,726.7"/>
<polygon class="t" points="578.7,686.6 600.6,683.1 596.5,676.5 574.8,679.9"/>
<polygon class="n" points="578.7,686.6 600.6,683.1 602.3,723.0 580.6,726.7" fill="#26ab9b"/><path class="e" d="M578.7,686.6 L600.6,683.1 L602.3,723.0 L580.6,726.7"/>
<polygon class="n" points="572.9,639.3 594.8,636.0 596.5,676.5 574.8,679.9" fill="#24a294"/><path class="e" d="M594.8,636.0 L572.9,639.3 L574.8,679.9 L596.5,676.5"/>
<polygon class="k" points="576.6,606.6 570.9,597.9 572.9,639.3 578.5,648.4"/>
<polygon class="t" points="576.6,606.6 598.9,603.4 593.0,594.7 570.9,597.9"/>
<polygon class="n" points="576.6,606.6 598.9,603.4 600.6,645.1 578.5,648.4" fill="#26ab9c"/><path class="e" d="M576.6,606.6 L598.9,603.4 L600.6,645.1 L578.5,648.4"/>
<polygon class="n" points="568.9,555.6 591.2,552.6 593.0,594.7 570.9,597.9" fill="#24a294"/><path class="e" d="M591.2,552.6 L568.9,555.6 L570.9,597.9 L593.0,594.7"/>
<polygon class="k" points="570.6,517.7 566.8,512.5 568.9,555.6 572.6,561.1"/>
<polygon class="t" points="570.6,517.7 593.3,514.8 589.4,509.6 566.8,512.5"/>
<polygon class="n" points="570.6,517.7 593.3,514.8 595.1,558.0 572.6,561.1" fill="#26ab9c"/><path class="e" d="M570.6,517.7 L593.3,514.8 L595.1,558.0 L572.6,561.1"/>
<polygon class="n" points="564.7,468.5 587.5,465.7 589.4,509.6 566.8,512.5" fill="#24a294"/><path class="e" d="M587.5,465.7 L564.7,468.5 L566.8,512.5 L589.4,509.6"/>
<polygon class="k" points="563.4,424.6 562.5,423.6 564.7,468.5 565.5,469.6"/>
<polygon class="t" points="563.4,424.6 586.5,422.1 585.6,421.0 562.5,423.6"/>
<polygon class="n" points="563.4,424.6 586.5,422.1 588.4,466.9 565.5,469.6" fill="#26ab9c"/><path class="e" d="M563.4,424.6 L586.5,422.1 L588.4,466.9 L565.5,469.6"/>
<polygon points="560.3,377.7 583.6,375.4 585.6,421.0 562.5,423.6" fill="#24a495"/>
<polygon points="558.1,330.9 581.6,328.7 583.6,375.4 560.3,377.7" fill="#24a495"/>
<polygon points="555.8,283.1 579.6,281.1 581.6,328.7 558.1,330.9" fill="#24a495"/>
<polygon points="563.2,876.0 584.1,871.9 585.8,908.2 565.2,912.4" fill="#24a495"/>
<polygon points="561.3,838.9 582.3,835.0 584.1,871.9 563.2,876.0" fill="#24a495"/>
<polygon class="k" points="559.6,801.9 559.2,801.1 561.3,838.9 561.6,839.6"/>
<polygon class="t" points="559.6,801.9 580.8,798.0 580.5,797.3 559.2,801.1"/>
<polygon class="n" points="559.6,801.9 580.8,798.0 582.6,835.7 561.6,839.6" fill="#24a596"/><path class="e" d="M559.6,801.9 L580.8,798.0 L582.6,835.7 L561.6,839.6"/>
<polygon class="n" points="557.2,762.7 578.6,758.9 580.5,797.3 559.2,801.1" fill="#229c8e"/><path class="e" d="M578.6,758.9 L557.2,762.7 L559.2,801.1 L580.5,797.3"/>
<polygon class="k" points="557.6,728.1 555.1,723.4 557.2,762.7 559.7,767.5"/>
<polygon class="t" points="557.6,728.1 579.4,724.4 576.7,719.8 555.1,723.4"/>
<polygon class="n" points="557.6,728.1 579.4,724.4 581.2,763.7 559.7,767.5" fill="#25a999"/><path class="e" d="M557.6,728.1 L579.4,724.4 L581.2,763.7 L559.7,767.5"/>
<polygon class="n" points="553.0,683.4 574.8,679.9 576.7,719.8 555.1,723.4" fill="#229c8e"/><path class="e" d="M574.8,679.9 L553.0,683.4 L555.1,723.4 L576.7,719.8"/>
<polygon class="k" points="555.6,650.7 550.8,642.6 553.0,683.4 557.7,691.8"/>
<polygon class="t" points="555.6,650.7 577.8,647.3 572.9,639.3 550.8,642.6"/>
<polygon class="n" points="555.6,650.7 577.8,647.3 579.8,688.3 557.7,691.8" fill="#26ab9c"/><path class="e" d="M555.6,650.7 L577.8,647.3 L579.8,688.3 L557.7,691.8"/>
<polygon class="n" points="548.6,601.1 570.9,597.9 572.9,639.3 550.8,642.6" fill="#24a294"/><path class="e" d="M570.9,597.9 L548.6,601.1 L550.8,642.6 L572.9,639.3"/>
<polygon class="k" points="551.0,565.8 546.3,558.6 548.6,601.1 553.2,608.6"/>
<polygon class="t" points="551.0,565.8 573.7,562.7 568.9,555.6 546.3,558.6"/>
<polygon class="n" points="551.0,565.8 573.7,562.7 575.7,605.3 553.2,608.6" fill="#26ab9c"/><path class="e" d="M551.0,565.8 L573.7,562.7 L575.7,605.3 L553.2,608.6"/>
<polygon class="n" points="544.0,515.4 566.8,512.5 568.9,555.6 546.3,558.6" fill="#24a294"/><path class="e" d="M566.8,512.5 L544.0,515.4 L546.3,558.6 L568.9,555.6"/>
<polygon class="k" points="544.0,474.5 541.6,471.2 544.0,515.4 546.4,518.8"/>
<polygon class="t" points="544.0,474.5 567.1,471.7 564.7,468.5 541.6,471.2"/>
<polygon class="n" points="544.0,474.5 567.1,471.7 569.2,515.9 546.4,518.8" fill="#26ab9c"/><path class="e" d="M544.0,474.5 L567.1,471.7 L569.2,515.9 L546.4,518.8"/>
<polygon class="n" points="539.2,426.1 562.5,423.6 564.7,468.5 541.6,471.2" fill="#24a394"/><path class="e" d="M562.5,423.6 L539.2,426.1 L541.6,471.2 L564.7,468.5"/>
<polygon points="536.8,380.1 560.3,377.7 562.5,423.6 539.2,426.1" fill="#24a495"/>
<polygon points="534.3,333.1 558.1,330.9 560.3,377.7 536.8,380.1" fill="#24a495"/>
<polygon points="531.7,285.1 555.8,283.1 558.1,330.9 534.3,333.1" fill="#24a495"/>
<polygon points="542.2,880.1 563.2,876.0 565.2,912.4 544.4,916.6" fill="#24a495"/>
<polygon points="540.1,842.9 561.3,838.9 563.2,876.0 542.2,880.1" fill="#24a495"/>
<polygon class="n" points="537.8,805.0 559.2,801.1 561.3,838.9 540.1,842.9" fill="#229d8f"/><path class="e" d="M559.2,801.1 L537.8,805.0 L540.1,842.9 L561.3,838.9"/>
<polygon class="k" points="536.9,769.1 535.6,766.4 537.8,805.0 539.2,807.8"/>
<polygon class="t" points="536.9,769.1 558.6,765.3 557.2,762.7 535.6,766.4"/>
<polygon class="n" points="536.9,769.1 558.6,765.3 560.6,803.9 539.2,807.8" fill="#25a797"/><path class="e" d="M536.9,769.1 L558.6,765.3 L560.6,803.9 L539.2,807.8"/>
<polygon class="n" points="533.3,727.0 555.1,723.4 557.2,762.7 535.6,766.4" fill="#229c8e"/><path class="e" d="M555.1,723.4 L533.3,727.0 L535.6,766.4 L557.2,762.7"/>
<polygon class="k" points="534.3,693.2 530.9,686.9 533.3,727.0 536.6,733.5"/>
<polygon class="t" points="534.3,693.2 556.5,689.6 553.0,683.4 530.9,686.9"/>
<polygon class="n" points="534.3,693.2 556.5,689.6 558.6,729.8 536.6,733.5" fill="#25aa9b"/><path class="e" d="M534.3,693.2 L556.5,689.6 L558.6,729.8 L536.6,733.5"/>
<polygon class="n" points="528.5,646.0 550.8,642.6 553.0,683.4 530.9,686.9" fill="#24a294"/><path class="e" d="M550.8,642.6 L528.5,646.0 L530.9,686.9 L553.0,683.4"/>
<polygon class="k" points="531.3,613.2 526.1,604.3 528.5,646.0 533.7,655.3"/>
<polygon class="t" points="531.3,613.2 554.0,609.9 548.6,601.1 526.1,604.3"/>
<polygon class="n" points="531.3,613.2 554.0,609.9 556.2,651.8 533.7,655.3" fill="#26ab9c"/><path class="e" d="M531.3,613.2 L554.0,609.9 L556.2,651.8 L533.7,655.3"/>
<polygon class="n" points="523.6,561.7 546.3,558.6 548.6,601.1 526.1,604.3" fill="#24a294"/><path class="e" d="M546.3,558.6 L523.6,561.7 L526.1,604.3 L548.6,601.1"/>
<polygon class="k" points="524.5,523.6 521.0,518.3 523.6,561.7 527.0,567.3"/>
<polygon class="t" points="524.5,523.6 547.6,520.7 544.0,515.4 521.0,518.3"/>
<polygon class="n" points="524.5,523.6 547.6,520.7 549.9,564.2 527.0,567.3" fill="#26ab9c"/><path class="e" d="M524.5,523.6 L547.6,520.7 L549.9,564.2 L527.0,567.3"/>
<polygon class="n" points="518.4,473.9 541.6,471.2 544.0,515.4 521.0,518.3" fill="#24a294"/><path class="e" d="M541.6,471.2 L518.4,473.9 L521.0,518.3 L544.0,515.4"/>
<polygon class="k" points="516.6,429.8 515.8,428.7 518.4,473.9 519.2,475.1"/>
<polygon class="t" points="516.6,429.8 540.1,427.2 539.2,426.1 515.8,428.7"/>
<polygon class="n" points="516.6,429.8 540.1,427.2 542.5,472.3 519.2,475.1" fill="#26ab9c"/><path class="e" d="M516.6,429.8 L540.1,427.2 L542.5,472.3 L519.2,475.1"/>
<polygon points="513.0,382.5 536.8,380.1 539.2,426.1 515.8,428.7" fill="#24a495"/>
<polygon points="510.3,335.3 534.3,333.1 536.8,380.1 513.0,382.5" fill="#24a495"/>
<polygon points="507.4,287.2 531.7,285.1 534.3,333.1 510.3,335.3" fill="#24a495"/>
<polygon points="521.1,884.2 542.2,880.1 544.4,916.6 523.4,920.8" fill="#24a495"/>
<polygon points="518.7,846.9 540.1,842.9 542.2,880.1 521.1,884.2" fill="#24a495"/>
<polygon class="k" points="516.6,809.6 516.3,808.9 518.7,846.9 519.0,847.6"/>
<polygon class="t" points="516.6,809.6 538.1,805.6 537.8,805.0 516.3,808.9"/>
<polygon points="516.6,809.6 538.1,805.6 540.4,843.6 519.0,847.6" fill="#24a596"/>
<polygon class="n" points="513.8,770.2 535.6,766.4 537.8,805.0 516.3,808.9" fill="#229c8e"/><path class="e" d="M535.6,766.4 L513.8,770.2 L516.3,808.9 L537.8,805.0"/>
<polygon class="k" points="513.4,735.1 511.3,730.7 513.8,770.2 515.9,774.7"/>
<polygon class="t" points="513.4,735.1 535.5,731.4 533.3,727.0 511.3,730.7"/>
<polygon class="n" points="513.4,735.1 535.5,731.4 537.8,770.9 515.9,774.7" fill="#25a899"/><path class="e" d="M513.4,735.1 L535.5,731.4 L537.8,770.9 L515.9,774.7"/>
<polygon class="n" points="508.7,690.5 530.9,686.9 533.3,727.0 511.3,730.7" fill="#229c8e"/><path class="e" d="M530.9,686.9 L508.7,690.5 L511.3,730.7 L533.3,727.0"/>
<polygon class="k" points="510.1,657.0 506.0,649.4 508.7,690.5 512.7,698.4"/>
<polygon class="t" points="510.1,657.0 532.8,653.6 528.5,646.0 506.0,649.4"/>
<polygon class="n" points="510.1,657.0 532.8,653.6 535.2,694.8 512.7,698.4" fill="#26ab9c"/><path class="e" d="M510.1,657.0 L532.8,653.6 L535.2,694.8 L512.7,698.4"/>
<polygon class="n" points="503.4,607.5 526.1,604.3 528.5,646.0 506.0,649.4" fill="#24a294"/><path class="e" d="M526.1,604.3 L503.4,607.5 L506.0,649.4 L528.5,646.0"/>
<polygon class="k" points="504.9,572.1 500.6,564.8 503.4,607.5 507.6,615.2"/>
<polygon class="t" points="504.9,572.1 528.0,568.9 523.6,561.7 500.6,564.8"/>
<polygon class="n" points="504.9,572.1 528.0,568.9 530.5,611.8 507.6,615.2" fill="#26ab9c"/><path class="e" d="M504.9,572.1 L528.0,568.9 L530.5,611.8 L507.6,615.2"/>
<polygon class="n" points="497.8,521.2 521.0,518.3 523.6,561.7 500.6,564.8" fill="#24a294"/><path class="e" d="M521.0,518.3 L497.8,521.2 L500.6,564.8 L523.6,561.7"/>
<polygon class="k" points="497.1,480.1 495.0,476.7 497.8,521.2 500.0,524.7"/>
<polygon class="t" points="497.1,480.1 520.7,477.2 518.4,473.9 495.0,476.7"/>
<polygon class="n" points="497.1,480.1 520.7,477.2 523.3,521.7 500.0,524.7" fill="#26ab9c"/><path class="e" d="M497.1,480.1 L520.7,477.2 L523.3,521.7 L500.0,524.7"/>
<polygon class="n" points="492.1,431.3 515.8,428.7 518.4,473.9 495.0,476.7" fill="#24a394"/><path class="e" d="M515.8,428.7 L492.1,431.3 L495.0,476.7 L518.4,473.9"/>
<polygon points="489.1,384.9 513.0,382.5 515.8,428.7 492.1,431.3" fill="#24a495"/>
<polygon points="486.1,337.6 510.3,335.3 513.0,382.5 489.1,384.9" fill="#24a495"/>
<polygon points="483.0,289.2 507.4,287.2 510.3,335.3 486.1,337.6" fill="#24a495"/>
<polygon points="499.8,888.4 521.1,884.2 523.4,920.8 502.3,925.1" fill="#24a495"/>
<polygon points="497.2,851.0 518.7,846.9 521.1,884.2 499.8,888.4" fill="#24a495"/>
<polygon points="494.5,812.9 516.3,808.9 518.7,846.9 497.2,851.0" fill="#229d8f"/>
<polygon class="k" points="492.9,776.5 491.8,774.0 494.5,812.9 495.6,815.4"/>
<polygon class="t" points="492.9,776.5 515.0,772.7 513.8,770.2 491.8,774.0"/>
<polygon class="n" points="492.9,776.5 515.0,772.7 517.4,811.5 495.6,815.4" fill="#25a697"/><path class="e" d="M492.9,776.5 L515.0,772.7 L517.4,811.5 L495.6,815.4"/>
<polygon class="n" points="489.1,734.4 511.3,730.7 513.8,770.2 491.8,774.0" fill="#229c8e"/><path class="e" d="M511.3,730.7 L489.1,734.4 L491.8,774.0 L513.8,770.2"/>
<polygon class="k" points="489.1,699.9 486.3,694.0 489.1,734.4 491.9,740.5"/>
<polygon class="t" points="489.1,699.9 511.7,696.3 508.7,690.5 486.3,694.0"/>
<polygon class="n" points="489.1,699.9 511.7,696.3 514.2,736.8 491.9,740.5" fill="#25aa9a"/><path class="e" d="M489.1,699.9 L511.7,696.3 L514.2,736.8 L491.9,740.5"/>
<polygon class="n" points="483.4,652.8 506.0,649.4 508.7,690.5 486.3,694.0" fill="#24a294"/><path class="e" d="M506.0,649.4 L483.4,652.8 L486.3,694.0 L508.7,690.5"/>
<polygon class="k" points="485.1,619.6 480.5,610.8 483.4,652.8 488.0,662.0"/>
<polygon class="t" points="485.1,619.6 508.2,616.3 503.4,607.5 480.5,610.8"/>
<polygon class="n" points="485.1,619.6 508.2,616.3 510.9,658.5 488.0,662.0" fill="#26ab9c"/><path class="e" d="M485.1,619.6 L508.2,616.3 L510.9,658.5 L488.0,662.0"/>
<polygon class="n" points="477.5,567.9 500.6,564.8 503.4,607.5 480.5,610.8" fill="#24a294"/><path class="e" d="M500.6,564.8 L477.5,567.9 L480.5,610.8 L503.4,607.5"/>
<polygon class="k" points="477.6,529.6 474.4,524.2 477.5,567.9 480.6,573.6"/>
<polygon class="t" points="477.6,529.6 501.2,526.6 497.8,521.2 474.4,524.2"/>
<polygon class="n" points="477.6,529.6 501.2,526.6 503.9,570.5 480.6,573.6" fill="#26ab9c"/><path class="e" d="M477.6,529.6 L501.2,526.6 L503.9,570.5 L480.6,573.6"/>
<polygon class="n" points="471.3,479.5 495.0,476.7 497.8,521.2 474.4,524.2" fill="#24a294"/><path class="e" d="M495.0,476.7 L471.3,479.5 L474.4,524.2 L497.8,521.2"/>
<polygon class="k" points="468.9,435.0 468.2,433.9 471.3,479.5 472.1,480.7"/>
<polygon class="t" points="468.9,435.0 492.8,432.4 492.1,431.3 468.2,433.9"/>
<polygon class="n" points="468.9,435.0 492.8,432.4 495.7,477.9 472.1,480.7" fill="#26ab9c"/><path class="e" d="M468.9,435.0 L492.8,432.4 L495.7,477.9 L472.1,480.7"/>
<polygon points="464.9,387.4 489.1,384.9 492.1,431.3 468.2,433.9" fill="#24a495"/>
<polygon points="461.6,339.8 486.1,337.6 489.1,384.9 464.9,387.4" fill="#24a495"/>
<polygon points="458.2,291.3 483.0,289.2 486.1,337.6 461.6,339.8" fill="#24a495"/>
<polygon points="478.3,892.6 499.8,888.4 502.3,925.1 481.1,929.4" fill="#24a495"/>
<polygon points="475.5,855.1 497.2,851.0 499.8,888.4 478.3,892.6" fill="#24a495"/>
<polygon class="k" points="472.8,817.4 472.6,816.8 475.5,855.1 475.7,855.7"/>
<polygon class="t" points="472.8,817.4 494.8,813.4 494.5,812.9 472.6,816.8"/>
<polygon points="472.8,817.4 494.8,813.4 497.4,851.6 475.7,855.7" fill="#24a595"/>
<polygon class="n" points="469.7,777.9 491.8,774.0 494.5,812.9 472.6,816.8" fill="#229c8e"/><path class="e" d="M491.8,774.0 L469.7,777.9 L472.6,816.8 L494.5,812.9"/>
<polygon class="k" points="468.6,742.3 466.7,738.1 469.7,777.9 471.5,782.2"/>
<polygon class="t" points="468.6,742.3 491.0,738.6 489.1,734.4 466.7,738.1"/>
<polygon class="n" points="468.6,742.3 491.0,738.6 493.8,778.3 471.5,782.2" fill="#25a899"/><path class="e" d="M468.6,742.3 L491.0,738.6 L493.8,778.3 L471.5,782.2"/>
<polygon class="n" points="463.7,697.6 486.3,694.0 489.1,734.4 466.7,738.1" fill="#229c8e"/><path class="e" d="M486.3,694.0 L463.7,697.6 L466.7,738.1 L489.1,734.4"/>
<polygon class="k" points="464.1,663.6 460.6,656.3 463.7,697.6 467.1,705.2"/>
<polygon class="t" points="464.1,663.6 487.1,660.1 483.4,652.8 460.6,656.3"/>
<polygon class="n" points="464.1,663.6 487.1,660.1 489.9,701.6 467.1,705.2" fill="#26ab9c"/><path class="e" d="M464.1,663.6 L487.1,660.1 L489.9,701.6 L467.1,705.2"/>
<polygon class="n" points="457.4,614.1 480.5,610.8 483.4,652.8 460.6,656.3" fill="#24a294"/><path class="e" d="M480.5,610.8 L457.4,614.1 L460.6,656.3 L483.4,652.8"/>
<polygon class="k" points="458.0,578.5 454.2,571.1 457.4,614.1 461.2,621.9"/>
<polygon class="t" points="458.0,578.5 481.6,575.3 477.5,567.9 454.2,571.1"/>
<polygon class="n" points="458.0,578.5 481.6,575.3 484.5,618.5 461.2,621.9" fill="#26ab9c"/><path class="e" d="M458.0,578.5 L481.6,575.3 L484.5,618.5 L461.2,621.9"/>
<polygon class="n" points="450.9,527.2 474.4,524.2 477.5,567.9 454.2,571.1" fill="#24a294"/><path class="e" d="M474.4,524.2 L450.9,527.2 L454.2,571.1 L477.5,567.9"/>
<polygon class="k" points="449.5,485.7 447.5,482.4 450.9,527.2 452.8,530.7"/>
<polygon class="t" points="449.5,485.7 473.4,482.9 471.3,479.5 447.5,482.4"/>
<polygon class="n" points="449.5,485.7 473.4,482.9 476.5,527.7 452.8,530.7" fill="#26ab9c"/><path class="e" d="M449.5,485.7 L473.4,482.9 L476.5,527.7 L452.8,530.7"/>
<polygon class="n" points="444.1,436.6 468.2,433.9 471.3,479.5 447.5,482.4" fill="#24a394"/><path class="e" d="M468.2,433.9 L444.1,436.6 L447.5,482.4 L471.3,479.5"/>
<polygon points="440.6,389.9 464.9,387.4 468.2,433.9 444.1,436.6" fill="#24a495"/>
<polygon points="437.0,342.1 461.6,339.8 464.9,387.4 440.6,389.9" fill="#24a495"/>
<polygon points="433.3,293.4 458.2,291.3 461.6,339.8 437.0,342.1" fill="#24a495"/>
<polygon points="456.6,896.8 478.3,892.6 481.1,929.4 459.6,933.7" fill="#24a495"/>
<polygon points="453.6,859.2 475.5,855.1 478.3,892.6 456.6,896.8" fill="#24a495"/>
<polygon points="450.5,820.8 472.6,816.8 475.5,855.1 453.6,859.2" fill="#229d8f"/>
<polygon class="k" points="448.3,784.2 447.4,781.8 450.5,820.8 451.5,823.4"/>
<polygon class="t" points="448.3,784.2 470.7,780.3 469.7,777.9 447.4,781.8"/>
<polygon class="n" points="448.3,784.2 470.7,780.3 473.6,819.3 451.5,823.4" fill="#25a697"/><path class="e" d="M448.3,784.2 L470.7,780.3 L473.6,819.3 L451.5,823.4"/>
<polygon class="n" points="444.1,741.9 466.7,738.1 469.7,777.9 447.4,781.8" fill="#229c8e"/><path class="e" d="M466.7,738.1 L444.1,741.9 L447.4,781.8 L469.7,777.9"/>
<polygon class="k" points="443.4,707.1 440.9,701.2 444.1,741.9 446.7,748.0"/>
<polygon class="t" points="443.4,707.1 466.3,703.4 463.7,697.6 440.9,701.2"/>
<polygon class="n" points="443.4,707.1 466.3,703.4 469.4,744.1 446.7,748.0" fill="#25aa9a"/><path class="e" d="M443.4,707.1 L466.3,703.4 L469.4,744.1 L446.7,748.0"/>
<polygon class="n" points="437.5,659.8 460.6,656.3 463.7,697.6 440.9,701.2" fill="#24a294"/><path class="e" d="M460.6,656.3 L437.5,659.8 L440.9,701.2 L463.7,697.6"/>
<polygon class="k" points="438.2,626.2 434.1,617.4 437.5,659.8 441.6,668.9"/>
<polygon class="t" points="438.2,626.2 461.7,622.8 457.4,614.1 434.1,617.4"/>
<polygon class="n" points="438.2,626.2 461.7,622.8 464.9,665.3 441.6,668.9" fill="#26ab9c"/><path class="e" d="M438.2,626.2 L461.7,622.8 L464.9,665.3 L441.6,668.9"/>
<polygon class="n" points="430.6,574.3 454.2,571.1 457.4,614.1 434.1,617.4" fill="#24a294"/><path class="e" d="M454.2,571.1 L430.6,574.3 L434.1,617.4 L457.4,614.1"/>
<polygon class="k" points="429.9,535.7 427.1,530.2 430.6,574.3 433.5,580.1"/>
<polygon class="t" points="429.9,535.7 453.9,532.7 450.9,527.2 427.1,530.2"/>
<polygon class="n" points="429.9,535.7 453.9,532.7 457.2,576.8 433.5,580.1" fill="#26ab9c"/><path class="e" d="M429.9,535.7 L453.9,532.7 L457.2,576.8 L433.5,580.1"/>
<polygon class="n" points="423.4,485.2 447.5,482.4 450.9,527.2 427.1,530.2" fill="#24a294"/><path class="e" d="M447.5,482.4 L423.4,485.2 L427.1,530.2 L450.9,527.2"/>
<polygon class="k" points="420.4,440.4 419.7,439.3 423.4,485.2 424.1,486.4"/>
<polygon class="t" points="420.4,440.4 444.7,437.7 444.1,436.6 419.7,439.3"/>
<polygon class="n" points="420.4,440.4 444.7,437.7 448.2,483.5 424.1,486.4" fill="#26ab9c"/><path class="e" d="M420.4,440.4 L444.7,437.7 L448.2,483.5 L424.1,486.4"/>
<polygon points="415.9,392.4 440.6,389.9 444.1,436.6 419.7,439.3" fill="#24a495"/>
<polygon points="412.1,344.4 437.0,342.1 440.6,389.9 415.9,392.4" fill="#24a495"/>
<polygon points="408.1,295.5 433.3,293.4 437.0,342.1 412.1,344.4" fill="#24a495"/>
<polygon points="434.8,901.1 456.6,896.8 459.6,933.7 438.0,938.1" fill="#24a495"/>
<polygon points="431.5,863.4 453.6,859.2 456.6,896.8 434.8,901.1" fill="#24a495"/>
<polygon class="k" points="428.4,825.4 428.2,824.9 431.5,863.4 431.7,863.9"/>
<polygon class="t" points="428.4,825.4 450.7,821.4 450.5,820.8 428.2,824.9"/>
<polygon points="428.4,825.4 450.7,821.4 453.8,859.8 431.7,863.9" fill="#24a595"/>
<polygon class="n" points="424.8,785.7 447.4,781.8 450.5,820.8 428.2,824.9" fill="#229c8e"/><path class="e" d="M447.4,781.8 L424.8,785.7 L428.2,824.9 L450.5,820.8"/>
<polygon class="k" points="423.0,749.9 421.4,745.7 424.8,785.7 426.5,790.0"/>
<polygon class="t" points="423.0,749.9 445.9,746.1 444.1,741.9 421.4,745.7"/>
<polygon class="n" points="423.0,749.9 445.9,746.1 449.1,786.1 426.5,790.0" fill="#25a899"/><path class="e" d="M423.0,749.9 L445.9,746.1 L449.1,786.1 L426.5,790.0"/>
<polygon class="n" points="417.9,704.9 440.9,701.2 444.1,741.9 421.4,745.7" fill="#229c8e"/><path class="e" d="M440.9,701.2 L417.9,704.9 L421.4,745.7 L444.1,741.9"/>
<polygon class="k" points="417.4,670.7 414.3,663.3 417.9,704.9 421.0,712.6"/>
<polygon class="t" points="417.4,670.7 440.8,667.1 437.5,659.8 414.3,663.3"/>
<polygon class="n" points="417.4,670.7 440.8,667.1 444.2,708.9 421.0,712.6" fill="#26ab9c"/><path class="e" d="M417.4,670.7 L440.8,667.1 L444.2,708.9 L421.0,712.6"/>
<polygon class="n" points="410.6,620.8 434.1,617.4 437.5,659.8 414.3,663.3" fill="#24a294"/><path class="e" d="M434.1,617.4 L410.6,620.8 L414.3,663.3 L437.5,659.8"/>
<polygon class="k" points="410.3,585.0 406.9,577.5 410.6,620.8 414.1,628.7"/>
<polygon class="t" points="410.3,585.0 434.3,581.8 430.6,574.3 406.9,577.5"/>
<polygon class="n" points="410.3,585.0 434.3,581.8 437.8,625.3 414.1,628.7" fill="#26ab9c"/><path class="e" d="M410.3,585.0 L434.3,581.8 L437.8,625.3 L414.1,628.7"/>
<polygon class="n" points="403.1,533.3 427.1,530.2 430.6,574.3 406.9,577.5" fill="#24a294"/><path class="e" d="M427.1,530.2 L403.1,533.3 L406.9,577.5 L430.6,574.3"/>
<polygon class="k" points="400.9,491.5 399.2,488.1 403.1,533.3 404.8,536.9"/>
<polygon class="t" points="400.9,491.5 425.3,488.6 423.4,485.2 399.2,488.1"/>
<polygon class="n" points="400.9,491.5 425.3,488.6 428.9,533.8 404.8,536.9" fill="#26ab9c"/><path class="e" d="M400.9,491.5 L425.3,488.6 L428.9,533.8 L404.8,536.9"/>
<polygon class="n" points="395.2,442.0 419.7,439.3 423.4,485.2 399.2,488.1" fill="#24a394"/><path class="e" d="M419.7,439.3 L395.2,442.0 L399.2,488.1 L423.4,485.2"/>
<polygon points="391.1,394.9 415.9,392.4 419.7,439.3 395.2,442.0" fill="#24a495"/>
<polygon points="387.0,346.8 412.1,344.4 415.9,392.4 391.1,394.9" fill="#24a495"/>
<polygon points="382.7,297.6 408.1,295.5 412.1,344.4 387.0,346.8" fill="#24a495"/>
<polygon points="412.8,905.4 434.8,901.1 438.0,938.1 416.2,942.5" fill="#24a495"/>
<polygon points="409.3,867.5 431.5,863.4 434.8,901.1 412.8,905.4" fill="#24a495"/>
<polygon points="405.8,829.0 428.2,824.9 431.5,863.4 409.3,867.5" fill="#229d8f"/>
<polygon class="k" points="403.0,792.1 402.1,789.6 405.8,829.0 406.6,831.5"/>
<polygon class="t" points="403.0,792.1 425.8,788.1 424.8,785.7 402.1,789.6"/>
<polygon class="n" points="403.0,792.1 425.8,788.1 429.1,827.4 406.6,831.5" fill="#24a697"/><path class="e" d="M403.0,792.1 L425.8,788.1 L429.1,827.4 L406.6,831.5"/>
<polygon class="n" points="398.4,749.5 421.4,745.7 424.8,785.7 402.1,789.6" fill="#229c8e"/><path class="e" d="M421.4,745.7 L398.4,749.5 L402.1,789.6 L424.8,785.7"/>
<polygon class="k" points="396.9,714.5 394.7,708.6 398.4,749.5 400.7,755.6"/>
<polygon class="t" points="396.9,714.5 420.3,710.8 417.9,704.9 394.7,708.6"/>
<polygon class="n" points="396.9,714.5 420.3,710.8 423.8,751.8 400.7,755.6" fill="#25aa9a"/><path class="e" d="M396.9,714.5 L420.3,710.8 L423.8,751.8 L400.7,755.6"/>
<polygon class="n" points="390.8,666.8 414.3,663.3 417.9,704.9 394.7,708.6" fill="#24a294"/><path class="e" d="M414.3,663.3 L390.8,666.8 L394.7,708.6 L417.9,704.9"/>
<polygon class="k" points="390.5,633.1 386.9,624.2 390.8,666.8 394.5,676.1"/>
<polygon class="t" points="390.5,633.1 414.5,629.6 410.6,620.8 386.9,624.2"/>
<polygon class="n" points="390.5,633.1 414.5,629.6 418.1,672.5 394.5,676.1" fill="#26ab9c"/><path class="e" d="M390.5,633.1 L414.5,629.6 L418.1,672.5 L394.5,676.1"/>
<polygon class="n" points="382.9,580.7 406.9,577.5 410.6,620.8 386.9,624.2" fill="#24a294"/><path class="e" d="M406.9,577.5 L382.9,580.7 L386.9,624.2 L410.6,620.8"/>
<polygon class="k" points="381.3,542.0 378.8,536.3 382.9,580.7 385.4,586.6"/>
<polygon class="t" points="381.3,542.0 405.7,538.8 403.1,533.3 378.8,536.3"/>
<polygon class="n" points="381.3,542.0 405.7,538.8 409.5,583.3 385.4,586.6" fill="#26ab9c"/><path class="e" d="M381.3,542.0 L405.7,538.8 L409.5,583.3 L385.4,586.6"/>
<polygon class="n" points="374.7,491.0 399.2,488.1 403.1,533.3 378.8,536.3" fill="#24a294"/><path class="e" d="M399.2,488.1 L374.7,491.0 L378.8,536.3 L403.1,533.3"/>
<polygon class="k" points="371.0,445.9 370.4,444.7 374.7,491.0 375.2,492.2"/>
<polygon class="t" points="371.0,445.9 395.8,443.1 395.2,442.0 370.4,444.7"/>
<polygon class="n" points="371.0,445.9 395.8,443.1 399.8,489.3 375.2,492.2" fill="#26ab9c"/><path class="e" d="M371.0,445.9 L395.8,443.1 L399.8,489.3 L375.2,492.2"/>
<polygon points="366.1,397.4 391.1,394.9 395.2,442.0 370.4,444.7" fill="#24a495"/>
<polygon points="361.6,349.1 387.0,346.8 391.1,394.9 366.1,397.4" fill="#24a495"/>
<polygon points="357.1,299.7 382.7,297.6 387.0,346.8 361.6,349.1" fill="#24a495"/>
<polygon points="390.6,909.7 412.8,905.4 416.2,942.5 394.2,947.0" fill="#24a495"/>
<polygon points="386.9,871.8 409.3,867.5 412.8,905.4 390.6,909.7" fill="#24a495"/>
<polygon class="k" points="383.3,833.6 383.1,833.1 386.9,871.8 387.1,872.3"/>
<polygon class="t" points="383.3,833.6 405.9,829.5 405.8,829.0 383.1,833.1"/>
<polygon points="383.3,833.6 405.9,829.5 409.5,868.1 387.1,872.3" fill="#24a495"/>
<polygon class="n" points="379.2,793.6 402.1,789.6 405.8,829.0 383.1,833.1" fill="#229c8e"/><path class="e" d="M402.1,789.6 L379.2,793.6 L383.1,833.1 L405.8,829.0"/>
<polygon class="k" points="376.8,757.6 375.3,753.3 379.2,793.6 380.7,798.0"/>
<polygon class="t" points="376.8,757.6 400.0,753.7 398.4,749.5 375.3,753.3"/>
<polygon class="n" points="376.8,757.6 400.0,753.7 403.7,794.0 380.7,798.0" fill="#25a899"/><path class="e" d="M376.8,757.6 L400.0,753.7 L403.7,794.0 L380.7,798.0"/>
<polygon class="n" points="371.3,712.3 394.7,708.6 398.4,749.5 375.3,753.3" fill="#229c8e"/><path class="e" d="M394.7,708.6 L371.3,712.3 L375.3,753.3 L398.4,749.5"/>
<polygon class="k" points="369.9,677.9 367.2,670.4 371.3,712.3 374.0,720.1"/>
<polygon class="t" points="369.9,677.9 393.8,674.3 390.8,666.8 367.2,670.4"/>
<polygon class="n" points="369.9,677.9 393.8,674.3 397.6,716.3 374.0,720.1" fill="#26ab9c"/><path class="e" d="M369.9,677.9 L393.8,674.3 L397.6,716.3 L374.0,720.1"/>
<polygon class="n" points="363.0,627.6 386.9,624.2 390.8,666.8 367.2,670.4" fill="#24a294"/><path class="e" d="M386.9,624.2 L363.0,627.6 L367.2,670.4 L390.8,666.8"/>
<polygon class="k" points="361.8,591.7 358.8,584.0 363.0,627.6 366.0,635.7"/>
<polygon class="t" points="361.8,591.7 386.2,588.3 382.9,580.7 358.8,584.0"/>
<polygon class="n" points="361.8,591.7 386.2,588.3 390.2,632.2 366.0,635.7" fill="#26ab9c"/><path class="e" d="M361.8,591.7 L386.2,588.3 L390.2,632.2 L366.0,635.7"/>
<polygon class="n" points="354.4,539.4 378.8,536.3 382.9,580.7 358.8,584.0" fill="#24a294"/><path class="e" d="M378.8,536.3 L354.4,539.4 L358.8,584.0 L382.9,580.7"/>
<polygon class="k" points="351.5,497.4 350.0,493.9 354.4,539.4 355.9,543.1"/>
<polygon class="t" points="351.5,497.4 376.3,494.5 374.7,491.0 350.0,493.9"/>
<polygon class="n" points="351.5,497.4 376.3,494.5 380.5,540.0 355.9,543.1" fill="#26ab9c"/><path class="e" d="M351.5,497.4 L376.3,494.5 L380.5,540.0 L355.9,543.1"/>
<polygon class="n" points="345.4,447.5 370.4,444.7 374.7,491.0 350.0,493.9" fill="#24a394"/><path class="e" d="M370.4,444.7 L345.4,447.5 L350.0,493.9 L374.7,491.0"/>
<polygon points="340.8,400.0 366.1,397.4 370.4,444.7 345.4,447.5" fill="#24a495"/>
<polygon points="336.0,351.5 361.6,349.1 366.1,397.4 340.8,400.0" fill="#24a495"/>
<polygon points="331.2,301.9 357.1,299.7 361.6,349.1 336.0,351.5" fill="#24a495"/>
<polygon points="368.2,914.1 390.6,909.7 394.2,947.0 372.1,951.5" fill="#24a495"/>
<polygon points="364.3,876.0 386.9,871.8 390.6,909.7 368.2,914.1" fill="#24a495"/>
<polygon points="360.3,837.2 383.1,833.1 386.9,871.8 364.3,876.0" fill="#229d8f"/>
<polygon class="k" points="356.9,800.1 356.2,797.6 360.3,837.2 361.0,839.7"/>
<polygon class="t" points="356.9,800.1 380.1,796.0 379.2,793.6 356.2,797.6"/>
<polygon class="n" points="356.9,800.1 380.1,796.0 383.9,835.6 361.0,839.7" fill="#24a697"/><path class="e" d="M356.9,800.1 L380.1,796.0 L383.9,835.6 L361.0,839.7"/>
<polygon class="n" points="352.0,757.2 375.3,753.3 379.2,793.6 356.2,797.6" fill="#229c8e"/><path class="e" d="M375.3,753.3 L352.0,757.2 L356.2,797.6 L379.2,793.6"/>
<polygon class="k" points="349.7,722.0 347.7,716.0 352.0,757.2 353.9,763.4"/>
<polygon class="t" points="349.7,722.0 373.4,718.2 371.3,712.3 347.7,716.0"/>
<polygon class="n" points="349.7,722.0 373.4,718.2 377.4,759.5 353.9,763.4" fill="#25aa9a"/><path class="e" d="M349.7,722.0 L373.4,718.2 L377.4,759.5 L353.9,763.4"/>
<polygon class="n" points="343.4,674.0 367.2,670.4 371.3,712.3 347.7,716.0" fill="#24a294"/><path class="e" d="M367.2,670.4 L343.4,674.0 L347.7,716.0 L371.3,712.3"/>
<polygon class="k" points="342.0,640.1 338.9,631.1 343.4,674.0 346.5,683.4"/>
<polygon class="t" points="342.0,640.1 366.4,636.6 363.0,627.6 338.9,631.1"/>
<polygon class="n" points="342.0,640.1 366.4,636.6 370.6,679.7 346.5,683.4" fill="#26ab9c"/><path class="e" d="M342.0,640.1 L366.4,636.6 L370.6,679.7 L346.5,683.4"/>
<polygon class="n" points="334.4,587.3 358.8,584.0 363.0,627.6 338.9,631.1" fill="#24a294"/><path class="e" d="M358.8,584.0 L334.4,587.3 L338.9,631.1 L363.0,627.6"/>
<polygon class="k" points="331.9,548.3 329.8,542.6 334.4,587.3 336.5,593.3"/>
<polygon class="t" points="331.9,548.3 356.7,545.1 354.4,539.4 329.8,542.6"/>
<polygon class="n" points="331.9,548.3 356.7,545.1 361.1,589.9 336.5,593.3" fill="#26ab9c"/><path class="e" d="M331.9,548.3 L356.7,545.1 L361.1,589.9 L336.5,593.3"/>
<polygon class="n" points="325.0,496.9 350.0,493.9 354.4,539.4 329.8,542.6" fill="#24a294"/><path class="e" d="M350.0,493.9 L325.0,496.9 L329.8,542.6 L354.4,539.4"/>
<polygon class="k" points="320.7,451.4 320.2,450.2 325.0,496.9 325.5,498.1"/>
<polygon class="t" points="320.7,451.4 345.9,448.6 345.4,447.5 320.2,450.2"/>
<polygon class="n" points="320.7,451.4 345.9,448.6 350.5,495.2 325.5,498.1" fill="#26ab9c"/><path class="e" d="M320.7,451.4 L345.9,448.6 L350.5,495.2 L325.5,498.1"/>
<polygon points="315.3,402.6 340.8,400.0 345.4,447.5 320.2,450.2" fill="#24a495"/>
<polygon points="310.2,353.9 336.0,351.5 340.8,400.0 315.3,402.6" fill="#24a495"/>
<polygon points="305.1,304.1 331.2,301.9 336.0,351.5 310.2,353.9" fill="#24a495"/>
<polygon points="345.7,918.5 368.2,914.1 372.1,951.5 349.8,956.0" fill="#24a495"/>
<polygon points="341.5,880.3 364.3,876.0 368.2,914.1 345.7,918.5" fill="#24a495"/>
<polygon class="k" points="337.4,841.9 337.2,841.4 341.5,880.3 341.6,880.8"/>
<polygon class="t" points="337.4,841.9 360.4,837.7 360.3,837.2 337.2,841.4"/>
<polygon points="337.4,841.9 360.4,837.7 364.4,876.5 341.6,880.8" fill="#24a495"/>
<polygon class="n" points="332.9,801.7 356.2,797.6 360.3,837.2 337.2,841.4" fill="#229c8e"/><path class="e" d="M356.2,797.6 L332.9,801.7 L337.2,841.4 L360.3,837.2"/>
<polygon class="k" points="329.7,765.4 328.4,761.1 332.9,801.7 334.1,806.0"/>
<polygon class="t" points="329.7,765.4 353.3,761.4 352.0,757.2 328.4,761.1"/>
<polygon class="n" points="329.7,765.4 353.3,761.4 357.5,802.0 334.1,806.0" fill="#25a899"/><path class="e" d="M329.7,765.4 L353.3,761.4 L357.5,802.0 L334.1,806.0"/>
<polygon class="n" points="323.9,719.8 347.7,716.0 352.0,757.2 328.4,761.1" fill="#229c8e"/><path class="e" d="M347.7,716.0 L323.9,719.8 L328.4,761.1 L352.0,757.2"/>
<polygon class="k" points="321.6,685.1 319.3,677.6 323.9,719.8 326.2,727.6"/>
<polygon class="t" points="321.6,685.1 345.9,681.4 343.4,674.0 319.3,677.6"/>
<polygon class="n" points="321.6,685.1 345.9,681.4 350.2,723.7 326.2,727.6" fill="#26ab9c"/><path class="e" d="M321.6,685.1 L345.9,681.4 L350.2,723.7 L326.2,727.6"/>
<polygon class="n" points="314.6,634.6 338.9,631.1 343.4,674.0 319.3,677.6" fill="#24a294"/><path class="e" d="M338.9,631.1 L314.6,634.6 L319.3,677.6 L343.4,674.0"/>
<polygon class="k" points="312.3,598.3 309.8,590.6 314.6,634.6 317.1,642.6"/>
<polygon class="t" points="312.3,598.3 337.1,594.9 334.4,587.3 309.8,590.6"/>
<polygon class="n" points="312.3,598.3 337.1,594.9 341.7,639.0 317.1,642.6" fill="#26ab9c"/><path class="e" d="M312.3,598.3 L337.1,594.9 L341.7,639.0 L317.1,642.6"/>
<polygon class="n" points="304.9,545.7 329.8,542.6 334.4,587.3 309.8,590.6" fill="#24a294"/><path class="e" d="M329.8,542.6 L304.9,545.7 L309.8,590.6 L334.4,587.3"/>
<polygon class="k" points="301.1,503.4 299.9,499.9 304.9,545.7 306.1,549.4"/>
<polygon class="t" points="301.1,503.4 326.4,500.4 325.0,496.9 299.9,499.9"/>
<polygon class="n" points="301.1,503.4 326.4,500.4 331.1,546.2 306.1,549.4" fill="#26ab9c"/><path class="e" d="M301.1,503.4 L326.4,500.4 L331.1,546.2 L306.1,549.4"/>
<polygon class="n" points="294.7,453.0 320.2,450.2 325.0,496.9 299.9,499.9" fill="#24a394"/><path class="e" d="M320.2,450.2 L294.7,453.0 L299.9,499.9 L325.0,496.9"/>
<polygon points="289.5,405.2 315.3,402.6 320.2,450.2 294.7,453.0" fill="#24a495"/>
<polygon points="284.2,356.3 310.2,353.9 315.3,402.6 289.5,405.2" fill="#24a495"/>
<polygon points="278.7,306.3 305.1,304.1 310.2,353.9 284.2,356.3" fill="#24a495"/>
<polygon points="322.9,923.0 345.7,918.5 349.8,956.0 327.3,960.5" fill="#24a495"/>
<polygon points="318.5,884.7 341.5,880.3 345.7,918.5 322.9,923.0" fill="#24a495"/>
<polygon points="314.0,845.6 337.2,841.4 341.5,880.3 318.5,884.7" fill="#229d8f"/>
<polygon class="k" points="310.0,808.1 309.4,805.7 314.0,845.6 314.6,848.0"/>
<polygon class="t" points="310.0,808.1 333.5,804.0 332.9,801.7 309.4,805.7"/>
<polygon class="n" points="310.0,808.1 333.5,804.0 337.9,843.8 314.6,848.0" fill="#24a697"/><path class="e" d="M310.0,808.1 L333.5,804.0 L337.9,843.8 L314.6,848.0"/>
<polygon class="n" points="304.7,765.1 328.4,761.1 332.9,801.7 309.4,805.7" fill="#229c8e"/><path class="e" d="M328.4,761.1 L304.7,765.1 L309.4,805.7 L332.9,801.7"/>
<polygon class="k" points="301.5,729.3 299.9,723.6 304.7,765.1 306.3,771.0"/>
<polygon class="t" points="301.5,729.3 325.6,725.5 323.9,719.8 299.9,723.6"/>
<polygon class="n" points="301.5,729.3 325.6,725.5 330.1,767.0 306.3,771.0" fill="#25a99a"/><path class="e" d="M301.5,729.3 L325.6,725.5 L330.1,767.0 L306.3,771.0"/>
<polygon class="n" points="295.0,681.3 319.3,677.6 323.9,719.8 299.9,723.6" fill="#24a294"/><path class="e" d="M319.3,677.6 L295.0,681.3 L299.9,723.6 L323.9,719.8"/>
<polygon class="k" points="292.5,646.7 290.1,638.1 295.0,681.3 297.5,690.2"/>
<polygon class="t" points="292.5,646.7 317.3,643.1 314.6,634.6 290.1,638.1"/>
<polygon class="n" points="292.5,646.7 317.3,643.1 322.0,686.5 297.5,690.2" fill="#26ab9c"/><path class="e" d="M292.5,646.7 L317.3,643.1 L322.0,686.5 L297.5,690.2"/>
<polygon class="n" points="285.0,594.0 309.8,590.6 314.6,634.6 290.1,638.1" fill="#24a294"/><path class="e" d="M309.8,590.6 L285.0,594.0 L290.1,638.1 L314.6,634.6"/>
<polygon class="k" points="281.5,554.4 279.8,548.9 285.0,594.0 286.7,599.7"/>
<polygon class="t" points="281.5,554.4 306.7,551.1 304.9,545.7 279.8,548.9"/>
<polygon class="n" points="281.5,554.4 306.7,551.1 311.6,596.3 286.7,599.7" fill="#26ab9c"/><path class="e" d="M281.5,554.4 L306.7,551.1 L311.6,596.3 L286.7,599.7"/>
<polygon class="n" points="274.5,502.9 299.9,499.9 304.9,545.7 279.8,548.9" fill="#24a294"/><path class="e" d="M299.9,499.9 L274.5,502.9 L279.8,548.9 L304.9,545.7"/>
<polygon class="k" points="269.4,457.0 269.1,455.9 274.5,502.9 274.8,504.1"/>
<polygon class="t" points="269.4,457.0 295.2,454.1 294.7,453.0 269.1,455.9"/>
<polygon class="n" points="269.4,457.0 295.2,454.1 300.3,501.0 274.8,504.1" fill="#26ab9c"/><path class="e" d="M269.4,457.0 L295.2,454.1 L300.3,501.0 L274.8,504.1"/>
<polygon points="263.5,407.8 289.5,405.2 294.7,453.0 269.1,455.9" fill="#24a495"/>
<polygon points="257.8,358.7 284.2,356.3 289.5,405.2 263.5,407.8" fill="#24a495"/>
<polygon points="252.1,308.5 278.7,306.3 284.2,356.3 257.8,358.7" fill="#24a495"/>
<polygon points="300.0,927.4 322.9,923.0 327.3,960.5 304.6,965.1" fill="#24a495"/>
<polygon points="295.3,889.0 318.5,884.7 322.9,923.0 300.0,927.4" fill="#24a495"/>
<polygon class="k" points="290.7,850.3 290.6,849.8 295.3,889.0 295.4,889.5"/>
<polygon class="t" points="290.7,850.3 314.1,846.0 314.0,845.6 290.6,849.8"/>
<polygon points="290.7,850.3 314.1,846.0 318.6,885.1 295.4,889.5" fill="#24a495"/>
<polygon class="n" points="285.7,809.9 309.4,805.7 314.0,845.6 290.6,849.8" fill="#229c8e"/><path class="e" d="M309.4,805.7 L285.7,809.9 L290.6,849.8 L314.0,845.6"/>
<polygon class="k" points="281.7,773.0 280.8,769.1 285.7,809.9 286.7,813.9"/>
<polygon class="t" points="281.7,773.0 305.7,769.0 304.7,765.1 280.8,769.1"/>
<polygon class="n" points="281.7,773.0 305.7,769.0 310.4,809.7 286.7,813.9" fill="#25a898"/><path class="e" d="M281.7,773.0 L305.7,769.0 L310.4,809.7 L286.7,813.9"/>
<polygon class="n" points="275.7,727.5 299.9,723.6 304.7,765.1 280.8,769.1" fill="#229c8e"/><path class="e" d="M299.9,723.6 L275.7,727.5 L280.8,769.1 L304.7,765.1"/>
<polygon class="k" points="272.3,691.9 270.6,685.0 275.7,727.5 277.5,734.6"/>
<polygon class="t" points="272.3,691.9 296.9,688.1 295.0,681.3 270.6,685.0"/>
<polygon class="n" points="272.3,691.9 296.9,688.1 301.8,730.7 277.5,734.6" fill="#25ab9b"/><path class="e" d="M272.3,691.9 L296.9,688.1 L301.8,730.7 L277.5,734.6"/>
<polygon class="n" points="265.3,641.6 290.1,638.1 295.0,681.3 270.6,685.0" fill="#24a294"/><path class="e" d="M290.1,638.1 L265.3,641.6 L270.6,685.0 L295.0,681.3"/>
<polygon class="k" points="261.8,604.4 259.9,597.3 265.3,641.6 267.2,649.0"/>
<polygon class="t" points="261.8,604.4 287.1,601.0 285.0,594.0 259.9,597.3"/>
<polygon class="n" points="261.8,604.4 287.1,601.0 292.2,645.4 267.2,649.0" fill="#26ab9c"/><path class="e" d="M261.8,604.4 L287.1,601.0 L292.2,645.4 L267.2,649.0"/>
<polygon class="n" points="254.5,552.1 279.8,548.9 285.0,594.0 259.9,597.3" fill="#24a294"/><path class="e" d="M279.8,548.9 L254.5,552.1 L259.9,597.3 L285.0,594.0"/>
<polygon class="k" points="249.8,509.2 248.9,505.9 254.5,552.1 255.4,555.5"/>
<polygon class="t" points="249.8,509.2 275.5,506.1 274.5,502.9 248.9,505.9"/>
<polygon class="n" points="249.8,509.2 275.5,506.1 280.8,552.3 255.4,555.5" fill="#26ab9c"/><path class="e" d="M249.8,509.2 L275.5,506.1 L280.8,552.3 L255.4,555.5"/>
<polygon class="n" points="243.1,458.7 269.1,455.9 274.5,502.9 248.9,505.9" fill="#24a394"/><path class="e" d="M269.1,455.9 L243.1,458.7 L248.9,505.9 L274.5,502.9"/>
<polygon points="237.3,410.5 263.5,407.8 269.1,455.9 243.1,458.7" fill="#24a495"/>
<polygon points="231.3,361.2 257.8,358.7 263.5,407.8 237.3,410.5" fill="#24a495"/>
<polygon points="225.2,310.8 252.1,308.5 257.8,358.7 231.3,361.2" fill="#24a495"/>
<polygon points="276.9,932.0 300.0,927.4 304.6,965.1 281.7,969.8" fill="#24a495"/>
<polygon points="272.0,893.4 295.3,889.0 300.0,927.4 276.9,932.0" fill="#24a495"/>
<polygon points="266.9,854.1 290.6,849.8 295.3,889.0 272.0,893.4" fill="#229d8f"/>
<polygon class="k" points="262.3,816.1 261.8,814.0 266.9,854.1 267.4,856.3"/>
<polygon class="t" points="262.3,816.1 286.2,812.0 285.7,809.9 261.8,814.0"/>
<polygon class="n" points="262.3,816.1 286.2,812.0 291.1,852.0 267.4,856.3" fill="#24a697"/><path class="e" d="M262.3,816.1 L286.2,812.0 L291.1,852.0 L267.4,856.3"/>
<polygon class="n" points="256.6,773.1 280.8,769.1 285.7,809.9 261.8,814.0" fill="#229c8e"/><path class="e" d="M280.8,769.1 L256.6,773.1 L261.8,814.0 L285.7,809.9"/>
<polygon class="k" points="252.4,736.6 251.3,731.3 256.6,773.1 257.8,778.5"/>
<polygon class="t" points="252.4,736.6 277.0,732.6 275.7,727.5 251.3,731.3"/>
<polygon class="n" points="252.4,736.6 277.0,732.6 282.0,774.4 257.8,778.5" fill="#25a999"/><path class="e" d="M252.4,736.6 L277.0,732.6 L282.0,774.4 L257.8,778.5"/>
<polygon class="n" points="245.9,688.7 270.6,685.0 275.7,727.5 251.3,731.3" fill="#24a294"/><path class="e" d="M270.6,685.0 L245.9,688.7 L251.3,731.3 L275.7,727.5"/>
<polygon class="k" points="242.1,653.1 240.3,645.2 245.9,688.7 247.7,696.9"/>
<polygon class="t" points="242.1,653.1 267.3,649.4 265.3,641.6 240.3,645.2"/>
<polygon class="n" points="242.1,653.1 267.3,649.4 272.6,693.1 247.7,696.9" fill="#26ab9c"/><path class="e" d="M242.1,653.1 L267.3,649.4 L272.6,693.1 L247.7,696.9"/>
<polygon class="n" points="234.7,600.8 259.9,597.3 265.3,641.6 240.3,645.2" fill="#24a294"/><path class="e" d="M259.9,597.3 L234.7,600.8 L240.3,645.2 L265.3,641.6"/>
<polygon class="k" points="230.1,560.4 228.9,555.4 234.7,600.8 235.9,606.0"/>
<polygon class="t" points="230.1,560.4 255.8,557.1 254.5,552.1 228.9,555.4"/>
<polygon class="n" points="230.1,560.4 255.8,557.1 261.3,602.6 235.9,606.0" fill="#26ab9c"/><path class="e" d="M230.1,560.4 L255.8,557.1 L261.3,602.6 L235.9,606.0"/>
<polygon class="n" points="223.0,509.0 248.9,505.9 254.5,552.1 228.9,555.4" fill="#24a294"/><path class="e" d="M248.9,505.9 L223.0,509.0 L228.9,555.4 L254.5,552.1"/>
<polygon class="k" points="217.2,462.6 217.0,461.6 223.0,509.0 223.3,510.1"/>
<polygon class="t" points="217.2,462.6 243.4,459.7 243.1,458.7 217.0,461.6"/>
<polygon class="n" points="217.2,462.6 243.4,459.7 249.2,507.0 223.3,510.1" fill="#26ab9c"/><path class="e" d="M217.2,462.6 L243.4,459.7 L249.2,507.0 L223.3,510.1"/>
<polygon points="210.8,413.2 237.3,410.5 243.1,458.7 217.0,461.6" fill="#24a495"/>
<polygon points="204.5,363.7 231.3,361.2 237.3,410.5 210.8,413.2" fill="#24a495"/>
<polygon points="198.0,313.0 225.2,310.8 231.3,361.2 204.5,363.7" fill="#24a495"/>
<polygon points="253.6,936.5 276.9,932.0 281.7,969.8 258.6,974.4" fill="#24a495"/>
<polygon points="248.4,897.9 272.0,893.4 276.9,932.0 253.6,936.5" fill="#24a495"/>
<polygon class="k" points="243.2,858.8 243.1,858.4 248.4,897.9 248.5,898.3"/>
<polygon class="t" points="243.2,858.8 267.0,854.5 266.9,854.1 243.1,858.4"/>
<polygon points="243.2,858.8 267.0,854.5 272.0,893.8 248.5,898.3" fill="#24a495"/>
<polygon class="n" points="237.8,818.2 261.8,814.0 266.9,854.1 243.1,858.4" fill="#229c8e"/><path class="e" d="M261.8,814.0 L237.8,818.2 L243.1,858.4 L266.9,854.1"/>
<polygon class="k" points="232.9,780.7 232.3,777.1 237.8,818.2 238.4,821.9"/>
<polygon class="t" points="232.9,780.7 257.4,776.6 256.6,773.1 232.3,777.1"/>
<polygon class="n" points="232.9,780.7 257.4,776.6 262.6,817.6 238.4,821.9" fill="#25a798"/><path class="e" d="M232.9,780.7 L257.4,776.6 L262.6,817.6 L238.4,821.9"/>
<polygon class="n" points="226.7,735.3 251.3,731.3 256.6,773.1 232.3,777.1" fill="#229c8e"/><path class="e" d="M251.3,731.3 L226.7,735.3 L232.3,777.1 L256.6,773.1"/>
<polygon class="k" points="222.2,698.8 221.0,692.5 226.7,735.3 227.9,741.8"/>
<polygon class="t" points="222.2,698.8 247.3,695.0 245.9,688.7 221.0,692.5"/>
<polygon class="n" points="222.2,698.8 247.3,695.0 252.7,737.8 227.9,741.8" fill="#25aa9a"/><path class="e" d="M222.2,698.8 L247.3,695.0 L252.7,737.8 L227.9,741.8"/>
<polygon class="n" points="215.1,648.8 240.3,645.2 245.9,688.7 221.0,692.5" fill="#24a294"/><path class="e" d="M240.3,645.2 L215.1,648.8 L221.0,692.5 L245.9,688.7"/>
<polygon class="k" points="210.5,610.7 209.2,604.2 215.1,648.8 216.5,655.6"/>
<polygon class="t" points="210.5,610.7 236.2,607.2 234.7,600.8 209.2,604.2"/>
<polygon class="n" points="210.5,610.7 236.2,607.2 241.8,651.9 216.5,655.6" fill="#26ab9c"/><path class="e" d="M210.5,610.7 L236.2,607.2 L241.8,651.9 L216.5,655.6"/>
<polygon class="n" points="203.1,558.6 228.9,555.4 234.7,600.8 209.2,604.2" fill="#24a294"/><path class="e" d="M228.9,555.4 L203.1,558.6 L209.2,604.2 L234.7,600.8"/>
<polygon class="k" points="197.5,515.1 196.9,512.1 203.1,558.6 203.7,561.8"/>
<polygon class="t" points="197.5,515.1 223.7,511.9 223.0,509.0 196.9,512.1"/>
<polygon class="n" points="197.5,515.1 223.7,511.9 229.6,558.5 203.7,561.8" fill="#26ab9c"/><path class="e" d="M197.5,515.1 L223.7,511.9 L229.6,558.5 L203.7,561.8"/>
<polygon class="n" points="190.5,464.5 217.0,461.6 223.0,509.0 196.9,512.1" fill="#24a394"/><path class="e" d="M217.0,461.6 L190.5,464.5 L196.9,512.1 L223.0,509.0"/>
<polygon points="184.1,415.9 210.8,413.2 217.0,461.6 190.5,464.5" fill="#24a495"/>
<polygon points="177.4,366.2 204.5,363.7 210.8,413.2 184.1,415.9" fill="#24a495"/>
<polygon points="170.6,315.3 198.0,313.0 204.5,363.7 177.4,366.2" fill="#24a495"/>
<polygon points="230.0,941.1 253.6,936.5 258.6,974.4 235.4,979.1" fill="#24a495"/>
<polygon points="224.6,902.3 248.4,897.9 253.6,936.5 230.0,941.1" fill="#24a495"/>
<polygon points="219.1,862.8 243.1,858.4 248.4,897.9 224.6,902.3" fill="#229d8f"/>
<polygon class="k" points="213.8,824.3 213.5,822.4 219.1,862.8 219.4,864.7"/>
<polygon class="t" points="213.8,824.3 238.1,820.1 237.8,818.2 213.5,822.4"/>
<polygon class="n" points="213.8,824.3 238.1,820.1 243.5,860.4 219.4,864.7" fill="#24a696"/><path class="e" d="M213.8,824.3 L238.1,820.1 L243.5,860.4 L219.4,864.7"/>
<polygon class="n" points="207.7,781.2 232.3,777.1 237.8,818.2 213.5,822.4" fill="#229c8e"/><path class="e" d="M232.3,777.1 L207.7,781.2 L213.5,822.4 L237.8,818.2"/>
<polygon class="k" points="202.6,743.9 201.8,739.2 207.7,781.2 208.5,786.1"/>
<polygon class="t" points="202.6,743.9 227.6,739.9 226.7,735.3 201.8,739.2"/>
<polygon class="n" points="202.6,743.9 227.6,739.9 233.2,782.0 208.5,786.1" fill="#25a899"/><path class="e" d="M202.6,743.9 L227.6,739.9 L233.2,782.0 L208.5,786.1"/>
<polygon class="n" points="195.8,696.3 221.0,692.5 226.7,735.3 201.8,739.2" fill="#24a294"/><path class="e" d="M221.0,692.5 L195.8,696.3 L201.8,739.2 L226.7,735.3"/>
<polygon class="k" points="190.9,659.6 189.7,652.4 195.8,696.3 197.1,703.7"/>
<polygon class="t" points="190.9,659.6 216.5,655.9 215.1,648.8 189.7,652.4"/>
<polygon class="n" points="190.9,659.6 216.5,655.9 222.4,699.8 197.1,703.7" fill="#26ab9b"/><path class="e" d="M190.9,659.6 L216.5,655.9 L222.4,699.8 L197.1,703.7"/>
<polygon class="n" points="183.5,607.7 209.2,604.2 215.1,648.8 189.7,652.4" fill="#24a294"/><path class="e" d="M209.2,604.2 L183.5,607.7 L189.7,652.4 L215.1,648.8"/>
<polygon class="k" points="177.8,566.5 177.1,562.0 183.5,607.7 184.3,612.5"/>
<polygon class="t" points="177.8,566.5 204.0,563.2 203.1,558.6 177.1,562.0"/>
<polygon class="n" points="177.8,566.5 204.0,563.2 210.1,609.0 184.3,612.5" fill="#26ab9c"/><path class="e" d="M177.8,566.5 L204.0,563.2 L210.1,609.0 L184.3,612.5"/>
<polygon class="n" points="170.6,515.2 196.9,512.1 203.1,558.6 177.1,562.0" fill="#24a294"/><path class="e" d="M196.9,512.1 L170.6,515.2 L177.1,562.0 L203.1,558.6"/>
<polygon class="k" points="164.0,468.4 163.9,467.5 170.6,515.2 170.7,516.2"/>
<polygon class="t" points="164.0,468.4 190.7,465.4 190.5,464.5 163.9,467.5"/>
<polygon class="n" points="164.0,468.4 190.7,465.4 197.1,513.1 170.7,516.2" fill="#26ab9b"/><path class="e" d="M164.0,468.4 L190.7,465.4 L197.1,513.1 L170.7,516.2"/>
<polygon points="157.1,418.6 184.1,415.9 190.5,464.5 163.9,467.5" fill="#24a495"/>
<polygon points="150.1,368.7 177.4,366.2 184.1,415.9 157.1,418.6" fill="#24a495"/>
<polygon points="143.0,317.6 170.6,315.3 177.4,366.2 150.1,368.7" fill="#24a495"/>
<polygon points="206.3,945.8 230.0,941.1 235.4,979.1 211.9,983.9" fill="#24a495"/>
<polygon points="200.7,906.9 224.6,902.3 230.0,941.1 206.3,945.8" fill="#24a495"/>
<polygon class="k" points="194.9,867.5 194.9,867.2 200.7,906.9 200.7,907.2"/>
<polygon class="t" points="194.9,867.5 219.2,863.1 219.1,862.8 194.9,867.2"/>
<polygon points="194.9,867.5 219.2,863.1 224.7,902.7 200.7,907.2" fill="#24a495"/>
<polygon class="n" points="189.0,826.7 213.5,822.4 219.1,862.8 194.9,867.2" fill="#229d8e"/><path class="e" d="M213.5,822.4 L189.0,826.7 L194.9,867.2 L219.1,862.8"/>
<polygon class="k" points="183.4,788.5 182.9,785.4 189.0,826.7 189.4,830.0"/>
<polygon class="t" points="183.4,788.5 208.2,784.4 207.7,781.2 182.9,785.4"/>
<polygon class="n" points="183.4,788.5 208.2,784.4 214.0,825.7 189.4,830.0" fill="#25a798"/><path class="e" d="M183.4,788.5 L208.2,784.4 L214.0,825.7 L189.4,830.0"/>
<polygon class="n" points="176.8,743.2 201.8,739.2 207.7,781.2 182.9,785.4" fill="#229c8e"/><path class="e" d="M201.8,739.2 L176.8,743.2 L182.9,785.4 L207.7,781.2"/>
<polygon class="k" points="171.2,705.8 170.5,700.1 176.8,743.2 177.6,749.1"/>
<polygon class="t" points="171.2,705.8 196.8,701.9 195.8,696.3 170.5,700.1"/>
<polygon class="n" points="171.2,705.8 196.8,701.9 202.8,745.0 177.6,749.1" fill="#25a99a"/><path class="e" d="M171.2,705.8 L196.8,701.9 L202.8,745.0 L177.6,749.1"/>
<polygon class="n" points="164.1,656.1 189.7,652.4 195.8,696.3 170.5,700.1" fill="#24a294"/><path class="e" d="M189.7,652.4 L164.1,656.1 L170.5,700.1 L195.8,696.3"/>
<polygon class="k" points="158.3,617.1 157.5,611.2 164.1,656.1 164.9,662.2"/>
<polygon class="t" points="158.3,617.1 184.4,613.5 183.5,607.7 157.5,611.2"/>
<polygon class="n" points="158.3,617.1 184.4,613.5 190.7,658.5 164.9,662.2" fill="#26ab9c"/><path class="e" d="M158.3,617.1 L184.4,613.5 L190.7,658.5 L164.9,662.2"/>
<polygon class="n" points="150.8,565.3 177.1,562.0 183.5,607.7 157.5,611.2" fill="#24a294"/><path class="e" d="M177.1,562.0 L150.8,565.3 L157.5,611.2 L183.5,607.7"/>
<polygon class="k" points="144.3,521.1 144.0,518.4 150.8,565.3 151.2,568.1"/>
<polygon class="t" points="144.3,521.1 171.0,517.9 170.6,515.2 144.0,518.4"/>
<polygon class="n" points="144.3,521.1 171.0,517.9 177.5,564.7 151.2,568.1" fill="#26ab9c"/><path class="e" d="M144.3,521.1 L171.0,517.9 L177.5,564.7 L151.2,568.1"/>
<polygon class="n" points="137.0,470.4 163.9,467.5 170.6,515.2 144.0,518.4" fill="#24a394"/><path class="e" d="M163.9,467.5 L137.0,470.4 L144.0,518.4 L170.6,515.2"/>
<polygon points="129.8,421.4 157.1,418.6 163.9,467.5 137.0,470.4" fill="#24a495"/>
<polygon points="122.5,371.3 150.1,368.7 157.1,418.6 129.8,421.4" fill="#24a495"/>
<polygon points="115.0,320.0 143.0,317.6 150.1,368.7 122.5,371.3" fill="#24a495"/>
<polygon points="182.4,950.4 206.3,945.8 211.9,983.9 188.2,988.7" fill="#24a495"/>
<polygon points="176.5,911.4 200.7,906.9 206.3,945.8 182.4,950.4" fill="#24a495"/>
<polygon points="170.4,871.6 194.9,867.2 200.7,906.9 176.5,911.4" fill="#239d8f"/>
<polygon class="k" points="164.4,832.7 164.2,831.0 170.4,871.6 170.6,873.3"/>
<polygon class="t" points="164.4,832.7 189.2,828.4 189.0,826.7 164.2,831.0"/>
<polygon class="n" points="164.4,832.7 189.2,828.4 195.1,868.9 170.6,873.3" fill="#24a596"/><path class="e" d="M164.4,832.7 L189.2,828.4 L195.1,868.9 L170.6,873.3"/>
<polygon class="n" points="157.9,789.5 182.9,785.4 189.0,826.7 164.2,831.0" fill="#229c8e"/><path class="e" d="M182.9,785.4 L157.9,789.5 L164.2,831.0 L189.0,826.7"/>
<polygon class="k" points="151.9,751.4 151.5,747.2 157.9,789.5 158.4,793.9"/>
<polygon class="t" points="151.9,751.4 177.3,747.4 176.8,743.2 151.5,747.2"/>
<polygon class="n" points="151.9,751.4 177.3,747.4 183.5,789.7 158.4,793.9" fill="#25a898"/><path class="e" d="M151.9,751.4 L177.3,747.4 L183.5,789.7 L158.4,793.9"/>
<polygon class="n" points="144.9,704.0 170.5,700.1 176.8,743.2 151.5,747.2" fill="#24a294"/><path class="e" d="M170.5,700.1 L144.9,704.0 L151.5,747.2 L176.8,743.2"/>
<polygon class="k" points="138.8,666.2 138.2,659.8 144.9,704.0 145.6,710.6"/>
<polygon class="t" points="138.8,666.2 164.9,662.4 164.1,656.1 138.2,659.8"/>
<polygon class="n" points="138.8,666.2 164.9,662.4 171.4,706.7 145.6,710.6" fill="#25aa9b"/><path class="e" d="M138.8,666.2 L164.9,662.4 L171.4,706.7 L145.6,710.6"/>
<polygon class="n" points="131.3,614.7 157.5,611.2 164.1,656.1 138.2,659.8" fill="#24a294"/><path class="e" d="M157.5,611.2 L131.3,614.7 L138.2,659.8 L164.1,656.1"/>
<polygon class="k" points="124.7,572.8 124.3,568.7 131.3,614.7 131.7,619.0"/>
<polygon class="t" points="124.7,572.8 151.3,569.3 150.8,565.3 124.3,568.7"/>
<polygon class="n" points="124.7,572.8 151.3,569.3 158.1,615.4 131.7,619.0" fill="#26ab9c"/><path class="e" d="M124.7,572.8 L151.3,569.3 L158.1,615.4 L131.7,619.0"/>
<polygon class="n" points="117.1,521.6 144.0,518.4 150.8,565.3 124.3,568.7" fill="#24a294"/><path class="e" d="M144.0,518.4 L117.1,521.6 L124.3,568.7 L150.8,565.3"/>
<polygon class="k" points="109.9,474.2 109.8,473.4 117.1,521.6 117.2,522.4"/>
<polygon class="t" points="109.9,474.2 137.1,471.2 137.0,470.4 109.8,473.4"/>
<polygon class="n" points="109.9,474.2 137.1,471.2 144.1,519.3 117.2,522.4" fill="#25aa9b"/><path class="e" d="M109.9,474.2 L137.1,471.2 L144.1,519.3 L117.2,522.4"/>
<polygon points="102.3,424.2 129.8,421.4 137.0,470.4 109.8,473.4" fill="#24a495"/>
<polygon points="94.6,373.8 122.5,371.3 129.8,421.4 102.3,424.2" fill="#24a495"/>
<polygon points="86.8,322.3 115.0,320.0 122.5,371.3 94.6,373.8" fill="#24a495"/>
<polygon points="158.3,955.1 182.4,950.4 188.2,988.7 164.4,993.5" fill="#24a495"/>
<polygon points="152.1,916.0 176.5,911.4 182.4,950.4 158.3,955.1" fill="#24a495"/>
<polygon class="k" points="145.8,876.3 145.8,876.1 152.1,916.0 152.1,916.3"/>
<polygon class="t" points="145.8,876.3 170.5,871.9 170.4,871.6 145.8,876.1"/>
<polygon points="145.8,876.3 170.5,871.9 176.5,911.7 152.1,916.3" fill="#24a495"/>
<polygon class="n" points="139.3,835.3 164.2,831.0 170.4,871.6 145.8,876.1" fill="#229d8e"/><path class="e" d="M164.2,831.0 L139.3,835.3 L145.8,876.1 L170.4,871.6"/>
<polygon class="k" points="132.9,796.5 132.7,793.7 139.3,835.3 139.6,838.2"/>
<polygon class="t" points="132.9,796.5 158.2,792.3 157.9,789.5 132.7,793.7"/>
<polygon class="n" points="132.9,796.5 158.2,792.3 164.6,833.9 139.6,838.2" fill="#25a697"/><path class="e" d="M132.9,796.5 L158.2,792.3 L164.6,833.9 L139.6,838.2"/>
<polygon class="n" points="126.0,751.2 151.5,747.2 157.9,789.5 132.7,793.7" fill="#229c8e"/><path class="e" d="M151.5,747.2 L126.0,751.2 L132.7,793.7 L157.9,789.5"/>
<polygon class="k" points="119.5,712.9 119.1,707.9 126.0,751.2 126.4,756.5"/>
<polygon class="t" points="119.5,712.9 145.4,709.0 144.9,704.0 119.1,707.9"/>
<polygon class="n" points="119.5,712.9 145.4,709.0 152.0,752.4 126.4,756.5" fill="#25a999"/><path class="e" d="M119.5,712.9 L145.4,709.0 L152.0,752.4 L126.4,756.5"/>
<polygon class="n" points="112.1,663.6 138.2,659.8 144.9,704.0 119.1,707.9" fill="#24a294"/><path class="e" d="M138.2,659.8 L112.1,663.6 L119.1,707.9 L144.9,704.0"/>
<polygon class="k" points="105.2,623.5 104.9,618.3 112.1,663.6 112.5,669.0"/>
<polygon class="t" points="105.2,623.5 131.8,619.9 131.3,614.7 104.9,618.3"/>
<polygon class="n" points="105.2,623.5 131.8,619.9 138.7,665.2 112.5,669.0" fill="#26ab9c"/><path class="e" d="M105.2,623.5 L131.8,619.9 L138.7,665.2 L112.5,669.0"/>
<polygon class="n" points="97.5,572.1 124.3,568.7 131.3,614.7 104.9,618.3" fill="#24a294"/><path class="e" d="M124.3,568.7 L97.5,572.1 L104.9,618.3 L131.3,614.7"/>
<polygon class="k" points="90.2,527.2 90.0,524.8 97.5,572.1 97.7,574.6"/>
<polygon class="t" points="90.2,527.2 117.4,523.9 117.1,521.6 90.0,524.8"/>
<polygon class="n" points="90.2,527.2 117.4,523.9 124.5,571.1 97.7,574.6" fill="#26ab9c"/><path class="e" d="M90.2,527.2 L117.4,523.9 L124.5,571.1 L97.7,574.6"/>
<polygon class="n" points="82.4,476.4 109.8,473.4 117.1,521.6 90.0,524.8" fill="#24a394"/><path class="e" d="M109.8,473.4 L82.4,476.4 L90.0,524.8 L117.1,521.6"/>
<polygon points="74.5,427.0 102.3,424.2 109.8,473.4 82.4,476.4" fill="#24a495"/>
<polygon points="66.5,376.4 94.6,373.8 102.3,424.2 74.5,427.0" fill="#24a495"/>
<polygon points="58.3,324.7 86.8,322.3 94.6,373.8 66.5,376.4" fill="#24a495"/></g><g fill="none" stroke-width="1.2"><path d="M64.5,964.5 V947" stroke="#2233c8"/><path d="M64.5,964.5 L82,963" stroke="#c22a2a"/><path d="M64.5,964.5 L60.500,957" stroke="#2fa02f"/>
<path d="M64,941.500h3.500l-3.500,4.500h3.500" stroke="#2233c8"/><path d="M84.500,958l4.500,5M89,958l-4.500,5" stroke="#c22a2a"/><path d="M57.500,952l2,3.500M61.500,952l-3.500,6.500" stroke="#2fa02f"/></g>
</svg></div>
<svg width="1412" height="150" viewBox="0 0 1412 150">
<defs>
<linearGradient id="gtab" x1="0" y1="0" x2="0" y2="1"><stop offset="0" stop-color="#6c6c6c"/><stop offset="1" stop-color="#555"/></linearGradient>
<linearGradient id="grow" x1="0" y1="0" x2="0" y2="1"><stop offset="0" stop-color="#3a3a3a"/><stop offset="1" stop-color="#4b4b4b"/></linearGradient>
<radialGradient id="rb1"><stop offset="0" stop-color="#7a7a7a"/><stop offset="1" stop-color="#7a7a7a" stop-opacity="0"/></radialGradient>
<radialGradient id="rb2"><stop offset="0" stop-color="#7a7a7a"/><stop offset=".6" stop-color="#767676" stop-opacity=".9"/><stop offset="1" stop-color="#6a6a6a" stop-opacity="0"/></radialGradient>
<radialGradient id="rb3"><stop offset="0" stop-color="#7b7b7b"/><stop offset=".85" stop-color="#777" stop-opacity=".95"/><stop offset="1" stop-color="#6a6a6a" stop-opacity="0"/></radialGradient>
<g id="cur"><path d="M0,0 L0,11 L2.6,8.6 L4.6,12.8 L6.6,11.8 L4.7,7.8 L8,7.6 Z" fill="#f2b21e" stroke="#7a5600" stroke-width=".4"/></g>
<g id="mag" fill="none" stroke="#f0b323" stroke-width="2.2"><path d="M0,4 C-1,-2 7,-4 8,1 C8.5,4 6,6 4,8"/></g>
<path id="fly" d="M0,0 L4,0 L4,-4 Z" fill="#ddd"/>
</defs>
<!-- title icon -->
<rect x="2" y="3" width="15" height="16" fill="#d3e4e4"/><rect x="2" y="3" width="6" height="16" fill="#e3efef"/>
<text x="9.500" y="15.500" font-family="Liberation Sans,sans-serif" font-weight="bold" font-size="13.500" fill="#167e88" text-anchor="middle">3</text><rect x="10" y="16" width="5" height="1.500" fill="#2aa5a0"/>
<!-- menu top line -->
<rect x="0" y="22" width="1412" height="1.5" fill="#2c2c2c"/>
<rect x="0" y="44" width="1412" height="1" fill="#3a3a3a"/>
<!-- grips -->
<rect x="3" y="47" width="2" height="28" fill="#585858"/><rect x="3" y="78" width="2" height="26" fill="#585858"/><rect x="3" y="110" width="2" height="32" fill="#585858"/>
<!-- undo / redo -->
<g fill="none" stroke="#dcdcdc" stroke-width="3.2" stroke-linejoin="miter">
<path d="M18.5,56.5 H27.5 C36,56.5 36,67.5 27,67.5 H25"/>
<path d="M60.5,56.5 H52 C44,56.5 44,67.5 52,67.5 H54"/>
</g>
<path d="M13.5,56.5 L21,50.5 V62.5 Z M65.5,56.5 L58,50.5 V62.5 Z" fill="#dcdcdc"/>
<!-- separators -->
<g stroke="#262626" stroke-width="1.6">
<path d="M74,52 V67 M173.5,52 V67 M372,52 V67 M603,52 V67 M671,52 V67 M802,52 V67 M956,52 V67 M1024,52 V67 M1093,52 V67 M1192,52 V67 M1229,52 V67"/>
</g>
<rect x="1328" y="47" width="3" height="26" fill="#5a5a5a"/>
<!-- link -->
<g fill="none" stroke="#dedede" stroke-width="2.9">
<rect x="-7.500" y="-4.300" width="15" height="8.600" rx="4.300" transform="translate(88.300,64.200) rotate(-45)"/>
<rect x="-7.500" y="-4.300" width="15" height="8.600" rx="4.300" transform="translate(97,55.500) rotate(-45)"/>
<path d="M113,63 a4.300,4.300 0 0 0 6.100,6.100 l3.500,-3.500 M113,63 l4.600,-4.600 a4.300,4.300 0 0 1 4.500,-1" />
<path d="M134.500,57.200 a4.300,4.300 0 0 0 -6.100,-6.100 l-3.500,3.500 M134.500,57.200 l-4.600,4.600 a4.300,4.300 0 0 1 -4.500,1" />
</g>
<path d="M119,53 l3.500,3.500 M125,63.500 l3.500,3.500" stroke="#35c4c4" stroke-width="1.700"/>
<!-- bind space warp -->
<g fill="none" stroke="#dedede" stroke-width="2.2" stroke-linecap="round">
<path d="M145,58 c4,-3 7,3 11,0"/><path d="M145,63 c4,-3 7,3 11,0 s7,3 10,0"/><path d="M145,68 c4,-3 7,3 11,0 s7,3 10,0"/></g>
<g fill="none" stroke="#f0b323" stroke-width="2"><rect x="156.500" y="50.500" width="5" height="7" rx="2.500" transform="rotate(35 159 54)"/><rect x="160" y="55.500" width="5" height="7" rx="2.500" transform="rotate(35 162.500 59)"/></g>
<!-- dropdowns -->
<rect x="177" y="47" width="66.500" height="17" fill="#5b5b5b"/><path d="M229.500,54 h6.500 l-3.250,4.500z" fill="#e0e0e0"/>
<rect x="501.500" y="47" width="66.500" height="17" fill="#5b5b5b"/><path d="M553.500,54 h6.500 l-3.250,4.500z" fill="#e0e0e0"/>
<rect x="837" y="47" width="116" height="17" fill="#5b5b5b"/><path d="M939,54 h6.500 l-3.250,4.500z" fill="#e0e0e0"/>
<rect x="1336" y="47" width="80" height="26" fill="#5a5a5a"/>
<!-- select object (active) -->
<rect x="245.500" y="45.500" width="29.500" height="28.500" rx="3" fill="#5b8fd6" stroke="#79a7e6" stroke-width="1"/>
<rect x="250" y="49" width="18.500" height="19" fill="#dcdcdc" stroke="#555" stroke-width=".8"/>
<use href="#cur" x="263" y="58"/>
<!-- select by name -->
<g fill="#dcdcdc"><rect x="280" y="48.500" width="22" height="3"/><rect x="280" y="54" width="12" height="3"/><rect x="280" y="59.500" width="12" height="3"/><rect x="280" y="65" width="12" height="2.500"/><rect x="294" y="59.500" width="8" height="3"/></g>
<use href="#cur" x="294" y="58"/>
<!-- region rect -->
<rect x="313" y="49.500" width="19" height="19" fill="none" stroke="#35c4c4" stroke-width="2" stroke-dasharray="4.500 2.500"/>
<use href="#fly" x="333" y="74"/>
<!-- window crossing -->
<rect x="344" y="49.500" width="17" height="19" fill="none" stroke="#dcdcdc" stroke-width="2" stroke-dasharray="4.500 2.500"/>
<rect x="353" y="54" width="12" height="11" fill="#3cc2c2" stroke="#333" stroke-width=".8"/>
<!-- move -->
<g fill="#dcdcdc"><path d="M391,49 l4.500,5 h-3 v4.500 h4.500 v-3 l5,4.500 l-5,4.500 v-3 h-4.500 v4.500 h3 l-4.500,5 l-4.500,-5 h3 v-4.500 h-4.500 v3 l-5,-4.500 l5,-4.500 v3 h4.500 v-4.500 h-3 z"/></g>
<!-- rotate -->
<path d="M431,61 a8.500,8.500 0 1 1 -6,-9.300" fill="none" stroke="#dcdcdc" stroke-width="3.200"/><path d="M422.500,47.500 l8,4.500 l-8,4.500z" fill="#dcdcdc"/>
<!-- scale -->
<rect x="443" y="49" width="21" height="20.500" fill="none" stroke="#35c4c4" stroke-width="1.800" stroke-dasharray="4 2.200"/>
<rect x="443" y="60" width="10" height="10" fill="#dcdcdc" stroke="#444" stroke-width=".8"/><path d="M453,56.500 h5.500 v5.500" fill="none" stroke="#35c4c4" stroke-width="1.600"/>
<use href="#fly" x="464" y="74"/>
<!-- placement -->
<circle cx="483.500" cy="61" r="9.200" fill="#dcdcdc"/><circle cx="491.500" cy="52.500" r="4.200" fill="#35c4c4" stroke="#444" stroke-width=".6"/>
<path d="M491,53 L484,60" stroke="#f0a81e" stroke-width="2"/><path d="M482.500,61.500 l1,-5 l4,4z" fill="#f0a81e"/>
<use href="#fly" x="495" y="74"/>
<!-- pivot -->
<path d="M573,48 h9.500 v16 l-4.700,-3 l-4.800,3z M586,48 h9.500 v12 l-4.700,-3 l-4.800,3z" fill="#dcdcdc"/>
<path d="M574.500,64.500 h6.500 M577.800,61.500 v6.500 M587.500,59.500 h6 M590.500,56.500 v6" stroke="#35c4c4" stroke-width="1.800"/>
<use href="#fly" x="593.500" y="74"/>
<!-- manipulate -->
<path d="M612.500,59.500 H629 M621,51.500 V67" stroke="#dcdcdc" stroke-width="1.800"/>
<g fill="#dcdcdc"><rect x="610.500" y="57.500" width="4" height="4"/><rect x="627.500" y="57.500" width="4" height="4"/><rect x="619" y="65.500" width="4" height="4"/></g><rect x="619" y="48.500" width="4" height="4" fill="#35c4c4"/>
<!-- keyboard override (active) -->
<rect x="637.500" y="45.500" width="29.500" height="28.500" rx="3" fill="#5b8fd6" stroke="#79a7e6" stroke-width="1"/>
<rect x="642" y="50" width="21" height="20.500" rx="2" fill="#dcdcdc" stroke="#444" stroke-width=".8"/><path d="M650,52.500 l4.200,4.200 h-2.200 v3.800 h-4 v-3.800 h-2.200z" fill="#333"/>
<!-- snaps 3 -->
<text x="677" y="70" font-family="Liberation Sans,sans-serif" font-weight="bold" font-size="23" fill="#dcdcdc">3</text>
<use href="#mag" x="690" y="50"/><use href="#fly" x="699.500" y="74"/>
<!-- angle snap (active) -->
<rect x="706" y="45.500" width="29.500" height="28.500" rx="3" fill="#5b8fd6" stroke="#79a7e6" stroke-width="1"/>
<path d="M712,52 V69 H730 M712,59.500 a9.500,9.500 0 0 1 9.500,9.500" fill="none" stroke="#e6e6e6" stroke-width="2.200"/>
<use href="#mag" x="722" y="50"/>
<!-- percent snap -->
<circle cx="746" cy="55.500" r="3.300" fill="none" stroke="#dcdcdc" stroke-width="1.800"/><circle cx="759" cy="66" r="3.300" fill="none" stroke="#dcdcdc" stroke-width="1.800"/><path d="M747,70 L758,51" stroke="#dcdcdc" stroke-width="2"/>
<use href="#mag" x="755" y="49"/>
<!-- spinner snap -->
<path d="M772.500,58 l5,-7 l5,7z M772.500,62.500 l5,7 l5,-7z" fill="#cfcfcf"/><use href="#mag" x="785" y="50"/>
<!-- named sel -->
<text x="808.500" y="69" font-family="Liberation Sans,sans-serif" font-size="21" fill="#dcdcdc" letter-spacing="1.5">{}</text>
<path d="M822.500,58.500 L830.500,49" stroke="#f0b323" stroke-width="3.200"/><path d="M820.500,61 l.8,-3.400 l2.600,2.200z" fill="#ddd"/>
<!-- mirror -->
<path d="M963,51 l7,4 v13 l-7,-4z" fill="#dcdcdc"/><path d="M986,51 l-7,4 v13 l7,-4z" fill="#3cc2c2"/><path d="M974.500,48.500 V70" stroke="#e6e6e6" stroke-width="1.600" stroke-dasharray="3 1.500"/>
<!-- align -->
<path d="M995.500,49 V70" stroke="#35c4c4" stroke-width="1.800" stroke-dasharray="3 1.500"/><rect x="999" y="51.500" width="10" height="5.500" fill="#dcdcdc"/><rect x="999" y="60.500" width="15" height="5.500" fill="#dcdcdc"/>
<use href="#fly" x="1017" y="74"/>
<!-- scene explorer list -->
<rect x="1033" y="49" width="19" height="21" fill="#e3e3e3" stroke="#333" stroke-width=".8"/>
<g stroke="#333" stroke-width="1.800"><path d="M1035.500,53.500h3M1040.500,53.500h9M1035.500,58h3M1040.500,58h9M1035.500,62.500h3M1040.500,62.500h9M1035.500,67h3M1040.500,67h9"/></g>
<!-- layers -->
<rect x="1064.500" y="49" width="19" height="21" fill="#e3e3e3" stroke="#333" stroke-width=".8"/>
<path d="M1067,52h14" stroke="#333" stroke-width="1.500"/><path d="M1074,54.500 l7,3 l-7,3 l-7,-3z M1067,61 l7,3 l7,-3 M1067,64.500 l7,3 l7,-3" fill="#333" stroke="#333" stroke-width="1.200"/>
<!-- ribbon toggle (active) -->
<rect x="1096.500" y="45.500" width="29" height="28.500" rx="3" fill="#5b8fd6" stroke="#79a7e6" stroke-width="1"/>
<path d="M1101,49.500 h9 v4 h11.500 v17 h-20.500z" fill="#e3e3e3" stroke="#444" stroke-width=".8"/><rect x="1111" y="49.500" width="4.500" height="3.500" fill="#e3e3e3" stroke="#444" stroke-width=".6"/><rect x="1116.500" y="49.500" width="4.500" height="3.500" fill="#e3e3e3" stroke="#444" stroke-width=".6"/>
<path d="M1104,59.500h6M1112.500,59.500h6M1104,65h6M1112.500,65h6" stroke="#333" stroke-width="2"/>
<!-- curve editor -->
<rect x="1131.500" y="49" width="21.500" height="21" fill="#e3e3e3" stroke="#333" stroke-width=".8"/><path d="M1131.500,53.500h21.500" stroke="#333" stroke-width=".8"/><path d="M1133.500,51.200h2M1136.500,51.200h2M1139.500,51.200h2" stroke="#333" stroke-width="1.600"/>
<path d="M1134.500,62 c3,-8 6,-3 7.500,0 s5,6 8,-1" fill="none" stroke="#2bb5b5" stroke-width="2"/>
<!-- dope sheet-->
<rect x="1163" y="48.500" width="21.500" height="3.500" fill="#e3e3e3" stroke="#333" stroke-width=".6"/><rect x="1163" y="66.500" width="21.500" height="3.500" fill="#3cc2c2"/><path d="M1171.500,54.500 h4.500 v4.500 h3.500 l-5.700,5 l-5.700,-5 h3.400z" fill="#3cc2c2"/>
<!-- material editor -->
<rect x="1199.500" y="49" width="21.500" height="21" fill="#e3e3e3" stroke="#333" stroke-width=".8"/><path d="M1199.500,53.500h21.500" stroke="#333" stroke-width=".8"/><path d="M1201.500,51.200h2M1204.500,51.200h2M1207.500,51.200h2" stroke="#333" stroke-width="1.600"/>
<circle cx="1206.500" cy="62" r="4.200" fill="none" stroke="#333" stroke-width="1.300"/><circle cx="1206.500" cy="62" r="1.700" fill="#333"/><path d="M1213,58h6M1213,61h6M1213,64h6M1213,67h6" stroke="#333" stroke-width="1.300"/>
<use href="#fly" x="1221.500" y="74"/>
<!-- teapots -->
<g id="tp"><path d="M1241,57.500 c-1,5 1,9 4,11 h9 c3,-2 5,-6 4,-11 z" fill="#dcdcdc"/><path d="M1236.500,57 l5,4 v4 z" fill="#dcdcdc"/><path d="M1258,59 c5,-2 5,5 -1,6" fill="none" stroke="#dcdcdc" stroke-width="1.600"/><rect x="1243" y="55" width="13" height="2" fill="#dcdcdc"/><circle cx="1249.500" cy="53.500" r="1.800" fill="#dcdcdc"/></g>
<g transform="translate(1254.500,64)"><circle r="5" fill="#f0b323"/><g stroke="#f0b323" stroke-width="2.400"><path d="M-6.500,0h13M0,-6.500v13M-4.600,-4.600l9.200,9.200M-4.600,4.600l9.200,-9.200"/></g><circle r="2.300" fill="#444"/></g>
<rect x="1267.500" y="49" width="22.500" height="21.500" fill="#3cc2c2" stroke="#333" stroke-width=".8"/><rect x="1267.500" y="49" width="22.500" height="4.500" fill="#e3e3e3" stroke="#333" stroke-width=".8"/><path d="M1269.500,51.200h2M1272.500,51.200h2M1275.500,51.200h2" stroke="#333" stroke-width="1.600"/>
<g transform="translate(1278.500,62.800) scale(.76) translate(-1249,-61)"><use href="#tp"/></g>
<g transform="translate(62.500,0)"><use href="#tp"/></g>
<path d="M1320,57.500 l-5.500,7 h3.500 l-2,6 l6.500,-8 h-3.500 z" fill="#35c4c4" stroke="#444" stroke-width=".5"/>
<use href="#fly" x="1323" y="74"/>
<!-- row 2 -->
<g fill="none" stroke="#6b6b6b" stroke-width="3" stroke-linecap="round"><path d="M33,81.500 L22,93.500"/><path d="M21,94 c-2,2 -3,6 -6,7 c4,1 8,-1 9,-4z" fill="#6b6b6b" stroke-width="1"/><circle cx="19" cy="85" r="3.400" stroke-width="1.600"/><circle cx="19" cy="85" r="5" stroke-width="1.200" stroke-dasharray="1.500 1.500"/>
<path d="M53.500,81 v17 M45,89.500 h17" stroke-width="3.200" stroke-linecap="butt"/><path d="M66,89 L58,97"/><path d="M57.500,97 c-1.500,1.500 -2,4 -4.500,5 c3,1 6,0 7,-2.500z" fill="#6b6b6b" stroke-width="1"/></g>
<circle cx="87" cy="91" r="2" fill="#727272"/><circle cx="118" cy="91" r="5.500" fill="url(#rb1)"/><circle cx="150" cy="91" r="11" fill="url(#rb2)" opacity=".8"/><circle cx="181" cy="91" r="10.500" fill="url(#rb3)"/><circle cx="212" cy="91" r="10" fill="#7a7a7a"/>
<!-- ribbon -->
<rect x="8" y="107" width="1404" height="19" fill="#505050"/><rect x="8" y="107" width="1404" height="1" fill="#5e5e5e"/>
<rect x="8" y="126" width="1404" height="18.500" fill="url(#grow)"/><rect x="8" y="125.500" width="1404" height="1" fill="#3a3a3a"/>
<rect x="12.500" y="109.500" width="79.500" height="17" rx="2" fill="url(#gtab)" stroke="#8a8a8a" stroke-width="1"/>
<rect x="10.500" y="127" width="103.500" height="16.500" rx="1.500" fill="#474747" stroke="#5c5c5c" stroke-width="1"/>
<rect x="484" y="113" width="13" height="7.500" rx="2" fill="#ededed"/><path d="M487.500,115.500 h6 l-3,3z" fill="#333"/><path d="M502,115 h6 l-3,3.500z" fill="#ddd"/>
<rect x="0" y="144.500" width="1412" height="1.500" fill="#333"/><rect x="3" y="150.500" width="33" height="2.500" fill="#5c5c5c"/>
</svg>

<svg width="1412" height="1080" viewBox="0 0 1412 1080">
<defs><linearGradient id="gbl" x1="0" y1="0" x2="0" y2="1"><stop offset="0" stop-color="#5f95e0"/><stop offset="1" stop-color="#3f78cf"/></linearGradient><linearGradient id="gin" x1="0" y1="0" x2="0" y2="1"><stop offset="0" stop-color="#727f92"/><stop offset="1" stop-color="#4d5562"/></linearGradient></defs>
<rect x="9.500" y="912" width="19" height="19" rx="3" fill="#4c4c4c" stroke="#3a3a3a" stroke-width=".8"/><path d="M16.500,917 l6,4.500 l-6,4.500z" fill="#f2f2f2"/>
<path d="M8,941 H39 V984.500 H8 a4,4 0 0 1 -4,-4 V945 a4,4 0 0 1 4,-4z" fill="url(#gbl)"/><rect x="7.500" y="949" width="29.500" height="26.500" rx="1.500" fill="url(#gin)" stroke="#2c2f36" stroke-width="1"/>
<rect x="3" y="992" width="1.500" height="44" fill="#5a5a5a"/>
<rect x="9.500" y="991.500" width="14" height="15" rx="2.500" fill="#5c5c5c"/><rect x="25" y="991.500" width="120.500" height="15" rx="2.500" fill="#646464"/><rect x="147" y="991.500" width="14.500" height="15" rx="2.500" fill="#5c5c5c"/>
<path d="M19,996 l-5,3 l5,3 M151.500,996 l5,3 l-5,3" fill="none" stroke="#e0e0e0" stroke-width="1.200"/>
<rect x="9" y="1010.500" width="1403" height="1.500" fill="#2b2b2b"/><rect x="57" y="1011" width="1355" height="24.500" fill="#2b2b2b"/>
<rect x="62" y="1013" width="7" height="22.500" fill="#9a8d30"/>
<path d="M65.0,1011.500V1022M65.0,1033.500V1036M83.5,1011.500V1022M102.0,1011.500V1022M120.5,1011.500V1022M139.0,1011.500V1022M157.5,1011.500V1022M157.5,1033.500V1036M176.0,1011.500V1022M194.5,1011.500V1022M213.0,1011.500V1022M231.5,1011.500V1022M250.0,1011.500V1022M250.0,1033.500V1036M268.5,1011.500V1022M287.0,1011.500V1022M305.5,1011.500V1022M324.0,1011.500V1022M342.5,1011.500V1022M342.5,1033.500V1036M361.0,1011.500V1022M379.5,1011.500V1022M398.0,1011.500V1022M416.5,1011.500V1022M435.0,1011.500V1022M435.0,1033.500V1036M453.5,1011.500V1022M472.0,1011.500V1022M490.5,1011.500V1022M509.0,1011.500V1022M527.5,1011.500V1022M527.5,1033.500V1036M546.0,1011.500V1022M564.5,1011.500V1022M583.0,1011.500V1022M601.5,1011.500V1022M620.0,1011.500V1022M620.0,1033.500V1036M638.5,1011.500V1022M657.0,1011.500V1022M675.5,1011.500V1022M694.0,1011.500V1022M712.5,1011.500V1022M712.5,1033.500V1036M731.0,1011.500V1022M749.5,1011.500V1022M768.0,1011.500V1022M786.5,1011.500V1022M805.0,1011.500V1022M805.0,1033.500V1036M823.5,1011.500V1022M842.0,1011.500V1022M860.5,1011.500V1022M879.0,1011.500V1022M897.5,1011.500V1022M897.5,1033.500V1036M916.0,1011.500V1022M934.5,1011.500V1022M953.0,1011.500V1022M971.5,1011.500V1022M990.0,1011.500V1022M990.0,1033.500V1036M1008.5,1011.500V1022M1027.0,1011.500V1022M1045.5,1011.500V1022M1064.0,1011.500V1022M1082.5,1011.500V1022M1082.5,1033.500V1036M1101.0,1011.500V1022M1119.5,1011.500V1022M1138.0,1011.500V1022M1156.5,1011.500V1022M1175.0,1011.500V1022M1175.0,1033.500V1036M1193.5,1011.500V1022M1212.0,1011.500V1022M1230.5,1011.500V1022M1249.0,1011.500V1022M1267.5,1011.500V1022M1267.5,1033.500V1036M1286.0,1011.500V1022M1304.5,1011.500V1022M1323.0,1011.500V1022M1341.5,1011.500V1022M1360.0,1011.500V1022M1360.0,1033.500V1036M1378.5,1011.500V1022M1397.0,1011.500V1022" stroke="#6e6e6e" stroke-width="1.100"/>
<path d="M22,1019h2.500M22,1022h2.500M22,1025h2.500M22,1028h2.500" stroke="#ddd" stroke-width="1"/><path d="M26.500,1026 c2,-8 4,-6 5.500,-2 s3.500,4 5,-2" fill="none" stroke="#35c4c4" stroke-width="1.600"/>
<rect x="3.500" y="1040.500" width="96.500" height="21.500" fill="#dcc3c3" stroke="#f4f4f4" stroke-width="1"/><rect x="3.500" y="1063" width="96.500" height="18" fill="#fff" stroke="#aaa" stroke-width=".6"/>
<rect x="102.500" y="1040" width="1.500" height="40" fill="#333"/>
<rect x="1137.500" y="1042" width="21" height="20" rx="3" fill="#5b8fd6" stroke="#79a7e6" stroke-width="1"/><rect x="1144.500" y="1048.500" width="7" height="7" fill="#3fd0c8" stroke="#2a5a8a" stroke-width=".8"/>
<path d="M1141,1048v-3h3M1152,1045h3v3M1155,1056v3h-3M1144,1059h-3v-3" fill="none" stroke="#e6e6e6" stroke-width="1.200"/>
<rect x="1168.500" y="1050" width="10" height="8.500" rx="1" fill="#5d5d5d" stroke="#353535" stroke-width=".8"/><path d="M1170.500,1050v-2.500a3,3 0 0 1 6,0v2.500" fill="none" stroke="#606060" stroke-width="1.500"/><circle cx="1173.500" cy="1053.500" r="1.200" fill="#2a2a2a"/><rect x="1173" y="1054" width="1" height="3" fill="#2a2a2a"/>
<rect x="1193" y="1045" width="13" height="13.500" fill="#f0f0f0"/><path d="M1199.500,1047.500l4,4.200l-4,4.200l-4,-4.200z" fill="none" stroke="#222" stroke-width="1.300"/><path d="M1194.500,1046.500h2.500v2.500h-2.500zM1202,1046.500h2.500v2.500h-2.500zM1194.500,1054.500h2.500v2.500h-2.500zM1202,1054.500h2.500v2.500h-2.500z" fill="#222"/>
<rect x="1228" y="1044" width="55.500" height="16" fill="#5c5c5c"/><rect x="1308.500" y="1044" width="55.500" height="16" fill="#5c5c5c"/><rect x="1389" y="1044" width="30" height="16" fill="#5c5c5c"/>
<rect x="1318" y="1068" width="1.500" height="12" fill="#2a2a2a"/><rect x="1325" y="1066.500" width="18.500" height="16" rx="3" fill="#5c5c5c"/>
<path d="M1334.500,1070.500 c2,1.500 4,2 5,2 c0,5 -2,8 -5,9.500 c-3,-1.500 -5,-4.500 -5,-9.500 c1,0 3,-.5 5,-2z" fill="#ededed" stroke="#222" stroke-width=".7"/><path d="M1334.500,1071.500v4.500h-4.300M1334.500,1076v5M1334.500,1076h4.300" stroke="#222" stroke-width="1" fill="none"/><path d="M1334.500,1071 c1.500,1 3,1.500 4.300,1.700 v3.300 h-4.300z" fill="#222"/><path d="M1334.500,1076 v5.500 c-2,-1 -3.500,-3 -4,-5.500z" fill="#222"/>
<circle cx="1397.500" cy="1076" r="4.500" fill="#3ee03e"/><rect x="1407.500" y="1066.500" width="10" height="16" rx="3" fill="#5c5c5c"/><circle cx="1413" cy="1076" r="4" fill="#f0f0f0"/>
</svg>
<span class="t" style="left:21.0px;top:5.0px;font-size:12px;color:#000;letter-spacing:-0.44px;">เหลี่ยมลดระดับ.max - Autodesk 3ds Max 2022</span>
<span class="t" style="left:10.0px;top:26.5px;font-size:12px;color:#e0e0e0;letter-spacing:-0.59px;">File</span>
<span class="t" style="left:46.0px;top:26.5px;font-size:12px;color:#e0e0e0;letter-spacing:-0.67px;">Edit</span>
<span class="t" style="left:85.0px;top:26.5px;font-size:12px;color:#e0e0e0;letter-spacing:-0.20px;">Tools</span>
<span class="t" style="left:132.0px;top:26.5px;font-size:12px;color:#e0e0e0;letter-spacing:-0.47px;">Group</span>
<span class="t" style="left:182.6px;top:26.5px;font-size:12px;color:#e0e0e0;letter-spacing:-0.58px;">Views</span>
<span class="t" style="left:231.5px;top:26.5px;font-size:12px;color:#e0e0e0;letter-spacing:-0.34px;">Create</span>
<span class="t" style="left:285.7px;top:26.5px;font-size:12px;color:#e0e0e0;letter-spacing:-0.43px;">Modifiers</span>
<span class="t" style="left:350.6px;top:26.5px;font-size:12px;color:#e0e0e0;letter-spacing:-0.39px;">Animation</span>
<span class="t" style="left:420.3px;top:26.5px;font-size:12px;color:#e0e0e0;letter-spacing:-0.44px;">Graph Editors</span>
<span class="t" style="left:509.0px;top:26.5px;font-size:12px;color:#e0e0e0;letter-spacing:-0.54px;">Rendering</span>
<span class="t" style="left:579.5px;top:26.5px;font-size:12px;color:#e0e0e0;letter-spacing:-0.47px;">Customize</span>
<span class="t" style="left:652.5px;top:26.5px;font-size:12px;color:#e0e0e0;letter-spacing:-0.58px;">Scripting</span>
<span class="t" style="left:714.3px;top:26.5px;font-size:12px;color:#e0e0e0;letter-spacing:-0.26px;">Content</span>
<span class="t" style="left:774.6px;top:26.5px;font-size:12px;color:#e0e0e0;letter-spacing:-0.64px;">Civil View</span>
<span class="t" style="left:839.5px;top:26.5px;font-size:12px;color:#e0e0e0;letter-spacing:-0.67px;">Help</span>
<span class="t" style="left:882.0px;top:26.5px;font-size:12px;color:#e0e0e0;letter-spacing:-0.47px;">Substance</span>
<span class="t" style="left:954.6px;top:26.5px;font-size:12px;color:#e0e0e0;letter-spacing:-0.46px;">Arnold</span>
<span class="t" style="left:1006.3px;top:26.5px;font-size:12px;color:#e0e0e0;letter-spacing:-0.50px;">Phoenix FD</span>
<span class="t" style="left:182.0px;top:50.5px;font-size:11px;color:#c8c8c8;">All</span>
<span class="t" style="left:507.0px;top:50.5px;font-size:11px;color:#c8c8c8;">View</span>
<span class="t" style="left:840.5px;top:49.5px;font-size:11px;color:#d8d8d8;letter-spacing:-0.42px;">Create Selection Set</span>
<span class="t" style="left:1341.0px;top:54.0px;font-size:11px;color:#d0d0d0;letter-spacing:-0.54px;">C:\Users\User\D</span>
<span class="t" style="left:33.0px;top:111.0px;font-size:12px;color:#e8e8e8;letter-spacing:0.16px;">Modeling</span>
<span class="t" style="left:114.0px;top:111.0px;font-size:12px;color:#b9b9b9;letter-spacing:-0.21px;">Freeform</span>
<span class="t" style="left:205.0px;top:111.0px;font-size:12px;color:#b9b9b9;letter-spacing:-0.15px;">Selection</span>
<span class="t" style="left:297.5px;top:111.0px;font-size:12px;color:#b9b9b9;letter-spacing:-0.16px;">Object Paint</span>
<span class="t" style="left:405.5px;top:111.0px;font-size:12px;color:#b9b9b9;letter-spacing:-0.11px;">Populate</span>
<span class="t" style="left:15.0px;top:129.0px;font-size:12px;color:#efefef;letter-spacing:-0.03px;">Polygon Modeling</span>
<span class="t" style="left:47.0px;top:155.8px;font-size:11.5px;color:#d6d6d6;letter-spacing:-0.09px;">[+] [Perspective ] [Standard ] [Edged Faces ]</span>
<span class="t" style="left:69.0px;top:993.0px;font-size:11px;color:#d8d8d8;letter-spacing:-0.23px;">0 / 100</span>
<span class="t" style="left:61.9px;top:1023.0px;font-size:11px;color:#e8d86a;">0</span>
<span class="t" style="left:154.4px;top:1023.0px;font-size:11px;color:#d0d0d0;">5</span>
<span class="t" style="left:243.9px;top:1023.0px;font-size:11px;color:#d0d0d0;">10</span>
<span class="t" style="left:336.4px;top:1023.0px;font-size:11px;color:#d0d0d0;">15</span>
<span class="t" style="left:428.9px;top:1023.0px;font-size:11px;color:#d0d0d0;">20</span>
<span class="t" style="left:521.4px;top:1023.0px;font-size:11px;color:#d0d0d0;">25</span>
<span class="t" style="left:613.9px;top:1023.0px;font-size:11px;color:#d0d0d0;">30</span>
<span class="t" style="left:706.4px;top:1023.0px;font-size:11px;color:#d0d0d0;">35</span>
<span class="t" style="left:798.9px;top:1023.0px;font-size:11px;color:#d0d0d0;">40</span>
<span class="t" style="left:891.4px;top:1023.0px;font-size:11px;color:#d0d0d0;">45</span>
<span class="t" style="left:983.9px;top:1023.0px;font-size:11px;color:#d0d0d0;">50</span>
<span class="t" style="left:1076.4px;top:1023.0px;font-size:11px;color:#d0d0d0;">55</span>
<span class="t" style="left:1168.9px;top:1023.0px;font-size:11px;color:#d0d0d0;">60</span>
<span class="t" style="left:1261.4px;top:1023.0px;font-size:11px;color:#d0d0d0;">65</span>
<span class="t" style="left:1353.9px;top:1023.0px;font-size:11px;color:#d0d0d0;">70</span>
<span class="t" style="left:107.0px;top:1046.0px;font-size:11px;color:#f0f0f0;letter-spacing:-0.55px;">None Selected</span>
<span class="t" style="left:107.0px;top:1070.5px;font-size:11px;color:#f0f0f0;letter-spacing:-0.36px;">Click or click-and-drag to select objects</span>
<span class="t" style="left:8.0px;top:1065.2px;font-size:11.5px;color:#8a8a8a;letter-spacing:-0.69px;font-family:'Liberation Mono','DejaVu Sans Mono',monospace;">MAXScript Mini</span>
<span class="t" style="left:1214.0px;top:1046.0px;font-size:11px;color:#f0f0f0;letter-spacing:-0.20px;">X:</span>
<span class="t" style="left:1230.0px;top:1047.0px;font-size:11px;color:#8f8f8f;letter-spacing:-0.34px;">-2.204m</span>
<span class="t" style="left:1296.0px;top:1046.0px;font-size:11px;color:#f0f0f0;letter-spacing:-0.40px;">Y:</span>
<span class="t" style="left:1311.0px;top:1047.0px;font-size:11px;color:#8f8f8f;letter-spacing:-0.45px;">1.087m</span>
<span class="t" style="left:1376.5px;top:1046.0px;font-size:11px;color:#f0f0f0;letter-spacing:-0.39px;">Z:</span>
<span class="t" style="left:1391.5px;top:1047.0px;font-size:11px;color:#8f8f8f;">0.0m</span>
<span class="t" style="left:1349.0px;top:1070.5px;font-size:11px;color:#f0f0f0;letter-spacing:-0.55px;">Enabled:</span>
<div class="a" id="panel"></div>
<svg width="1920" height="1080" viewBox="0 0 1920 1080">
<!-- 3ds max logo -->
<polygon points="1484.4,460.4 1548.9,460.4 1521.5,487.8 1472.6,487.8" fill="#007d80"/>
<polygon points="1548.900,460.4 1583.7,529.3 1521.5,487.8" fill="#006466"/>
<polygon points="1472.6,487.8 1521.5,487.8 1583.7,529.3 1505.9,501.1" fill="#172c2c"/>
<polygon points="1521.5,487.800 1583.7,529.3 1520,507 1510,494" fill="#0e1818"/>
<polygon points="1474.8,530.7 1506.3,501.3 1520,507 1520,553.7 1506.7,559.6" fill="#007b7e"/>
<polygon points="1520,507 1583.7,529.300 1520,553.7" fill="#005a5d"/>
<polygon points="1472.6,572.2 1521.5,572.2 1583.7,529.30 1506.7,559.6" fill="#1a3232"/>
<polygon points="1521.5,572.200 1583.7,529.3 1520,553.7 1508,566" fill="#0f1d1d"/>
<polygon points="1472.6,572.2 1521.5,572.2 1548.9,599.6 1484.4,599.6" fill="#006b6e"/>
<polygon points="1521.5,572.20 1583.7,529.3 1548.9,599.6" fill="#004244"/>
<rect x="1597.3" y="462" width="2.4" height="136" fill="#a6a6a6"/>
<!-- 3d easy studio logo -->
<g id="hex" fill="none" stroke="#c4c4c4" stroke-width="1" stroke-linecap="round">
<path d="M1663.0,699.5 L1570.7,751.9 M1570.7,751.9 L1570.7,856.9 M1616.8,725.7 L1755.3,804.4 M1570.7,751.9 L1755.3,856.9 M1570.7,804.4 L1709.2,883.1 M1570.7,804.4 L1709.2,725.7 M1570.7,856.9 L1755.3,751.9 M1616.8,883.1 L1755.3,804.4 M1616.8,725.7 L1616.8,883.1 M1709.2,725.7 L1709.2,883.1"/>
</g>
<g fill="none" stroke="#fff" stroke-width="5.7" stroke-linejoin="round" stroke-linecap="round">
<path d="M1663.0,699.5 L1755.3,751.9 L1755.3,856.9 L1663.0,909.3 L1570.2,856.6" stroke-linecap="butt"/>
<path d="M1660.8,700.5 L1660.8,908.3"/>
<path d="M1570.2,751.6 L1661.0,803.4" stroke-linecap="butt"/>
<path d="M1616.8,830.6 L1661.0,855.9" stroke-linecap="butt"/>
</g>
</svg>
<span class="t" id="thai" style="left:1482.8px;top:99.3px;font-size:66px;color:#fff;transform:scaleX(.802);font-family:'Liberation Sans','Loma','Noto Sans Thai','Garuda','Tlwg Typo','FreeSans',sans-serif">การสร้างโมเดล</span>
<span class="t" id="wall" style="left:1437px;top:210.3px;font-size:104.3px;color:#fff;letter-spacing:-1.4px;transform:scaleX(.939)">WALL-021</span>
<span class="t" id="adsk" style="left:1617px;top:480px;font-size:49.500px;color:#f4f4f4;font-family:'DejaVu Sans','Liberation Sans',sans-serif;font-weight:200;-webkit-text-stroke:.3px #f4f4f4;transform:scaleX(.8375)">AUTODESK</span>
<span class="t" id="max3" style="left:1616.5px;top:526.5px;font-size:50px;color:#fff;font-weight:bold;letter-spacing:2.2px">3DS MAX</span>
<span class="t" id="easy" style="left:1554px;top:942.5px;font-size:23.500px;color:#f0f0f0;font-family:'DejaVu Sans','Liberation Sans',sans-serif;font-weight:200;-webkit-text-stroke:.25px #f0f0f0;letter-spacing:1.6px">3D EASY STUDIO</span>
<span class="t" id="www" style="left:1450.3px;top:1019.5px;font-size:32px;color:#fff;letter-spacing:-.12px">WWW.3DEASYSTUDIO.COM</span>

</body></html>
